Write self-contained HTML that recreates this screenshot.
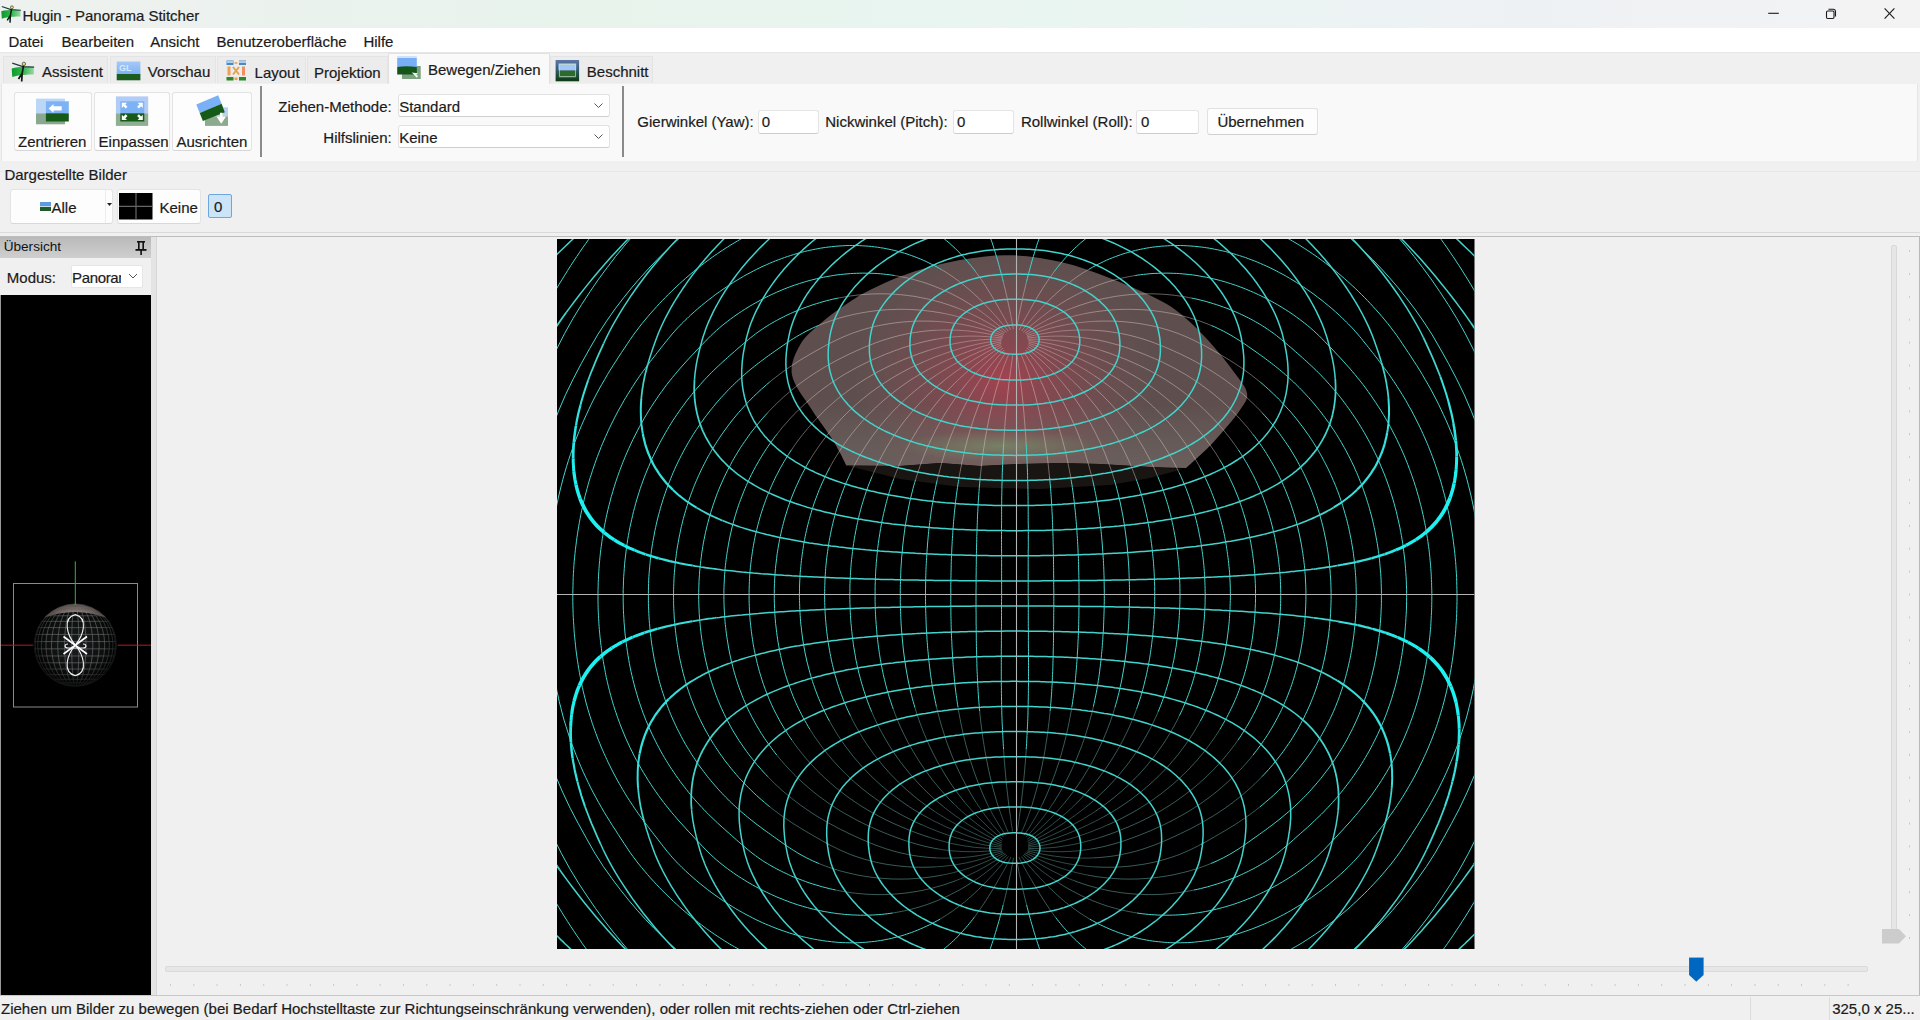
<!DOCTYPE html>
<html><head><meta charset="utf-8">
<style>
html,body{margin:0;padding:0;width:1920px;height:1020px;overflow:hidden;background:#f0f0f0;font-family:"Liberation Sans",sans-serif;color:#1a1a1a}
.a{position:absolute}
.t{position:absolute;white-space:nowrap;line-height:1;font-size:15px;color:#1b1b1b;-webkit-text-stroke:0.2px #1b1b1b}
.box{position:absolute;box-sizing:border-box}
</style></head><body>
<div class="box" style="left:0px;top:0px;width:1920px;height:28px;background:linear-gradient(90deg,#eef1ef 0%,#e8f3ec 30%,#e9f5f1 55%,#eef1f4 80%,#f3f3f3 100%)"></div>
<div class="t" style="left:22.50px;top:8.10px;">Hugin - Panorama Stitcher</div>
<svg class="a" style="left:1760px;top:0px" width="160" height="28"><g stroke="#1a1a1a" stroke-width="1.1" fill="none"><line x1="8.2" y1="13.3" x2="18.8" y2="13.3"/><rect x="66.5" y="11" width="7.5" height="7.5" rx="1.2"/><path d="M68.5 9.2 h4.8 a2.2 2.2 0 0 1 2.2 2.2 v5"/><line x1="124.6" y1="8.4" x2="134.4" y2="18.6"/><line x1="134.4" y1="8.4" x2="124.6" y2="18.6"/></g></svg>
<div class="box" style="left:0px;top:28px;width:1920px;height:24px;background:#ffffff"></div>
<div class="t" style="left:8.40px;top:33.50px;">Datei</div>
<div class="t" style="left:61.50px;top:33.50px;">Bearbeiten</div>
<div class="t" style="left:150.25px;top:33.50px;">Ansicht</div>
<div class="t" style="left:216.50px;top:33.50px;">Benutzeroberfläche</div>
<div class="t" style="left:363.40px;top:33.50px;">Hilfe</div>
<div class="box" style="left:0px;top:52px;width:1920px;height:32px;background:#f0f0f0;border-top:1px solid #e6e6e6"></div>
<div class="box" style="left:3px;top:56px;width:105px;height:27px;background:#ececec;border:1px solid #e4e4e4;border-bottom:none"></div>
<div class="box" style="left:110px;top:56px;width:106px;height:27px;background:#ececec;border:1px solid #e4e4e4;border-bottom:none"></div>
<div class="box" style="left:217px;top:56px;width:89px;height:27px;background:#ececec;border:1px solid #e4e4e4;border-bottom:none"></div>
<div class="box" style="left:307px;top:56px;width:81px;height:27px;background:#ececec;border:1px solid #e4e4e4;border-bottom:none"></div>
<div class="box" style="left:550px;top:56px;width:103px;height:27px;background:#ececec;border:1px solid #e4e4e4;border-bottom:none"></div>
<div class="box" style="left:388px;top:53px;width:162px;height:32px;background:#f9f9f9;border:1px solid #e2e2e2;border-bottom:none"></div>
<div class="t" style="left:42.10px;top:63.90px;">Assistent</div>
<div class="t" style="left:147.75px;top:63.90px;">Vorschau</div>
<div class="t" style="left:254.60px;top:64.50px;">Layout</div>
<div class="t" style="left:314.00px;top:64.50px;">Projektion</div>
<div class="t" style="left:428.00px;top:61.60px;">Bewegen/Ziehen</div>
<div class="t" style="left:586.80px;top:64.30px;">Beschnitt</div>
<div class="box" style="left:1px;top:84px;width:1917px;height:77px;background:#f9f9f9;border-left:1px solid #e6e6e6;border-right:1px solid #e6e6e6"></div>
<div class="box" style="left:14px;top:92px;width:78px;height:59px;background:#fdfdfd;border:1px solid #e3e3e3;border-bottom-color:#d6d6d6;border-radius:3px"></div>
<div class="box" style="left:94px;top:92px;width:76px;height:59px;background:#fdfdfd;border:1px solid #e3e3e3;border-bottom-color:#d6d6d6;border-radius:3px"></div>
<div class="box" style="left:172px;top:92px;width:80px;height:59px;background:#fdfdfd;border:1px solid #e3e3e3;border-bottom-color:#d6d6d6;border-radius:3px"></div>
<div class="t" style="left:18.00px;top:134.40px;">Zentrieren</div>
<div class="t" style="left:98.60px;top:134.40px;">Einpassen</div>
<div class="t" style="left:176.50px;top:134.40px;">Ausrichten</div>
<div class="box" style="left:260px;top:86px;width:2px;height:71px;background:#8a8a8a"></div>
<div class="box" style="left:622px;top:86px;width:2px;height:71px;background:#8a8a8a"></div>
<div class="t" style="right:1528.30px;top:98.90px;">Ziehen-Methode:</div>
<div class="t" style="right:1528.30px;top:130.00px;">Hilfslinien:</div>
<div class="box" style="left:398px;top:94px;width:212px;height:23px;background:#ffffff;border:1px solid #e2e2e2;border-bottom-color:#cfcfcf;border-radius:3px"></div>
<div class="box" style="left:398px;top:125px;width:212px;height:23px;background:#ffffff;border:1px solid #e2e2e2;border-bottom-color:#cfcfcf;border-radius:3px"></div>
<div class="t" style="left:399.20px;top:98.90px;">Standard</div>
<div class="t" style="left:399.20px;top:130.00px;">Keine</div>
<svg class="a" style="left:590px;top:98px" width="16" height="48"><g stroke="#555" stroke-width="1" fill="none"><polyline points="4.5,5.5 8.5,9.5 12.5,5.5"/><polyline points="4.5,36.5 8.5,40.5 12.5,36.5"/></g></svg>
<div class="t" style="left:637.30px;top:114.30px;">Gierwinkel (Yaw):</div>
<div class="t" style="left:825.25px;top:114.30px;">Nickwinkel (Pitch):</div>
<div class="t" style="left:1020.90px;top:114.30px;">Rollwinkel (Roll):</div>
<div class="box" style="left:758px;top:110px;width:61px;height:24px;background:#ffffff;border:1px solid #e4e4e4;border-bottom-color:#cdcdcd;border-radius:3px"></div>
<div class="box" style="left:953px;top:110px;width:61px;height:24px;background:#ffffff;border:1px solid #e4e4e4;border-bottom-color:#cdcdcd;border-radius:3px"></div>
<div class="box" style="left:1136px;top:110px;width:63px;height:24px;background:#ffffff;border:1px solid #e4e4e4;border-bottom-color:#cdcdcd;border-radius:3px"></div>
<div class="t" style="left:761.70px;top:114.30px;">0</div>
<div class="t" style="left:957.00px;top:114.30px;">0</div>
<div class="t" style="left:1141.00px;top:114.30px;">0</div>
<div class="box" style="left:1207px;top:108px;width:111px;height:27px;background:#fdfdfd;border:1px solid #e1e1e1;border-bottom-color:#d0d0d0;border-radius:3px"></div>
<div class="t" style="left:1217.40px;top:114.30px;">Übernehmen</div>
<div class="box" style="left:0px;top:171px;width:1920px;height:1px;background:#e8e8e8"></div>
<div class="t" style="left:4.40px;top:167.40px;">Dargestellte Bilder</div>
<div class="box" style="left:10px;top:189px;width:103px;height:35px;background:#fdfdfd;border:1px solid #e4e4e4;border-bottom-color:#d8d8d8;border-radius:3px"></div>
<div class="box" style="left:105px;top:190px;width:1px;height:33px;background:#ececec"></div>
<svg class="a" style="left:106px;top:202px" width="8" height="6"><polygon points="1,1 6,1 3.5,4" fill="#222"/></svg>
<div class="box" style="left:40px;top:202px;width:11px;height:9px;background:linear-gradient(#5b9be0 0,#5b9be0 45%,#c8d8e8 45%,#c8d8e8 55%,#1e5a2a 55%)"></div>
<div class="t" style="left:51.50px;top:199.50px;">Alle</div>
<div class="box" style="left:117px;top:189px;width:84px;height:35px;background:#fdfdfd;border:1px solid #e4e4e4;border-bottom-color:#d8d8d8;border-radius:3px"></div>
<svg class="a" style="left:119px;top:193px" width="34" height="27"><rect x="0" y="0" width="33.5" height="26.5" fill="#000"/><line x1="17" y1="0" x2="17" y2="26.5" stroke="#666" stroke-width="1.2"/><line x1="0" y1="13.3" x2="33.5" y2="13.3" stroke="#666" stroke-width="1.2"/></svg>
<div class="t" style="left:159.50px;top:199.50px;">Keine</div>
<div class="box" style="left:208px;top:194px;width:24px;height:24px;background:#cce4f7;border:1px solid #6fa6dc;border-radius:2px"></div>
<div class="t" style="left:214.00px;top:199.10px;">0</div>
<div class="box" style="left:0px;top:232px;width:1920px;height:1px;background:#dadada"></div>
<div class="box" style="left:0px;top:236px;width:1920px;height:1px;background:#bdbdbd"></div>
<div class="box" style="left:0px;top:237px;width:151px;height:21px;background:linear-gradient(#b9b9b9,#cfcfcf)"></div>
<div class="t" style="left:3.70px;top:240.19px;font-size:13.6px;color:#111;-webkit-text-stroke:0">Übersicht</div>
<svg class="a" style="left:134px;top:240px" width="14" height="16"><g fill="#111"><rect x="3" y="1" width="8" height="1.6"/><rect x="4" y="1" width="1.6" height="9"/><rect x="8.4" y="1" width="1.6" height="9"/><rect x="1.5" y="9" width="11" height="1.8"/><rect x="6.3" y="10" width="1.6" height="5"/></g></svg>
<div class="box" style="left:0px;top:258px;width:151px;height:37px;background:#f0f0f0"></div>
<div class="t" style="left:6.80px;top:269.60px;">Modus:</div>
<div class="box" style="left:71px;top:265px;width:72px;height:23px;background:#ffffff;border:1px solid #e6e6e6;border-radius:2px"></div>
<div class="a" style="left:72px;top:265px;width:49px;height:23px;overflow:hidden"><div class="t" style="left:0px;top:4.9px;letter-spacing:-0.35px">Panorama</div></div>
<svg class="a" style="left:127px;top:271px" width="12" height="10"><polyline points="2,3 6,7 10,3" stroke="#555" stroke-width="1" fill="none"/></svg>
<div class="box" style="left:0px;top:295px;width:151px;height:700px;background:#000;border-left:1px solid #9a9a9a"></div>
<div class="box" style="left:151px;top:237px;width:6px;height:758px;background:#e4e4e4;border-right:1px solid #d6d6d6"></div>
<svg class="a" style="left:1px;top:295px" width="150" height="700" viewBox="1 295 150 700"><defs><clipPath id="sph"><circle cx="75.3" cy="645.2" r="41.6"/></clipPath><radialGradient id="sg" cx="0.5" cy="0.5" r="0.5"><stop offset="0" stop-color="#1a1f1e"/><stop offset="0.8" stop-color="#0c0d0d"/><stop offset="1" stop-color="#000"/></radialGradient><radialGradient id="fade" cx="0.5" cy="0.45" r="0.55"><stop offset="0.6" stop-color="#000" stop-opacity="0"/><stop offset="1" stop-color="#000" stop-opacity="0.85"/></radialGradient></defs><rect x="13.5" y="583.5" width="124" height="123.5" fill="none" stroke="#8a8a8a" stroke-width="1"/><line x1="1" y1="645.2" x2="34" y2="645.2" stroke="#c01818" stroke-width="1"/><line x1="117" y1="645.2" x2="151" y2="645.2" stroke="#c01818" stroke-width="1"/><circle cx="75.3" cy="645.2" r="41.6" fill="url(#sg)"/><g clip-path="url(#sph)" stroke="#b0bcb8" stroke-width="0.7" fill="none" opacity="0.5"><line x1="30" y1="685.38" x2="120" y2="685.38"/><line x1="30" y1="682.90" x2="120" y2="682.90"/><line x1="30" y1="679.28" x2="120" y2="679.28"/><line x1="30" y1="674.62" x2="120" y2="674.62"/><line x1="30" y1="669.06" x2="120" y2="669.06"/><line x1="30" y1="662.78" x2="120" y2="662.78"/><line x1="30" y1="655.97" x2="120" y2="655.97"/><line x1="30" y1="648.83" x2="120" y2="648.83"/><line x1="30" y1="641.57" x2="120" y2="641.57"/><line x1="30" y1="634.43" x2="120" y2="634.43"/><line x1="30" y1="627.62" x2="120" y2="627.62"/><line x1="30" y1="621.34" x2="120" y2="621.34"/><line x1="30" y1="615.78" x2="120" y2="615.78"/><line x1="30" y1="611.12" x2="120" y2="611.12"/><line x1="30" y1="607.50" x2="120" y2="607.50"/><line x1="30" y1="605.02" x2="120" y2="605.02"/><line x1="30" y1="603.76" x2="120" y2="603.76"/><ellipse cx="75.3" cy="645.2" rx="3.63" ry="41.6"/><ellipse cx="75.3" cy="645.2" rx="10.77" ry="41.6"/><ellipse cx="75.3" cy="645.2" rx="17.58" ry="41.6"/><ellipse cx="75.3" cy="645.2" rx="23.86" ry="41.6"/><ellipse cx="75.3" cy="645.2" rx="29.42" ry="41.6"/><ellipse cx="75.3" cy="645.2" rx="34.08" ry="41.6"/><ellipse cx="75.3" cy="645.2" rx="37.70" ry="41.6"/><ellipse cx="75.3" cy="645.2" rx="40.18" ry="41.6"/><ellipse cx="75.3" cy="645.2" rx="41.44" ry="41.6"/></g><path d="M43,618 Q75,590 107,618 Q75,606 43,618 Z" fill="#9d8f8a" opacity="0.85" clip-path="url(#sph)"/><circle cx="75.3" cy="645.2" r="42.5" fill="url(#fade)"/><line x1="75.3" y1="561.3" x2="75.3" y2="605" stroke="#2eb82e" stroke-width="1"/><g stroke="#f2f2f2" stroke-width="1.1" fill="none"><path d="M75.3,645.2 C67,635 62,618 75.3,614.6 C88.6,618 83.6,635 75.3,645.2 C67,655 62,672 75.3,675.8 C88.6,672 83.6,655 75.3,645.2"/><path d="M68,644 C64,644 64,648 68,648 L83,648 C87,648 87,644 83,644"/></g><g stroke="#ffffff" stroke-width="1.6"><line x1="63.5" y1="636.5" x2="87" y2="654"/><line x1="63.5" y1="654" x2="87" y2="636.5"/></g></svg>
<div class="box" style="left:157px;top:237px;width:1763px;height:758px;background:#f0f0f0;border-right:1px solid #b8b8b8"></div>
<svg class="a" style="left:0;top:0" width="1920" height="1020" viewBox="0 0 1920 1020">
<defs>
<clipPath id="fr"><rect x="557" y="239" width="917.5" height="710"/></clipPath>
<radialGradient id="red" gradientUnits="userSpaceOnUse" cx="1003" cy="380" r="150" gradientTransform="translate(1003 372) scale(1 0.85) translate(-1003 -372)"><stop offset="0" stop-color="#b33f50" stop-opacity="0.8"/><stop offset="0.45" stop-color="#9a4552" stop-opacity="0.45"/><stop offset="1" stop-color="#8a5058" stop-opacity="0"/></radialGradient>
<linearGradient id="band" gradientUnits="userSpaceOnUse" x1="0" y1="405" x2="0" y2="466"><stop offset="0" stop-color="#7c7872" stop-opacity="0"/><stop offset="0.6" stop-color="#76746c" stop-opacity="0.3"/><stop offset="1" stop-color="#7a7670" stop-opacity="0.4"/></linearGradient>
<radialGradient id="grn" gradientUnits="userSpaceOnUse" cx="1000" cy="446" r="100" gradientTransform="translate(1000 446) scale(1 0.16) translate(-1000 -446)"><stop offset="0" stop-color="#78a872" stop-opacity="0.5"/><stop offset="1" stop-color="#78a872" stop-opacity="0"/></radialGradient>
</defs>
<rect x="557" y="239" width="917.5" height="710" fill="#000"/>
<g clip-path="url(#fr)">
<path d="M846.5,465.6 C844.4,461.6 839.5,450.7 833.7,441.4 C828.0,432.1 819.0,421.1 812,410 C805.0,398.9 794.0,385.8 792,375 C790.0,364.2 795.2,353.7 800,345 C804.8,336.3 813.2,329.8 821,323 C828.8,316.2 838.0,309.7 846.5,304 C855.0,298.3 861.0,294.3 872,289 C883.0,283.7 898.0,276.8 912.7,272 C927.4,267.2 943.8,262.8 960,260 C976.2,257.2 993.2,255.0 1010,255.3 C1026.8,255.6 1044.0,258.1 1061,262 C1078.0,265.9 1095.0,272.3 1112,279 C1129.0,285.7 1150.0,294.8 1163,302 C1176.0,309.2 1181.5,314.5 1190,322 C1198.5,329.5 1206.6,338.6 1214,347 C1221.4,355.4 1228.8,364.8 1234.3,372.5 C1239.8,380.2 1246.0,386.8 1247,393 C1248.0,399.2 1245.5,401.9 1240,410 C1234.5,418.1 1223.0,431.7 1214,441.4 C1205.0,451.1 1190.7,463.6 1186,468 L1150,467 L1100,464 L1060,463 L1020,464 L980,466 L940,463 L900,466 Z" fill="#5e4f4e"/>
<path d="M846.5,465.6 C844.4,461.6 839.5,450.7 833.7,441.4 C828.0,432.1 819.0,421.1 812,410 C805.0,398.9 794.0,385.8 792,375 C790.0,364.2 795.2,353.7 800,345 C804.8,336.3 813.2,329.8 821,323 C828.8,316.2 838.0,309.7 846.5,304 C855.0,298.3 861.0,294.3 872,289 C883.0,283.7 898.0,276.8 912.7,272 C927.4,267.2 943.8,262.8 960,260 C976.2,257.2 993.2,255.0 1010,255.3 C1026.8,255.6 1044.0,258.1 1061,262 C1078.0,265.9 1095.0,272.3 1112,279 C1129.0,285.7 1150.0,294.8 1163,302 C1176.0,309.2 1181.5,314.5 1190,322 C1198.5,329.5 1206.6,338.6 1214,347 C1221.4,355.4 1228.8,364.8 1234.3,372.5 C1239.8,380.2 1246.0,386.8 1247,393 C1248.0,399.2 1245.5,401.9 1240,410 C1234.5,418.1 1223.0,431.7 1214,441.4 C1205.0,451.1 1190.7,463.6 1186,468 L1150,467 L1100,464 L1060,463 L1020,464 L980,466 L940,463 L900,466 Z" fill="url(#red)"/>
<path d="M846.5,465.6 C844.4,461.6 839.5,450.7 833.7,441.4 C828.0,432.1 819.0,421.1 812,410 C805.0,398.9 794.0,385.8 792,375 C790.0,364.2 795.2,353.7 800,345 C804.8,336.3 813.2,329.8 821,323 C828.8,316.2 838.0,309.7 846.5,304 C855.0,298.3 861.0,294.3 872,289 C883.0,283.7 898.0,276.8 912.7,272 C927.4,267.2 943.8,262.8 960,260 C976.2,257.2 993.2,255.0 1010,255.3 C1026.8,255.6 1044.0,258.1 1061,262 C1078.0,265.9 1095.0,272.3 1112,279 C1129.0,285.7 1150.0,294.8 1163,302 C1176.0,309.2 1181.5,314.5 1190,322 C1198.5,329.5 1206.6,338.6 1214,347 C1221.4,355.4 1228.8,364.8 1234.3,372.5 C1239.8,380.2 1246.0,386.8 1247,393 C1248.0,399.2 1245.5,401.9 1240,410 C1234.5,418.1 1223.0,431.7 1214,441.4 C1205.0,451.1 1190.7,463.6 1186,468 L1150,467 L1100,464 L1060,463 L1020,464 L980,466 L940,463 L900,466 Z" fill="url(#band)"/>
<ellipse cx="1000" cy="446" rx="100" ry="16" fill="url(#grn)"/>
<path d="M846.5,465.6 L900,466 L940,463 L980,466 L1020,464 L1060,463 L1100,464 L1150,467 L1183,469 L1150,478 L1110,485 L1040,489 L960,487 L900,479 Z" fill="#191513"/>
<path d="M1017.3,831.3 1017.7,828.3 1018.2,825.3 1018.6,822.5 1019.0,819.6 1019.4,816.8 1019.5,815.7M1012.5,831.3 1012.1,828.3 1011.6,825.3 1011.2,822.5 1010.8,819.6 1010.4,816.8 1010.3,815.7M1021.4,832.8 1022.4,830.4 1023.4,828.1 1024.6,825.2 1025.7,822.4 1026.8,819.6 1027.9,816.8 1028.9,814.0 1029.9,811.2 1030.7,809.0M1008.4,832.8 1007.4,830.4 1006.4,828.1 1005.2,825.2 1004.1,822.4 1003.0,819.6 1001.9,816.8 1000.9,814.0 999.9,811.2 999.1,809.0M1024.1,835.2 1025.7,832.8 1027.3,830.5 1028.8,828.3 1030.2,826.0 1031.6,823.8 1032.9,821.6 1034.2,819.5 1035.5,817.3 1037.0,814.6 1038.4,811.9 1039.9,809.2 1041.2,806.5 1042.6,803.8M1005.7,835.2 1004.1,832.8 1002.5,830.5 1001.0,828.3 999.6,826.0 998.2,823.8 996.9,821.6 995.6,819.5 994.3,817.3 992.8,814.6 991.4,811.9 989.9,809.2 988.6,806.5 987.2,803.8M1026.1,837.2 1028.3,834.9 1030.4,832.7 1032.3,830.5 1034.2,828.4 1036.1,826.2 1037.8,824.1 1039.5,822.0 1041.2,820.0 1042.8,817.9 1044.4,815.8 1045.9,813.7 1047.4,811.6 1048.9,809.5 1050.3,807.4 1051.8,805.3 1053.1,803.2 1053.8,802.2M1003.7,837.2 1001.5,834.9 999.4,832.7 997.5,830.5 995.6,828.4 993.7,826.2 992.0,824.1 990.3,822.0 988.6,820.0 987.0,817.9 985.4,815.8 983.9,813.7 982.4,811.6 980.9,809.5 979.5,807.4 978.0,805.3 976.7,803.2 976.0,802.2M1027.3,839.3 1029.3,837.7 1031.2,836.1 1033.7,834.0 1036.1,832.0 1038.4,830.0 1040.6,828.0 1042.7,826.0 1044.8,824.0 1046.8,822.1 1048.8,820.1 1050.8,818.1 1052.7,816.1 1054.6,814.2 1056.4,812.2 1058.2,810.2 1060.0,808.2 1061.8,806.1 1063.5,804.1 1064.8,802.6M1002.5,839.3 1000.5,837.7 998.6,836.1 996.1,834.0 993.7,832.0 991.4,830.0 989.2,828.0 987.1,826.0 985.0,824.0 983.0,822.1 981.0,820.1 979.0,818.1 977.1,816.1 975.2,814.2 973.4,812.2 971.6,810.2 969.8,808.2 968.0,806.1 966.3,804.1 965.0,802.6M1027.6,841.4 1030.0,839.9 1032.3,838.5 1034.5,837.1 1036.6,835.7 1039.3,833.8 1042.0,832.0 1044.5,830.1 1047.0,828.3 1049.5,826.5 1051.9,824.7 1054.2,822.8 1056.5,821.0 1058.8,819.2 1061.0,817.3 1063.2,815.4 1065.4,813.6 1067.6,811.7 1069.7,809.8 1071.7,807.8 1073.8,805.9 1075.8,803.9M1002.2,841.4 999.8,839.9 997.5,838.5 995.3,837.1 993.2,835.7 990.5,833.8 987.8,832.0 985.3,830.1 982.8,828.3 980.3,826.5 977.9,824.7 975.6,822.8 973.3,821.0 971.0,819.2 968.8,817.3 966.6,815.4 964.4,813.6 962.2,811.7 960.1,809.8 958.1,807.8 956.0,805.9 954.0,803.9M1028.2,843.0 1030.8,841.8 1033.4,840.5 1035.9,839.3 1038.2,838.1 1040.5,836.8 1042.8,835.6 1045.0,834.4 1047.9,832.7 1050.7,831.1 1053.5,829.4 1056.2,827.8 1058.9,826.1 1061.6,824.5 1064.2,822.8 1066.7,821.1 1069.3,819.4 1071.8,817.6 1074.3,815.9 1076.7,814.1 1079.1,812.3 1081.5,810.5 1083.9,808.7 1086.2,806.8M1001.6,843.0 999.0,841.8 996.4,840.5 993.9,839.3 991.6,838.1 989.3,836.8 987.0,835.6 984.8,834.4 981.9,832.7 979.1,831.1 976.3,829.4 973.6,827.8 970.9,826.1 968.2,824.5 965.6,822.8 963.1,821.1 960.5,819.4 958.0,817.6 955.5,815.9 953.1,814.1 950.7,812.3 948.3,810.5 945.9,808.7 943.6,806.8M1028.2,844.5 1031.2,843.6 1033.9,842.6 1036.6,841.6 1039.2,840.6 1041.7,839.6 1044.2,838.6 1046.6,837.5 1049.0,836.5 1051.4,835.4 1053.7,834.3 1056.0,833.3 1058.3,832.2 1060.6,831.1 1063.5,829.6 1066.5,828.1 1069.4,826.6 1072.3,825.1 1075.1,823.5 1077.9,822.0 1080.7,820.4 1083.5,818.8 1086.2,817.1 1088.9,815.4 1091.6,813.8 1094.2,812.0 1095.5,811.2M1001.6,844.5 998.6,843.6 995.9,842.6 993.2,841.6 990.6,840.6 988.1,839.6 985.6,838.6 983.2,837.5 980.8,836.5 978.4,835.4 976.1,834.3 973.8,833.3 971.5,832.2 969.2,831.1 966.3,829.6 963.3,828.1 960.4,826.6 957.5,825.1 954.7,823.5 951.9,822.0 949.1,820.4 946.3,818.8 943.6,817.1 940.9,815.4 938.2,813.8 935.6,812.0 934.3,811.2M1027.9,846.0 1031.0,845.3 1034.0,844.7 1036.8,844.0 1039.6,843.3 1042.3,842.5 1044.9,841.7 1047.5,840.9 1050.1,840.1 1052.6,839.2 1055.1,838.4 1057.6,837.5 1060.1,836.6 1062.5,835.7 1065.0,834.7 1067.4,833.8 1069.8,832.8 1072.2,831.8 1074.5,830.9 1076.9,829.9 1079.2,828.8 1081.6,827.8 1083.9,826.8 1086.2,825.7 1088.5,824.6 1090.7,823.5 1093.0,822.4 1095.2,821.3 1098.2,819.8 1101.1,818.2 1103.3,817.0M1001.9,846.0 998.8,845.3 995.8,844.7 993.0,844.0 990.2,843.3 987.5,842.5 984.9,841.7 982.3,840.9 979.7,840.1 977.2,839.2 974.7,838.4 972.2,837.5 969.7,836.6 967.3,835.7 964.8,834.7 962.4,833.8 960.0,832.8 957.6,831.8 955.3,830.9 952.9,829.9 950.6,828.8 948.2,827.8 945.9,826.8 943.6,825.7 941.3,824.6 939.1,823.5 936.8,822.4 934.6,821.3 931.6,819.8 928.7,818.2 926.5,817.0M1028.2,847.2 1031.4,846.9 1034.5,846.5 1037.4,846.1 1040.3,845.7 1043.1,845.3 1045.8,844.8 1048.5,844.3 1051.2,843.7 1053.9,843.1 1056.5,842.5 1059.1,841.9 1061.8,841.2 1064.3,840.5 1066.9,839.8 1069.5,839.0 1072.0,838.3 1074.6,837.5 1077.1,836.7 1079.6,835.8 1082.1,835.0 1084.6,834.1 1087.1,833.2 1089.6,832.3 1092.1,831.4 1094.5,830.4 1097.0,829.4 1099.4,828.5 1101.8,827.5 1104.2,826.4 1106.6,825.4 1107.4,825.0M1001.6,847.2 998.4,846.9 995.3,846.5 992.4,846.1 989.5,845.7 986.7,845.3 984.0,844.8 981.3,844.3 978.6,843.7 975.9,843.1 973.3,842.5 970.7,841.9 968.0,841.2 965.5,840.5 962.9,839.8 960.3,839.0 957.8,838.3 955.2,837.5 952.7,836.7 950.2,835.8 947.7,835.0 945.2,834.1 942.7,833.2 940.2,832.3 937.7,831.4 935.3,830.4 932.8,829.4 930.4,828.5 928.0,827.5 925.6,826.4 923.2,825.4 922.4,825.0M1028.2,848.4 1031.5,848.5 1034.6,848.5 1037.6,848.4 1040.5,848.3 1043.3,848.2 1046.1,848.0 1048.9,847.8 1051.6,847.6 1054.3,847.4 1057.1,847.1 1059.8,846.7 1062.4,846.3 1065.1,845.9 1067.8,845.5 1070.4,845.0 1073.1,844.5 1075.8,844.0 1078.4,843.4 1081.0,842.8 1083.7,842.1 1086.3,841.4 1088.9,840.7 1091.5,840.0 1094.1,839.3 1096.7,838.5 1099.3,837.7 1100.2,837.4M1001.6,848.4 998.3,848.5 995.2,848.5 992.2,848.4 989.3,848.3 986.5,848.2 983.7,848.0 980.9,847.8 978.2,847.6 975.5,847.4 972.7,847.1 970.0,846.7 967.4,846.3 964.7,845.9 962.0,845.5 959.4,845.0 956.7,844.5 954.0,844.0 951.4,843.4 948.8,842.8 946.1,842.1 943.5,841.4 940.9,840.7 938.3,840.0 935.7,839.3 933.1,838.5 930.5,837.7 929.6,837.4M1028.0,849.7 1031.2,850.0 1034.3,850.4 1037.2,850.7 1040.1,850.9 1042.9,851.1 1045.7,851.3 1048.5,851.5 1051.2,851.6 1054.0,851.7 1056.7,851.7 1059.4,851.7 1062.1,851.7 1064.8,851.6 1067.5,851.5 1070.2,851.4 1072.9,851.2 1075.6,851.0 1078.3,850.8 1081.0,850.5 1083.7,850.1 1086.4,849.8 1089.1,849.4 1091.8,848.9M1001.8,849.7 998.6,850.0 995.5,850.4 992.6,850.7 989.7,850.9 986.9,851.1 984.1,851.3 981.3,851.5 978.6,851.6 975.8,851.7 973.1,851.7 970.4,851.7 967.7,851.7 965.0,851.6 962.3,851.5 959.6,851.4 956.9,851.2 954.2,851.0 951.5,850.8 948.8,850.5 946.1,850.1 943.4,849.8 940.7,849.4 938.0,848.9M1027.4,850.9 1030.5,851.6 1033.5,852.2 1036.4,852.9 1039.2,853.4 1041.9,854.0 1044.6,854.5 1047.3,855.0 1050.0,855.4 1052.7,855.9 1055.3,856.2 1058.0,856.6 1060.7,856.9 1063.3,857.2 1066.0,857.4 1068.7,857.6 1071.3,857.8 1074.0,857.9 1076.7,858.0 1079.4,858.1 1082.1,858.1 1084.8,858.1 1087.5,858.1 1090.2,858.0 1092.9,857.9 1093.8,857.9M1002.4,850.9 999.3,851.6 996.3,852.2 993.4,852.9 990.6,853.4 987.9,854.0 985.2,854.5 982.5,855.0 979.8,855.4 977.1,855.9 974.5,856.2 971.8,856.6 969.1,856.9 966.5,857.2 963.8,857.4 961.1,857.6 958.5,857.8 955.8,857.9 953.1,858.0 950.4,858.1 947.7,858.1 945.0,858.1 942.3,858.1 939.6,858.0 936.9,857.9 936.0,857.9M1026.6,852.0 1029.5,853.0 1032.3,854.0 1035.0,854.9 1037.7,855.8 1040.3,856.7 1042.9,857.5 1045.4,858.3 1048.0,859.0 1050.5,859.7 1053.1,860.4 1055.6,861.0 1058.1,861.7 1060.7,862.2 1063.2,862.8 1065.8,863.3 1068.4,863.8 1071.0,864.2 1073.5,864.7 1076.1,865.1 1078.8,865.4 1081.4,865.7 1084.0,866.0 1086.7,866.3 1089.3,866.5 1092.0,866.7 1094.7,866.9M1003.2,852.0 1000.3,853.0 997.5,854.0 994.8,854.9 992.1,855.8 989.5,856.7 986.9,857.5 984.4,858.3 981.8,859.0 979.3,859.7 976.7,860.4 974.2,861.0 971.7,861.7 969.1,862.2 966.6,862.8 964.0,863.3 961.4,863.8 958.8,864.2 956.3,864.7 953.7,865.1 951.0,865.4 948.4,865.7 945.8,866.0 943.1,866.3 940.5,866.5 937.8,866.7 935.1,866.9M1025.4,853.0 1028.1,854.3 1030.7,855.6 1033.2,856.8 1035.7,857.9 1038.1,859.0 1040.5,860.1 1042.8,861.2 1045.2,862.2 1047.5,863.2 1049.8,864.1 1052.2,865.0 1054.5,865.9 1056.9,866.8 1059.2,867.6 1061.6,868.4 1064.0,869.1 1066.4,869.9 1068.8,870.6 1071.2,871.3 1073.7,871.9 1076.2,872.6 1078.6,873.2 1081.1,873.7 1083.6,874.3 1086.2,874.8 1087.9,875.1M1004.4,853.0 1001.7,854.3 999.1,855.6 996.6,856.8 994.1,857.9 991.7,859.0 989.3,860.1 987.0,861.2 984.6,862.2 982.3,863.2 980.0,864.1 977.6,865.0 975.3,865.9 972.9,866.8 970.6,867.6 968.2,868.4 965.8,869.1 963.4,869.9 961.0,870.6 958.6,871.3 956.1,871.9 953.6,872.6 951.2,873.2 948.7,873.7 946.2,874.3 943.6,874.8 941.9,875.1M1024.0,853.9 1026.4,855.4 1028.7,856.9 1030.9,858.4 1033.1,859.8 1035.2,861.1 1038.1,862.8 1040.9,864.5 1043.6,866.1 1046.4,867.7 1049.2,869.2 1051.9,870.7 1054.7,872.1 1057.6,873.5 1060.4,874.9 1063.3,876.2 1066.2,877.4 1069.1,878.7 1072.1,879.9 1074.3,880.7M1005.8,853.9 1003.4,855.4 1001.1,856.9 998.9,858.4 996.7,859.8 994.6,861.1 991.7,862.8 988.9,864.5 986.2,866.1 983.4,867.7 980.6,869.2 977.9,870.7 975.1,872.1 972.2,873.5 969.4,874.9 966.5,876.2 963.6,877.4 960.7,878.7 957.7,879.9 955.5,880.7M1023.0,855.2 1024.9,856.9 1026.8,858.6 1029.4,860.7 1031.8,862.8 1034.2,864.8 1036.6,866.7 1038.9,868.6 1041.2,870.4 1043.6,872.2 1045.9,874.0 1048.3,875.7 1050.6,877.4 1053.0,879.1 1055.4,880.7 1057.9,882.3 1059.7,883.5M1006.8,855.2 1004.9,856.9 1003.0,858.6 1000.4,860.7 998.0,862.8 995.6,864.8 993.2,866.7 990.9,868.6 988.6,870.4 986.2,872.2 983.9,874.0 981.5,875.7 979.2,877.4 976.8,879.1 974.4,880.7 971.9,882.3 970.1,883.5M1021.4,856.5 1023.4,858.9 1025.3,861.3 1027.2,863.5 1029.1,865.8 1031.0,867.9 1032.9,870.0 1034.7,872.1 1036.5,874.1 1038.4,876.1 1040.2,878.1 1042.0,880.0 1043.9,882.0 1045.7,883.9M1008.4,856.5 1006.4,858.9 1004.5,861.3 1002.6,863.5 1000.7,865.8 998.8,867.9 996.9,870.0 995.1,872.1 993.3,874.1 991.4,876.1 989.6,878.1 987.8,880.0 985.9,882.0 984.1,883.9M1018.9,856.9 1020.1,859.5 1021.4,862.0 1022.7,864.4 1023.9,866.7 1025.2,869.0 1026.4,871.3 1027.7,873.5 1029.0,875.7 1030.2,877.8 1031.8,880.5M1010.9,856.9 1009.7,859.5 1008.4,862.0 1007.1,864.4 1005.9,866.7 1004.6,869.0 1003.4,871.3 1002.1,873.5 1000.8,875.7 999.6,877.8 998.0,880.5M1016.4,857.8 1016.8,860.5 1017.2,863.0 1017.8,866.0 1018.4,869.0 1018.9,871.9 1019.5,874.8 1019.7,875.3M1013.4,857.8 1013.0,860.5 1012.6,863.0 1012.0,866.0 1011.4,869.0 1010.9,871.9 1010.3,874.8 1010.1,875.3" stroke="#7cc8c0" stroke-width="0.85" stroke-opacity="0.45" fill="none"/><path d="M1019.5,815.7 1019.9,812.9 1020.3,810.1 1020.7,807.3 1021.0,804.5 1021.4,801.7 1021.7,798.9 1022.0,796.1 1022.3,793.3 1022.7,790.5 1022.8,789.4M1022.8,789.4 1023.1,786.6 1023.4,783.8 1023.6,781.1 1023.9,778.3 1024.2,775.5 1024.4,772.7 1024.7,769.9 1024.9,767.1 1025.1,764.3 1025.4,761.5 1025.6,758.7 1025.8,756.0 1026.0,753.2 1026.2,750.4 1026.2,749.3M1010.3,815.7 1009.9,812.9 1009.5,810.1 1009.1,807.3 1008.8,804.5 1008.4,801.7 1008.1,798.9 1007.8,796.1 1007.5,793.3 1007.1,790.5 1007.0,789.4M1007.0,789.4 1006.7,786.6 1006.4,783.8 1006.2,781.1 1005.9,778.3 1005.6,775.5 1005.4,772.7 1005.1,769.9 1004.9,767.1 1004.7,764.3 1004.4,761.5 1004.2,758.7 1004.0,756.0 1003.8,753.2 1003.6,750.4 1003.6,749.3M1030.7,809.0 1031.6,806.3 1032.5,803.5 1033.3,800.7 1034.1,798.0 1034.9,795.2 1035.7,792.4 1036.5,789.7 1037.2,786.9 1037.9,784.1 1038.6,781.3 1039.2,778.6 1039.9,775.8 1040.5,773.0 1041.1,770.2 1041.2,769.7M1041.2,769.7 1041.8,766.9 1042.4,764.1 1042.9,761.3 1043.5,758.5 1044.0,755.7 1044.5,753.0 1045.0,750.2 1045.4,747.4 1045.9,744.6 1046.3,741.8 1046.8,739.0 1047.2,736.2 1047.5,733.4 1047.9,730.6 1048.3,727.8 1048.6,725.0 1049.0,722.2 1049.3,719.4 1049.6,716.6 1049.9,713.8 1050.1,711.0M999.1,809.0 998.2,806.3 997.3,803.5 996.5,800.7 995.7,798.0 994.9,795.2 994.1,792.4 993.3,789.7 992.6,786.9 991.9,784.1 991.2,781.3 990.6,778.6 989.9,775.8 989.3,773.0 988.7,770.2 988.6,769.7M988.6,769.7 988.0,766.9 987.4,764.1 986.9,761.3 986.3,758.5 985.8,755.7 985.3,753.0 984.8,750.2 984.4,747.4 983.9,744.6 983.5,741.8 983.0,739.0 982.6,736.2 982.3,733.4 981.9,730.6 981.5,727.8 981.2,725.0 980.8,722.2 980.5,719.4 980.2,716.6 979.9,713.8 979.7,711.0M1042.6,803.8 1043.8,801.1 1045.1,798.3 1046.3,795.6 1047.5,792.9 1048.6,790.2 1049.8,787.4 1050.9,784.7 1051.9,781.9 1053.0,779.2 1054.0,776.4 1055.0,773.7 1056.0,770.9 1056.9,768.1 1057.8,765.4 1058.2,764.3M1058.2,764.3 1059.1,761.5 1059.9,758.7 1060.8,755.9 1061.6,753.1 1062.4,750.3 1063.1,747.5 1063.9,744.7 1064.6,741.9 1065.3,739.1 1066.0,736.3 1066.7,733.5 1067.3,730.7 1067.9,727.9 1068.5,725.1 1069.1,722.3 1069.6,719.4 1070.2,716.6 1070.7,713.8 1071.2,711.0 1071.6,708.1 1071.8,707.0M987.2,803.8 986.0,801.1 984.7,798.3 983.5,795.6 982.3,792.9 981.2,790.2 980.0,787.4 978.9,784.7 977.9,781.9 976.8,779.2 975.8,776.4 974.8,773.7 973.8,770.9 972.9,768.1 972.0,765.4 971.6,764.3M971.6,764.3 970.7,761.5 969.9,758.7 969.0,755.9 968.2,753.1 967.4,750.3 966.7,747.5 965.9,744.7 965.2,741.9 964.5,739.1 963.8,736.3 963.1,733.5 962.5,730.7 961.9,727.9 961.3,725.1 960.7,722.3 960.2,719.4 959.6,716.6 959.1,713.8 958.6,711.0 958.2,708.1 958.0,707.0M1053.8,802.2 1055.2,800.1 1056.5,797.9 1058.1,795.3 1059.7,792.6 1061.3,789.9 1062.8,787.2 1064.2,784.5 1065.7,781.8 1067.1,779.1 1068.5,776.4 1069.8,773.6 1071.2,770.9 1072.4,768.1 1073.7,765.4 1074.7,763.1M1074.7,763.1 1075.9,760.4 1077.1,757.6 1078.2,754.8 1079.3,752.0 1080.4,749.2 1081.5,746.4 1082.5,743.6 1083.5,740.8 1084.5,737.9 1085.4,735.1 1086.3,732.3 1087.2,729.4 1088.1,726.6 1088.9,723.8 1089.7,720.9 1090.5,718.0 1091.3,715.2 1092.0,712.3 1092.7,709.5 1093.4,706.6M976.0,802.2 974.6,800.1 973.3,797.9 971.7,795.3 970.1,792.6 968.5,789.9 967.0,787.2 965.6,784.5 964.1,781.8 962.7,779.1 961.3,776.4 960.0,773.6 958.6,770.9 957.4,768.1 956.1,765.4 955.1,763.1M955.1,763.1 953.9,760.4 952.7,757.6 951.6,754.8 950.5,752.0 949.4,749.2 948.3,746.4 947.3,743.6 946.3,740.8 945.3,737.9 944.4,735.1 943.5,732.3 942.6,729.4 941.7,726.6 940.9,723.8 940.1,720.9 939.3,718.0 938.5,715.2 937.8,712.3 937.1,709.5 936.4,706.6M1064.8,802.6 1066.4,800.5 1068.1,798.5 1069.7,796.4 1071.3,794.3 1072.9,792.2 1074.4,790.1 1075.9,788.0 1077.4,785.9 1078.9,783.7 1080.3,781.6 1081.7,779.4 1083.1,777.3 1084.5,775.1 1085.8,772.9 1087.1,770.7 1088.4,768.6 1089.7,766.4 1091.0,764.1 1091.3,763.6M1091.3,763.6 1092.5,761.4 1093.7,759.2 1094.9,756.9 1096.0,754.7 1097.2,752.4 1098.3,750.2 1099.4,747.9 1100.4,745.7 1101.7,742.8 1103.0,740.0 1104.2,737.1 1105.4,734.3 1106.6,731.4 1107.7,728.5 1108.8,725.6 1109.9,722.7 1110.9,719.8 1111.9,716.9 1112.9,714.0 1113.8,711.1 1114.7,708.2 1114.9,707.6M965.0,802.6 963.4,800.5 961.7,798.5 960.1,796.4 958.5,794.3 956.9,792.2 955.4,790.1 953.9,788.0 952.4,785.9 950.9,783.7 949.5,781.6 948.1,779.4 946.7,777.3 945.3,775.1 944.0,772.9 942.7,770.7 941.4,768.6 940.1,766.4 938.8,764.1 938.5,763.6M938.5,763.6 937.3,761.4 936.1,759.2 934.9,756.9 933.8,754.7 932.6,752.4 931.5,750.2 930.4,747.9 929.4,745.7 928.1,742.8 926.8,740.0 925.6,737.1 924.4,734.3 923.2,731.4 922.1,728.5 921.0,725.6 919.9,722.7 918.9,719.8 917.9,716.9 916.9,714.0 916.0,711.1 915.1,708.2 914.9,707.6M1075.8,803.9 1077.8,802.0 1079.7,800.0 1081.7,798.0 1083.6,795.9 1085.4,793.9 1087.3,791.9 1089.1,789.8 1090.9,787.7 1092.6,785.6 1094.4,783.5 1096.1,781.4 1097.8,779.3 1099.4,777.1 1101.0,775.0 1102.6,772.8 1104.2,770.6 1105.8,768.4 1107.3,766.2 1108.0,765.1M1108.0,765.1 1109.5,762.9 1111.0,760.7 1112.4,758.4 1113.8,756.2 1115.2,753.9 1116.5,751.7 1117.8,749.4 1119.1,747.1 1120.4,744.8 1121.7,742.5 1122.9,740.2 1124.1,737.9 1125.2,735.5 1126.4,733.2 1127.5,730.9 1128.6,728.5 1129.7,726.2 1130.7,723.8 1131.7,721.4 1132.7,719.0 1133.7,716.7 1134.6,714.3 1135.5,711.9 1136.4,709.5 1136.6,708.9M954.0,803.9 952.0,802.0 950.1,800.0 948.1,798.0 946.2,795.9 944.4,793.9 942.5,791.9 940.7,789.8 938.9,787.7 937.2,785.6 935.4,783.5 933.7,781.4 932.0,779.3 930.4,777.1 928.8,775.0 927.2,772.8 925.6,770.6 924.0,768.4 922.5,766.2 921.8,765.1M921.8,765.1 920.3,762.9 918.8,760.7 917.4,758.4 916.0,756.2 914.6,753.9 913.3,751.7 912.0,749.4 910.7,747.1 909.4,744.8 908.1,742.5 906.9,740.2 905.7,737.9 904.6,735.5 903.4,733.2 902.3,730.9 901.2,728.5 900.1,726.2 899.1,723.8 898.1,721.4 897.1,719.0 896.1,716.7 895.2,714.3 894.3,711.9 893.4,709.5 893.2,708.9M1086.2,806.8 1088.5,804.9 1090.8,803.0 1093.0,801.1 1095.2,799.2 1097.4,797.2 1099.5,795.2 1101.6,793.2 1103.7,791.2 1105.8,789.2 1107.8,787.1 1109.8,785.0 1111.8,782.9 1113.7,780.8 1115.6,778.7 1117.5,776.6 1119.4,774.4 1121.2,772.2 1123.0,770.0 1124.3,768.4M1124.3,768.4 1126.1,766.2 1127.8,763.9 1129.5,761.7 1131.1,759.4 1132.8,757.2 1134.4,754.9 1135.9,752.6 1137.5,750.3 1139.0,747.9 1140.5,745.6 1141.9,743.2 1143.3,740.9 1144.7,738.5 1146.1,736.1 1147.4,733.7 1148.7,731.3 1150.0,728.9 1151.3,726.5 1152.5,724.0 1153.7,721.6 1154.8,719.1 1156.0,716.7 1157.1,714.2 1158.1,711.7M943.6,806.8 941.3,804.9 939.0,803.0 936.8,801.1 934.6,799.2 932.4,797.2 930.3,795.2 928.2,793.2 926.1,791.2 924.0,789.2 922.0,787.1 920.0,785.0 918.0,782.9 916.1,780.8 914.2,778.7 912.3,776.6 910.4,774.4 908.6,772.2 906.8,770.0 905.5,768.4M905.5,768.4 903.7,766.2 902.0,763.9 900.3,761.7 898.7,759.4 897.0,757.2 895.4,754.9 893.9,752.6 892.3,750.3 890.8,747.9 889.3,745.6 887.9,743.2 886.5,740.9 885.1,738.5 883.7,736.1 882.4,733.7 881.1,731.3 879.8,728.9 878.5,726.5 877.3,724.0 876.1,721.6 875.0,719.1 873.8,716.7 872.7,714.2 871.7,711.7M1095.5,811.2 1098.1,809.4 1100.7,807.6 1103.2,805.8 1105.7,804.0 1108.2,802.1 1110.7,800.2 1113.1,798.3 1115.5,796.4 1117.8,794.4 1120.2,792.4 1122.5,790.4 1124.7,788.4 1127.0,786.3 1129.2,784.2 1131.4,782.1 1133.5,780.0 1135.6,777.8 1137.7,775.7 1139.8,773.5M1139.8,773.5 1141.8,771.3 1143.8,769.0 1145.8,766.8 1147.7,764.5 1149.6,762.2 1151.4,759.9 1153.3,757.6 1155.1,755.3 1156.9,752.9 1158.6,750.5 1160.3,748.1 1162.0,745.7 1163.6,743.3 1165.2,740.9 1166.8,738.4 1168.3,735.9 1169.8,733.4 1171.3,730.9 1172.7,728.4 1174.2,725.9 1175.5,723.3 1176.9,720.8 1178.2,718.2 1179.4,715.6M934.3,811.2 931.7,809.4 929.1,807.6 926.6,805.8 924.1,804.0 921.6,802.1 919.1,800.2 916.7,798.3 914.3,796.4 912.0,794.4 909.6,792.4 907.3,790.4 905.1,788.4 902.8,786.3 900.6,784.2 898.4,782.1 896.3,780.0 894.2,777.8 892.1,775.7 890.0,773.5M890.0,773.5 888.0,771.3 886.0,769.0 884.0,766.8 882.1,764.5 880.2,762.2 878.4,759.9 876.5,757.6 874.7,755.3 872.9,752.9 871.2,750.5 869.5,748.1 867.8,745.7 866.2,743.3 864.6,740.9 863.0,738.4 861.5,735.9 860.0,733.4 858.5,730.9 857.1,728.4 855.6,725.9 854.3,723.3 852.9,720.8 851.6,718.2 850.4,715.6M1103.3,817.0 1106.2,815.4 1109.0,813.8 1111.9,812.1 1114.7,810.4 1117.5,808.7 1120.2,806.9 1122.9,805.1 1125.6,803.3 1128.3,801.4 1130.9,799.5 1133.5,797.6 1136.1,795.6 1138.7,793.6 1141.2,791.6 1143.7,789.6 1146.1,787.5 1148.6,785.4 1150.9,783.3 1153.3,781.1 1154.5,780.0M1154.5,780.0 1156.8,777.8 1159.1,775.6 1161.3,773.4 1163.5,771.1 1165.7,768.8 1167.9,766.5 1170.0,764.1 1172.0,761.7 1174.1,759.3 1176.1,756.9 1178.1,754.5 1180.0,752.0 1181.9,749.5 1183.8,747.0 1185.6,744.5 1187.4,741.9 1189.2,739.4 1190.9,736.8 1192.6,734.2 1194.2,731.6 1195.8,728.9 1197.4,726.2 1198.9,723.6 1200.4,720.9M926.5,817.0 923.6,815.4 920.8,813.8 917.9,812.1 915.1,810.4 912.3,808.7 909.6,806.9 906.9,805.1 904.2,803.3 901.5,801.4 898.9,799.5 896.3,797.6 893.7,795.6 891.1,793.6 888.6,791.6 886.1,789.6 883.7,787.5 881.2,785.4 878.9,783.3 876.5,781.1 875.3,780.0M875.3,780.0 873.0,777.8 870.7,775.6 868.5,773.4 866.3,771.1 864.1,768.8 861.9,766.5 859.8,764.1 857.8,761.7 855.7,759.3 853.7,756.9 851.7,754.5 849.8,752.0 847.9,749.5 846.0,747.0 844.2,744.5 842.4,741.9 840.6,739.4 838.9,736.8 837.2,734.2 835.6,731.6 834.0,728.9 832.4,726.2 830.9,723.6 829.4,720.9M1107.4,825.0 1109.8,824.0 1112.2,822.9 1114.5,821.8 1116.9,820.7 1119.2,819.5 1121.5,818.4 1123.8,817.2 1126.1,816.0 1128.4,814.8 1130.7,813.6 1132.9,812.3 1135.1,811.0 1137.4,809.7 1139.6,808.4 1141.8,807.0 1143.9,805.7 1146.1,804.3 1148.2,802.9 1150.4,801.4 1152.5,800.0 1154.6,798.5 1156.6,797.0 1158.7,795.5 1160.8,794.0 1162.8,792.4 1164.8,790.8 1166.8,789.3M1166.8,789.3 1168.8,787.6 1170.7,786.0 1172.7,784.4 1174.6,782.7 1176.5,781.0 1178.4,779.3 1180.2,777.6 1182.1,775.8 1183.9,774.1 1185.7,772.3 1187.5,770.5 1189.2,768.7 1191.0,766.9 1192.7,765.0 1194.4,763.1 1196.1,761.3 1197.8,759.4 1199.4,757.4 1201.0,755.5 1202.6,753.6 1204.2,751.6 1205.8,749.6 1207.3,747.6 1208.8,745.6 1210.3,743.6 1211.7,741.6 1213.2,739.5 1214.6,737.5 1216.0,735.4 1217.4,733.3 1219.2,730.5 1220.0,729.1M922.4,825.0 920.0,824.0 917.6,822.9 915.3,821.8 912.9,820.7 910.6,819.5 908.3,818.4 906.0,817.2 903.7,816.0 901.4,814.8 899.1,813.6 896.9,812.3 894.7,811.0 892.4,809.7 890.2,808.4 888.0,807.0 885.9,805.7 883.7,804.3 881.6,802.9 879.4,801.4 877.3,800.0 875.2,798.5 873.2,797.0 871.1,795.5 869.0,794.0 867.0,792.4 865.0,790.8 863.0,789.3M863.0,789.3 861.0,787.6 859.1,786.0 857.1,784.4 855.2,782.7 853.3,781.0 851.4,779.3 849.6,777.6 847.7,775.8 845.9,774.1 844.1,772.3 842.3,770.5 840.6,768.7 838.8,766.9 837.1,765.0 835.4,763.1 833.7,761.3 832.0,759.4 830.4,757.4 828.8,755.5 827.2,753.6 825.6,751.6 824.0,749.6 822.5,747.6 821.0,745.6 819.5,743.6 818.1,741.6 816.6,739.5 815.2,737.5 813.8,735.4 812.4,733.3 810.6,730.5 809.8,729.1M1100.2,837.4 1102.8,836.5 1105.4,835.7 1107.9,834.8 1110.5,833.9 1113.1,833.0 1115.6,832.0 1118.1,831.0 1120.7,830.1 1123.2,829.0 1125.7,828.0 1128.2,827.0 1130.7,825.9 1133.2,824.8 1135.7,823.7 1138.1,822.6 1140.6,821.4 1143.0,820.3 1145.4,819.1 1147.9,817.8 1150.3,816.6 1152.6,815.3 1155.0,814.0 1157.4,812.7 1159.7,811.4 1162.1,810.0 1164.4,808.6 1166.7,807.2 1169.0,805.8 1171.3,804.3 1173.5,802.8 1175.8,801.3M1175.8,801.3 1178.0,799.7 1180.2,798.2 1182.4,796.6 1184.6,795.0 1186.8,793.3 1188.9,791.7 1191.0,790.0 1193.2,788.3 1195.2,786.6 1197.3,784.8 1199.4,783.0 1201.4,781.2 1203.4,779.4 1205.4,777.6 1207.4,775.7 1209.3,773.8 1211.3,771.9 1213.2,770.0 1215.1,768.0 1216.9,766.0 1218.8,764.0 1220.6,762.0 1222.4,760.0 1224.2,757.9 1225.9,755.8 1227.6,753.7 1229.4,751.6 1231.0,749.5 1232.7,747.3 1234.3,745.2 1235.9,743.0 1237.5,740.7 1238.0,740.0M929.6,837.4 927.0,836.5 924.4,835.7 921.9,834.8 919.3,833.9 916.7,833.0 914.2,832.0 911.7,831.0 909.1,830.1 906.6,829.0 904.1,828.0 901.6,827.0 899.1,825.9 896.6,824.8 894.1,823.7 891.7,822.6 889.2,821.4 886.8,820.3 884.4,819.1 881.9,817.8 879.5,816.6 877.2,815.3 874.8,814.0 872.4,812.7 870.1,811.4 867.7,810.0 865.4,808.6 863.1,807.2 860.8,805.8 858.5,804.3 856.3,802.8 854.0,801.3M854.0,801.3 851.8,799.7 849.6,798.2 847.4,796.6 845.2,795.0 843.0,793.3 840.9,791.7 838.8,790.0 836.6,788.3 834.6,786.6 832.5,784.8 830.4,783.0 828.4,781.2 826.4,779.4 824.4,777.6 822.4,775.7 820.5,773.8 818.5,771.9 816.6,770.0 814.7,768.0 812.9,766.0 811.0,764.0 809.2,762.0 807.4,760.0 805.6,757.9 803.9,755.8 802.2,753.7 800.4,751.6 798.8,749.5 797.1,747.3 795.5,745.2 793.9,743.0 792.3,740.7 791.8,740.0M1091.8,848.9 1094.5,848.5 1097.2,847.9 1099.9,847.4 1102.6,846.8 1105.3,846.2 1107.9,845.5 1110.6,844.8 1113.3,844.1 1116.0,843.3 1118.7,842.5 1121.4,841.6 1124.0,840.8 1126.7,839.9 1129.4,838.9 1132.0,838.0 1134.7,837.0 1137.3,836.0 1140.0,835.0 1142.6,833.9 1145.3,832.9 1147.9,831.8 1150.5,830.7 1153.1,829.6 1155.7,828.4 1158.3,827.2 1160.9,826.1 1163.5,824.8 1166.1,823.6 1168.6,822.3 1171.2,821.1 1173.7,819.7 1176.2,818.4 1178.7,817.0M1178.7,817.0 1181.2,815.6 1183.7,814.2 1186.2,812.8 1188.7,811.3 1191.1,809.8 1193.6,808.3 1196.0,806.7 1198.4,805.1 1200.8,803.5 1203.2,801.8 1205.5,800.1 1207.9,798.4 1210.2,796.7 1212.5,794.9 1214.8,793.1 1217.0,791.3 1219.3,789.4 1221.5,787.5 1223.7,785.6 1225.9,783.7 1228.1,781.7 1230.2,779.7 1232.4,777.7 1234.5,775.6 1236.6,773.5 1238.6,771.4 1240.7,769.3 1242.7,767.1 1244.7,764.9 1246.6,762.7 1248.6,760.4 1250.5,758.2 1252.3,755.9 1253.0,755.1M938.0,848.9 935.3,848.5 932.6,847.9 929.9,847.4 927.2,846.8 924.5,846.2 921.9,845.5 919.2,844.8 916.5,844.1 913.8,843.3 911.1,842.5 908.4,841.6 905.8,840.8 903.1,839.9 900.4,838.9 897.8,838.0 895.1,837.0 892.5,836.0 889.8,835.0 887.2,833.9 884.5,832.9 881.9,831.8 879.3,830.7 876.7,829.6 874.1,828.4 871.5,827.2 868.9,826.1 866.3,824.8 863.7,823.6 861.2,822.3 858.6,821.1 856.1,819.7 853.6,818.4 851.1,817.0M851.1,817.0 848.6,815.6 846.1,814.2 843.6,812.8 841.1,811.3 838.7,809.8 836.2,808.3 833.8,806.7 831.4,805.1 829.0,803.5 826.6,801.8 824.3,800.1 821.9,798.4 819.6,796.7 817.3,794.9 815.0,793.1 812.8,791.3 810.5,789.4 808.3,787.5 806.1,785.6 803.9,783.7 801.7,781.7 799.6,779.7 797.4,777.7 795.3,775.6 793.2,773.5 791.2,771.4 789.1,769.3 787.1,767.1 785.1,764.9 783.2,762.7 781.2,760.4 779.3,758.2 777.5,755.9 776.8,755.1M1093.8,857.9 1096.6,857.7 1099.3,857.5 1102.0,857.3 1104.8,857.0 1107.5,856.7 1110.3,856.4 1113.0,856.0 1115.8,855.6 1118.5,855.1 1121.3,854.6 1124.1,854.0 1126.8,853.4 1129.6,852.8 1132.4,852.1 1135.2,851.4 1137.9,850.6 1140.7,849.7 1141.6,849.5M1141.6,849.5 1144.4,848.6 1147.2,847.6 1150.0,846.6 1152.8,845.6 1155.5,844.6 1158.3,843.5 1161.1,842.3 1163.8,841.2 1166.6,840.0 1169.4,838.8 1172.1,837.5 1174.9,836.3 1177.6,835.0 1180.4,833.7 1183.1,832.4 1185.8,831.0 1188.6,829.7 1191.3,828.3 1194.0,826.9 1196.7,825.4 1199.4,824.0 1202.1,822.5 1204.7,821.0 1207.4,819.4 1210.0,817.9 1212.7,816.3 1215.3,814.6 1217.9,813.0 1220.5,811.2 1223.1,809.5 1225.6,807.7 1228.2,805.9 1230.7,804.1 1233.2,802.2 1235.7,800.2 1238.2,798.3 1240.7,796.3 1243.1,794.3 1245.6,792.2 1248.0,790.1 1250.4,787.9 1252.7,785.8 1255.1,783.6 1257.4,781.3 1259.7,779.0 1261.9,776.7M936.0,857.9 933.2,857.7 930.5,857.5 927.8,857.3 925.0,857.0 922.3,856.7 919.5,856.4 916.8,856.0 914.0,855.6 911.3,855.1 908.5,854.6 905.7,854.0 903.0,853.4 900.2,852.8 897.4,852.1 894.6,851.4 891.9,850.6 889.1,849.7 888.2,849.5M888.2,849.5 885.4,848.6 882.6,847.6 879.8,846.6 877.0,845.6 874.3,844.6 871.5,843.5 868.7,842.3 866.0,841.2 863.2,840.0 860.4,838.8 857.7,837.5 854.9,836.3 852.2,835.0 849.4,833.7 846.7,832.4 844.0,831.0 841.2,829.7 838.5,828.3 835.8,826.9 833.1,825.4 830.4,824.0 827.7,822.5 825.1,821.0 822.4,819.4 819.8,817.9 817.1,816.3 814.5,814.6 811.9,813.0 809.3,811.2 806.7,809.5 804.2,807.7 801.6,805.9 799.1,804.1 796.6,802.2 794.1,800.2 791.6,798.3 789.1,796.3 786.7,794.3 784.2,792.2 781.8,790.1 779.4,787.9 777.1,785.8 774.7,783.6 772.4,781.3 770.1,779.0 767.9,776.7M1094.7,866.9 1097.4,867.0 1100.1,867.1 1102.8,867.2 1105.5,867.2 1108.3,867.3 1111.0,867.2 1113.8,867.2 1116.6,867.1 1119.3,866.9 1122.1,866.8 1124.9,866.5 1127.8,866.3 1130.6,866.0 1133.4,865.7 1136.2,865.3 1139.1,864.9 1141.9,864.5 1144.8,864.0 1147.7,863.5 1150.5,862.9M1150.5,862.9 1153.4,862.3 1156.3,861.6 1159.2,860.9 1162.1,860.1 1165.0,859.3 1167.9,858.4 1170.8,857.5 1173.8,856.5 1176.7,855.5 1179.6,854.4 1182.5,853.2 1185.4,851.9 1188.4,850.6 1191.3,849.3 1194.2,847.8 1197.2,846.4 1200.1,844.8 1201.1,844.3M1204.0,842.8 1206.9,841.2 1209.8,839.5 1212.7,837.9 1215.6,836.2 1218.5,834.5 1221.4,832.8 1224.3,831.1 1227.2,829.4 1230.1,827.6 1232.9,825.9 1235.8,824.1 1238.6,822.2 1241.5,820.3 1244.3,818.4 1247.1,816.5 1249.9,814.5 1252.7,812.4 1255.4,810.4 1258.2,808.2 1260.0,806.8M935.1,866.9 932.4,867.0 929.7,867.1 927.0,867.2 924.3,867.2 921.5,867.3 918.8,867.2 916.0,867.2 913.2,867.1 910.5,866.9 907.7,866.8 904.9,866.5 902.0,866.3 899.2,866.0 896.4,865.7 893.6,865.3 890.7,864.9 887.9,864.5 885.0,864.0 882.1,863.5 879.3,862.9M879.3,862.9 876.4,862.3 873.5,861.6 870.6,860.9 867.7,860.1 864.8,859.3 861.9,858.4 859.0,857.5 856.0,856.5 853.1,855.5 850.2,854.4 847.3,853.2 844.4,851.9 841.4,850.6 838.5,849.3 835.6,847.8 832.6,846.4 829.7,844.8 828.7,844.3M825.8,842.8 822.9,841.2 820.0,839.5 817.1,837.9 814.2,836.2 811.3,834.5 808.4,832.8 805.5,831.1 802.6,829.4 799.7,827.6 796.9,825.9 794.0,824.1 791.2,822.2 788.3,820.3 785.5,818.4 782.7,816.5 779.9,814.5 777.1,812.4 774.4,810.4 771.6,808.2 769.8,806.8M1087.9,875.1 1090.4,875.6 1093.0,876.0 1095.6,876.5 1098.2,876.9 1100.8,877.2 1103.4,877.5 1106.1,877.8 1108.8,878.1 1111.5,878.3 1114.2,878.5 1116.9,878.7 1119.7,878.9 1122.4,879.0 1125.2,879.0 1128.0,879.1 1130.8,879.1 1133.6,879.0 1136.5,879.0 1139.3,878.9 1142.2,878.7 1145.1,878.5 1147.0,878.4M1147.0,878.4 1149.9,878.1 1152.9,877.9 1155.8,877.5 1158.8,877.2 1161.7,876.7 1164.7,876.3 1167.7,875.8 1170.7,875.3 1173.8,874.7 1176.8,874.0 1179.8,873.3 1182.9,872.6 1186.0,871.8 1189.1,871.0 1192.1,870.1 1195.3,869.2 1198.4,868.2 1201.5,867.1 1204.6,866.0 1207.7,864.8 1210.9,863.5M941.9,875.1 939.4,875.6 936.8,876.0 934.2,876.5 931.6,876.9 929.0,877.2 926.4,877.5 923.7,877.8 921.0,878.1 918.3,878.3 915.6,878.5 912.9,878.7 910.1,878.9 907.4,879.0 904.6,879.0 901.8,879.1 899.0,879.1 896.2,879.0 893.3,879.0 890.5,878.9 887.6,878.7 884.7,878.5 882.8,878.4M882.8,878.4 879.9,878.1 876.9,877.9 874.0,877.5 871.0,877.2 868.1,876.7 865.1,876.3 862.1,875.8 859.1,875.3 856.0,874.7 853.0,874.0 850.0,873.3 846.9,872.6 843.8,871.8 840.7,871.0 837.7,870.1 834.5,869.2 831.4,868.2 828.3,867.1 825.2,866.0 822.1,864.8 818.9,863.5M1074.3,880.7 1077.3,881.9 1080.4,882.9 1083.5,884.0 1086.6,885.0 1089.8,886.0 1092.2,886.6 1094.7,887.3 1097.1,888.0 1099.6,888.6 1102.1,889.2 1104.6,889.7 1107.1,890.3 1109.7,890.8 1112.3,891.3 1114.9,891.7 1117.5,892.1 1120.2,892.5 1121.9,892.8M1121.9,892.8 1124.6,893.1 1127.3,893.4 1130.1,893.7 1132.8,893.9 1135.6,894.1 1138.4,894.3 1141.3,894.4 1144.1,894.5 1147.0,894.6 1149.9,894.6 1152.8,894.6 1155.8,894.5 1158.8,894.4 1161.8,894.3 1164.8,894.1 1167.8,893.8 1170.9,893.6 1174.0,893.2 1177.1,892.9 1180.3,892.4 1183.4,892.0 1186.6,891.4 1189.8,890.9 1193.0,890.2 1194.1,890.0M955.5,880.7 952.5,881.9 949.4,882.9 946.3,884.0 943.2,885.0 940.0,886.0 937.6,886.6 935.1,887.3 932.7,888.0 930.2,888.6 927.7,889.2 925.2,889.7 922.7,890.3 920.1,890.8 917.5,891.3 914.9,891.7 912.3,892.1 909.6,892.5 907.9,892.8M907.9,892.8 905.2,893.1 902.5,893.4 899.7,893.7 897.0,893.9 894.2,894.1 891.4,894.3 888.5,894.4 885.7,894.5 882.8,894.6 879.9,894.6 877.0,894.6 874.0,894.5 871.0,894.4 868.0,894.3 865.0,894.1 862.0,893.8 858.9,893.6 855.8,893.2 852.7,892.9 849.5,892.4 846.4,892.0 843.2,891.4 840.0,890.9 836.8,890.2 835.7,890.0M1059.7,883.5 1062.2,885.1 1064.7,886.7 1067.3,888.2 1069.9,889.7 1072.5,891.1 1075.2,892.5 1077.9,893.9 1080.6,895.3 1083.4,896.6 1086.3,897.9 1089.1,899.2 1092.1,900.4 1092.8,900.8M1092.8,900.8 1095.8,901.9 1098.8,903.1 1101.9,904.2 1105.0,905.3 1108.1,906.3 1110.6,907.0 1113.0,907.7 1115.5,908.4 1117.9,909.1 1120.5,909.7 1123.0,910.3 1125.6,910.9 1128.2,911.4 1130.9,911.9 1133.5,912.4 1136.2,912.9 1137.1,913.0M970.1,883.5 967.6,885.1 965.1,886.7 962.5,888.2 959.9,889.7 957.3,891.1 954.6,892.5 951.9,893.9 949.2,895.3 946.4,896.6 943.5,897.9 940.7,899.2 937.7,900.4 937.0,900.8M937.0,900.8 934.0,901.9 931.0,903.1 927.9,904.2 924.8,905.3 921.7,906.3 919.2,907.0 916.8,907.7 914.3,908.4 911.9,909.1 909.3,909.7 906.8,910.3 904.2,910.9 901.6,911.4 898.9,911.9 896.3,912.4 893.6,912.9 892.7,913.0M1045.7,883.9 1047.6,885.8 1049.5,887.7 1051.4,889.6 1053.4,891.4 1055.3,893.3 1057.3,895.1 1059.4,896.9 1061.4,898.7 1063.5,900.5 1065.6,902.3 1066.2,902.7M1066.2,902.7 1068.4,904.4 1070.6,906.1 1072.8,907.8 1075.1,909.5 1077.4,911.2 1079.8,912.8 1082.2,914.4 1084.7,916.0 1087.2,917.5 1089.7,919.1M984.1,883.9 982.2,885.8 980.3,887.7 978.4,889.6 976.4,891.4 974.5,893.3 972.5,895.1 970.4,896.9 968.4,898.7 966.3,900.5 964.2,902.3 963.6,902.7M963.6,902.7 961.4,904.4 959.2,906.1 957.0,907.8 954.7,909.5 952.4,911.2 950.0,912.8 947.6,914.4 945.1,916.0 942.6,917.5 940.1,919.1M1031.8,880.5 1033.3,883.2 1034.9,885.8 1036.5,888.5 1038.0,891.1 1039.6,893.7 1041.3,896.4 1042.9,899.0 1043.9,900.5M1043.9,900.5 1045.6,903.1 1047.3,905.7 1049.0,908.2 1050.8,910.8 1052.6,913.3 1054.1,915.4 1055.6,917.4M998.0,880.5 996.5,883.2 994.9,885.8 993.3,888.5 991.8,891.1 990.2,893.7 988.5,896.4 986.9,899.0 985.9,900.5M985.9,900.5 984.2,903.1 982.5,905.7 980.8,908.2 979.0,910.8 977.2,913.3 975.7,915.4 974.2,917.4M1019.7,875.3 1020.3,878.2 1020.9,881.0 1021.5,883.8 1022.1,886.5 1022.8,889.3 1022.9,889.9M1022.9,889.9 1023.6,892.7 1024.2,895.4 1024.9,898.2 1025.6,901.0 1026.3,903.7 1026.6,904.8M1010.1,875.3 1009.5,878.2 1008.9,881.0 1008.3,883.8 1007.7,886.5 1007.0,889.3 1006.9,889.9M1006.9,889.9 1006.2,892.7 1005.6,895.4 1004.9,898.2 1004.2,901.0 1003.5,903.7 1003.2,904.8" stroke="#7cc8c0" stroke-width="0.85" stroke-opacity="0.55" fill="none"/><path d="M1019.5,372.4 1019.1,369.6 1018.7,366.8 1018.3,363.9 1017.9,361.1 1017.5,358.1 1017.1,355.2M1010.3,372.4 1010.7,369.6 1011.1,366.8 1011.5,363.9 1011.9,361.1 1012.3,358.1 1012.7,355.2M1030.2,378.5 1029.3,375.7 1028.3,372.9 1027.3,370.2 1026.3,367.4 1025.3,364.6 1024.1,361.8 1023.0,358.9 1022.0,356.6 1021.1,354.3M999.6,378.5 1000.5,375.7 1001.5,372.9 1002.5,370.2 1003.5,367.4 1004.5,364.6 1005.7,361.8 1006.8,358.9 1007.8,356.6 1008.7,354.3M1041.7,383.1 1040.4,380.4 1039.1,377.7 1037.7,375.0 1036.2,372.3 1034.7,369.6 1033.2,366.9 1031.9,364.8 1030.6,362.6 1029.2,360.4 1027.8,358.2 1026.4,356.0 1024.8,353.7 1024.1,352.5M988.1,383.1 989.4,380.4 990.7,377.7 992.1,375.0 993.6,372.3 995.1,369.6 996.6,366.9 997.9,364.8 999.2,362.6 1000.6,360.4 1002.0,358.2 1003.4,356.0 1005.0,353.7 1005.7,352.5M1052.6,384.2 1051.2,382.1 1049.8,380.0 1048.4,377.9 1046.9,375.8 1045.4,373.7 1043.9,371.7 1042.4,369.6 1040.8,367.5 1039.1,365.4 1037.5,363.4 1035.7,361.3 1034.0,359.2 1032.1,357.1 1030.2,354.9 1028.2,352.8 1026.1,350.6 1025.6,350.0M977.2,384.2 978.6,382.1 980.0,380.0 981.4,377.9 982.9,375.8 984.4,373.7 985.9,371.7 987.4,369.6 989.0,367.5 990.7,365.4 992.3,363.4 994.1,361.3 995.8,359.2 997.7,357.1 999.6,354.9 1001.6,352.8 1003.7,350.6 1004.2,350.0M1063.4,383.8 1061.7,381.8 1060.0,379.8 1058.2,377.8 1056.4,375.8 1054.6,373.8 1052.7,371.8 1050.9,369.8 1048.9,367.8 1047.0,365.9 1045.0,363.9 1042.9,362.0 1040.8,360.0 1038.7,358.1 1036.5,356.1 1034.2,354.1 1031.8,352.1 1029.3,350.1 1026.7,348.0M966.4,383.8 968.1,381.8 969.8,379.8 971.6,377.8 973.4,375.8 975.2,373.8 977.1,371.8 978.9,369.8 980.9,367.8 982.8,365.9 984.8,363.9 986.9,362.0 989.0,360.0 991.1,358.1 993.3,356.1 995.6,354.1 998.0,352.1 1000.5,350.1 1003.1,348.0M1074.3,382.5 1072.3,380.6 1070.3,378.6 1068.2,376.7 1066.1,374.8 1063.9,372.9 1061.8,371.0 1059.6,369.2 1057.3,367.3 1055.0,365.5 1052.7,363.7 1050.4,361.9 1048.0,360.1 1045.5,358.2 1043.0,356.4 1040.5,354.6 1037.9,352.8 1035.2,351.0 1033.1,349.7 1030.9,348.3 1028.6,346.9 1027.9,346.4M955.5,382.5 957.5,380.6 959.5,378.6 961.6,376.7 963.7,374.8 965.9,372.9 968.0,371.0 970.2,369.2 972.5,367.3 974.8,365.5 977.1,363.7 979.4,361.9 981.8,360.1 984.3,358.2 986.8,356.4 989.3,354.6 991.9,352.8 994.6,351.0 996.7,349.7 998.9,348.3 1001.2,346.9 1001.9,346.4M1084.7,379.7 1082.3,377.8 1080.0,376.0 1077.6,374.2 1075.2,372.4 1072.7,370.6 1070.2,368.9 1067.7,367.2 1065.2,365.5 1062.6,363.8 1060.0,362.1 1057.3,360.4 1054.6,358.8 1051.9,357.2 1049.1,355.6 1046.3,354.0 1043.4,352.3 1041.2,351.2 1039.0,350.0 1036.7,348.8 1034.3,347.6 1031.9,346.4 1029.4,345.2 1028.5,344.8M945.1,379.7 947.5,377.8 949.8,376.0 952.2,374.2 954.6,372.4 957.1,370.6 959.6,368.9 962.1,367.2 964.6,365.5 967.2,363.8 969.8,362.1 972.5,360.4 975.2,358.8 977.9,357.2 980.7,355.6 983.5,354.0 986.4,352.3 988.6,351.2 990.8,350.0 993.1,348.8 995.5,347.6 997.9,346.4 1000.4,345.2 1001.3,344.8M1093.9,375.3 1091.3,373.6 1088.6,371.9 1085.9,370.2 1083.2,368.6 1080.4,367.0 1077.7,365.4 1074.9,363.8 1072.0,362.3 1069.2,360.8 1066.3,359.3 1063.3,357.8 1060.4,356.3 1057.4,354.9 1055.1,353.8 1052.8,352.8 1050.5,351.7 1048.1,350.7 1045.8,349.7 1043.4,348.7 1040.9,347.7 1038.4,346.7 1035.9,345.7 1033.2,344.8 1030.5,343.9 1028.6,343.3M935.9,375.3 938.5,373.6 941.2,371.9 943.9,370.2 946.6,368.6 949.4,367.0 952.1,365.4 954.9,363.8 957.8,362.3 960.6,360.8 963.5,359.3 966.5,357.8 969.4,356.3 972.4,354.9 974.7,353.8 977.0,352.8 979.3,351.7 981.7,350.7 984.0,349.7 986.4,348.7 988.9,347.7 991.4,346.7 993.9,345.7 996.6,344.8 999.3,343.9 1001.2,343.3M1101.6,369.5 1098.7,367.9 1095.7,366.4 1092.7,364.9 1090.5,363.8 1088.2,362.7 1086.0,361.6 1083.7,360.6 1081.4,359.5 1079.0,358.5 1076.7,357.5 1074.4,356.5 1072.0,355.5 1069.6,354.6 1067.2,353.6 1064.8,352.7 1062.4,351.8 1060.0,350.9 1057.5,350.0 1055.0,349.2 1052.6,348.3 1050.0,347.5 1047.5,346.7 1044.9,345.9 1042.3,345.2 1039.7,344.4 1037.0,343.7 1034.2,343.0 1031.3,342.4 1028.3,341.8M928.2,369.5 931.1,367.9 934.1,366.4 937.1,364.9 939.3,363.8 941.6,362.7 943.8,361.6 946.1,360.6 948.4,359.5 950.8,358.5 953.1,357.5 955.4,356.5 957.8,355.5 960.2,354.6 962.6,353.6 965.0,352.7 967.4,351.8 969.8,350.9 972.3,350.0 974.8,349.2 977.2,348.3 979.8,347.5 982.3,346.7 984.9,345.9 987.5,345.2 990.1,344.4 992.8,343.7 995.6,343.0 998.5,342.4 1001.5,341.8M1106.4,361.9 1104.0,360.9 1101.6,359.9 1099.2,358.9 1096.8,357.9 1094.4,356.9 1091.9,356.0 1089.4,355.1 1087.0,354.2 1084.5,353.3 1082.0,352.5 1079.5,351.6 1077.0,350.8 1074.5,350.0 1071.9,349.2 1069.4,348.5 1066.8,347.7 1064.3,347.0 1061.7,346.4 1059.1,345.7 1056.5,345.1 1053.9,344.5 1051.2,343.9 1048.6,343.4 1045.9,342.9 1043.2,342.4 1040.4,342.0 1037.6,341.6 1034.7,341.2 1031.8,340.8 1028.7,340.5M923.4,361.9 925.8,360.9 928.2,359.9 930.6,358.9 933.0,357.9 935.4,356.9 937.9,356.0 940.4,355.1 942.8,354.2 945.3,353.3 947.8,352.5 950.3,351.6 952.8,350.8 955.3,350.0 957.9,349.2 960.4,348.5 963.0,347.7 965.5,347.0 968.1,346.4 970.7,345.7 973.3,345.1 975.9,344.5 978.6,343.9 981.2,343.4 983.9,342.9 986.6,342.4 989.4,342.0 992.2,341.6 995.1,341.2 998.0,340.8 1001.1,340.5M1101.8,350.6 1099.2,349.8 1096.6,349.0 1094.0,348.3 1091.4,347.5 1088.8,346.8 1086.2,346.1 1083.6,345.5 1080.9,344.9 1078.3,344.3 1075.7,343.7 1073.0,343.2 1070.4,342.7 1067.7,342.2 1065.1,341.8 1062.4,341.4 1059.7,341.0 1057.0,340.7 1054.3,340.4 1051.6,340.1 1048.9,339.9 1046.2,339.7 1043.4,339.5 1040.6,339.4 1037.7,339.3 1034.8,339.2 1031.8,339.2 1028.7,339.2 1027.7,339.2M928.0,350.6 930.6,349.8 933.2,349.0 935.8,348.3 938.4,347.5 941.0,346.8 943.6,346.1 946.2,345.5 948.9,344.9 951.5,344.3 954.1,343.7 956.8,343.2 959.4,342.7 962.1,342.2 964.7,341.8 967.4,341.4 970.1,341.0 972.8,340.7 975.5,340.4 978.2,340.1 980.9,339.9 983.6,339.7 986.4,339.5 989.2,339.4 992.1,339.3 995.0,339.2 998.0,339.2 1001.1,339.2 1002.1,339.2M1093.5,339.2 1090.8,338.8 1088.1,338.3 1085.4,338.0 1082.7,337.6 1080.0,337.3 1077.3,337.0 1074.6,336.8 1071.9,336.6 1069.2,336.4 1066.5,336.3 1063.8,336.2 1061.1,336.1 1058.4,336.1 1055.7,336.1 1053.0,336.2 1050.3,336.2 1047.6,336.4 1044.8,336.5 1042.1,336.7 1039.3,336.9 1036.4,337.1 1033.5,337.4 1030.5,337.7 1027.4,338.1M936.3,339.2 939.0,338.8 941.7,338.3 944.4,338.0 947.1,337.6 949.8,337.3 952.5,337.0 955.2,336.8 957.9,336.6 960.6,336.4 963.3,336.3 966.0,336.2 968.7,336.1 971.4,336.1 974.1,336.1 976.8,336.2 979.5,336.2 982.2,336.4 985.0,336.5 987.7,336.7 990.5,336.9 993.4,337.1 996.3,337.4 999.3,337.7 1002.4,338.1M1094.7,330.3 1091.9,330.2 1089.2,330.1 1086.5,330.0 1083.8,330.0 1081.1,330.0 1078.4,330.0 1075.7,330.1 1073.0,330.2 1070.4,330.3 1067.7,330.5 1065.0,330.7 1062.4,330.9 1059.7,331.2 1057.1,331.5 1054.4,331.8 1051.8,332.2 1049.1,332.6 1046.5,333.0 1043.8,333.5 1041.1,334.0 1038.4,334.5 1035.6,335.0 1032.8,335.6 1029.9,336.3 1026.9,336.9M935.1,330.3 937.9,330.2 940.6,330.1 943.3,330.0 946.0,330.0 948.7,330.0 951.4,330.0 954.1,330.1 956.8,330.2 959.4,330.3 962.1,330.5 964.8,330.7 967.4,330.9 970.1,331.2 972.7,331.5 975.4,331.8 978.0,332.2 980.7,332.6 983.3,333.0 986.0,333.5 988.7,334.0 991.4,334.5 994.2,335.0 997.0,335.6 999.9,336.3 1002.9,336.9M1094.6,321.4 1091.9,321.5 1089.2,321.7 1086.6,321.9 1083.9,322.2 1081.3,322.5 1078.7,322.8 1076.0,323.1 1073.4,323.5 1070.9,323.9 1068.3,324.3 1065.7,324.8 1063.1,325.3 1060.6,325.8 1058.1,326.4 1055.5,326.9 1053.0,327.6 1050.5,328.2 1047.9,328.9 1045.4,329.6 1042.9,330.4 1040.4,331.1 1037.8,331.9 1035.2,332.8 1032.5,333.7 1029.8,334.6 1027.0,335.5M935.2,321.4 937.9,321.5 940.6,321.7 943.2,321.9 945.9,322.2 948.5,322.5 951.1,322.8 953.8,323.1 956.4,323.5 958.9,323.9 961.5,324.3 964.1,324.8 966.7,325.3 969.2,325.8 971.7,326.4 974.3,326.9 976.8,327.6 979.3,328.2 981.9,328.9 984.4,329.6 986.9,330.4 989.4,331.1 992.0,331.9 994.6,332.8 997.3,333.7 1000.0,334.6 1002.8,335.5M1086.0,313.4 1083.5,313.9 1081.0,314.5 1078.5,315.0 1076.0,315.6 1073.5,316.2 1071.1,316.9 1068.7,317.5 1066.3,318.2 1063.9,319.0 1061.5,319.7 1058.3,320.7 1055.2,321.8 1052.0,323.0 1048.9,324.2 1045.8,325.4 1043.5,326.4 1041.2,327.4 1038.9,328.4 1036.5,329.5 1034.1,330.6 1031.7,331.7 1029.2,332.9 1026.7,334.1 1025.8,334.5M943.8,313.4 946.3,313.9 948.8,314.5 951.3,315.0 953.8,315.6 956.3,316.2 958.7,316.9 961.1,317.5 963.5,318.2 965.9,319.0 968.3,319.7 971.5,320.7 974.6,321.8 977.8,323.0 980.9,324.2 984.0,325.4 986.3,326.4 988.6,327.4 990.9,328.4 993.3,329.5 995.7,330.6 998.1,331.7 1000.6,332.9 1003.1,334.1 1004.0,334.5M1072.6,308.0 1069.6,309.1 1066.7,310.3 1063.8,311.6 1060.9,312.9 1058.0,314.2 1055.2,315.6 1052.4,317.0 1049.6,318.4 1046.9,319.9 1044.1,321.4 1041.4,323.0 1038.7,324.6 1035.9,326.2 1033.1,328.0 1031.0,329.3 1028.8,330.7 1026.6,332.1 1025.1,333.0M957.2,308.0 960.2,309.1 963.1,310.3 966.0,311.6 968.9,312.9 971.8,314.2 974.6,315.6 977.4,317.0 980.2,318.4 982.9,319.9 985.7,321.4 988.4,323.0 991.1,324.6 993.9,326.2 996.7,328.0 998.8,329.3 1001.0,330.7 1003.2,332.1 1004.7,333.0M1058.2,305.3 1055.7,306.9 1053.3,308.5 1050.9,310.1 1048.5,311.8 1046.2,313.5 1043.9,315.3 1041.6,317.0 1039.3,318.8 1037.0,320.7 1034.6,322.5 1032.3,324.5 1029.9,326.4 1027.5,328.5 1025.1,330.6 1023.2,332.2M971.6,305.3 974.1,306.9 976.5,308.5 978.9,310.1 981.3,311.8 983.6,313.5 985.9,315.3 988.2,317.0 990.5,318.8 992.8,320.7 995.2,322.5 997.5,324.5 999.9,326.4 1002.3,328.5 1004.7,330.6 1006.6,332.2M1044.4,305.0 1042.6,306.9 1040.7,308.9 1038.9,310.8 1037.1,312.8 1035.3,314.8 1033.5,316.8 1031.7,318.9 1029.9,321.0 1028.1,323.1 1026.2,325.3 1024.4,327.5 1022.5,329.8 1021.6,331.0M985.4,305.0 987.2,306.9 989.1,308.9 990.9,310.8 992.7,312.8 994.5,314.8 996.3,316.8 998.1,318.9 999.9,321.0 1001.7,323.1 1003.6,325.3 1005.4,327.5 1007.3,329.8 1008.2,331.0M1031.1,307.9 1029.6,310.6 1028.1,313.3 1026.5,316.0 1025.3,318.2 1024.1,320.4 1022.9,322.7 1021.7,325.0 1020.5,327.4 1019.3,329.9M998.7,307.9 1000.2,310.6 1001.7,313.3 1003.3,316.0 1004.5,318.2 1005.7,320.4 1006.9,322.7 1008.1,325.0 1009.3,327.4 1010.5,329.9M1019.4,313.1 1018.9,315.9 1018.3,318.8 1017.8,321.7 1017.2,324.7 1016.7,327.7 1016.5,329.0M1010.4,313.1 1010.9,315.9 1011.5,318.8 1012.0,321.7 1012.6,324.7 1013.1,327.7 1013.3,329.0" stroke="#dcd0cc" stroke-width="0.85" stroke-opacity="0.45" fill="none"/><path d="M1026.1,443.2 1025.9,440.5 1025.8,437.7 1025.6,434.9 1025.4,432.1 1025.2,429.3 1025.0,426.5 1024.8,423.7 1024.6,420.9 1024.3,418.1 1024.1,415.3 1023.9,412.6 1023.6,409.8 1023.4,407.0 1023.1,404.2 1022.8,401.4 1022.7,400.3M1022.7,400.3 1022.4,397.5 1022.1,394.7 1021.8,391.9 1021.5,389.1 1021.2,386.4 1020.9,383.6 1020.5,380.8 1020.2,378.0 1019.8,375.2 1019.5,372.4M1003.7,443.2 1003.9,440.5 1004.0,437.7 1004.2,434.9 1004.4,432.1 1004.6,429.3 1004.8,426.5 1005.0,423.7 1005.2,420.9 1005.5,418.1 1005.7,415.3 1005.9,412.6 1006.2,409.8 1006.4,407.0 1006.7,404.2 1007.0,401.4 1007.1,400.3M1007.1,400.3 1007.4,397.5 1007.7,394.7 1008.0,391.9 1008.3,389.1 1008.6,386.4 1008.9,383.6 1009.3,380.8 1009.6,378.0 1010.0,375.2 1010.3,372.4M1049.5,476.5 1049.2,473.7 1048.9,470.9 1048.6,468.1 1048.3,465.3 1048.0,462.5 1047.6,459.7 1047.3,456.9 1046.9,454.1 1046.5,451.3 1046.1,448.5 1045.6,445.7 1045.2,442.9 1044.8,440.1 1044.3,437.3 1043.8,434.5 1043.3,431.7 1042.8,428.9 1042.3,426.2 1041.7,423.4 1041.2,420.6 1040.6,417.8M1040.6,417.8 1040.0,415.0 1039.4,412.2 1038.7,409.5 1038.1,406.7 1037.4,403.9 1036.7,401.1 1036.0,398.4 1035.3,395.6 1034.5,392.8 1033.8,390.1 1033.0,387.3 1032.1,384.5 1031.3,381.8 1030.4,379.0 1030.2,378.5M980.3,476.5 980.6,473.7 980.9,470.9 981.2,468.1 981.5,465.3 981.8,462.5 982.2,459.7 982.5,456.9 982.9,454.1 983.3,451.3 983.7,448.5 984.2,445.7 984.6,442.9 985.0,440.1 985.5,437.3 986.0,434.5 986.5,431.7 987.0,428.9 987.5,426.2 988.1,423.4 988.6,420.6 989.2,417.8M989.2,417.8 989.8,415.0 990.4,412.2 991.1,409.5 991.7,406.7 992.4,403.9 993.1,401.1 993.8,398.4 994.5,395.6 995.3,392.8 996.0,390.1 996.8,387.3 997.7,384.5 998.5,381.8 999.4,379.0 999.6,378.5M1071.1,479.9 1070.7,477.1 1070.2,474.3 1069.6,471.4 1069.1,468.6 1068.5,465.8 1068.0,463.0 1067.4,460.2 1066.7,457.3 1066.1,454.5 1065.4,451.7 1064.8,448.9 1064.1,446.1 1063.3,443.3 1062.6,440.5 1061.8,437.7 1061.0,434.9 1060.2,432.1 1059.4,429.3 1058.5,426.6 1057.7,423.8 1057.3,422.7M1057.3,422.7 1056.4,419.9 1055.5,417.1 1054.5,414.4 1053.5,411.6 1052.5,408.8 1051.5,406.1 1050.4,403.3 1049.3,400.6 1048.2,397.8 1047.1,395.1 1045.9,392.4 1044.7,389.7 1043.5,386.9 1042.2,384.2 1041.7,383.1M958.7,479.9 959.1,477.1 959.6,474.3 960.2,471.4 960.7,468.6 961.3,465.8 961.8,463.0 962.4,460.2 963.1,457.3 963.7,454.5 964.4,451.7 965.0,448.9 965.7,446.1 966.5,443.3 967.2,440.5 968.0,437.7 968.8,434.9 969.6,432.1 970.4,429.3 971.3,426.6 972.1,423.8 972.5,422.7M972.5,422.7 973.4,419.9 974.3,417.1 975.3,414.4 976.3,411.6 977.3,408.8 978.3,406.1 979.4,403.3 980.5,400.6 981.6,397.8 982.7,395.1 983.9,392.4 985.1,389.7 986.3,386.9 987.6,384.2 988.1,383.1M1092.7,480.3 1092.0,477.5 1091.2,474.6 1090.5,471.7 1089.7,468.9 1089.0,466.0 1088.1,463.2 1087.3,460.3 1086.4,457.5 1085.5,454.6 1084.6,451.8 1083.6,449.0 1082.7,446.2 1081.6,443.3 1080.6,440.5 1079.5,437.7 1078.5,434.9 1077.3,432.1 1076.2,429.3 1075.0,426.6 1073.8,423.8 1073.5,423.2M1073.5,423.2 1072.3,420.5 1071.0,417.7 1069.7,415.0 1068.4,412.2 1067.0,409.5 1065.6,406.7 1064.2,404.0 1062.7,401.3 1061.3,398.6 1059.7,395.9 1058.2,393.3 1056.6,390.6 1054.9,387.9 1053.6,385.8 1052.6,384.2M937.1,480.3 937.8,477.5 938.6,474.6 939.3,471.7 940.1,468.9 940.8,466.0 941.7,463.2 942.5,460.3 943.4,457.5 944.3,454.6 945.2,451.8 946.2,449.0 947.1,446.2 948.2,443.3 949.2,440.5 950.3,437.7 951.3,434.9 952.5,432.1 953.6,429.3 954.8,426.6 956.0,423.8 956.3,423.2M956.3,423.2 957.5,420.5 958.8,417.7 960.1,415.0 961.4,412.2 962.8,409.5 964.2,406.7 965.6,404.0 967.1,401.3 968.5,398.6 970.1,395.9 971.6,393.3 973.2,390.6 974.9,387.9 976.2,385.8 977.2,384.2M1114.3,479.9 1113.4,477.0 1112.5,474.1 1111.5,471.2 1110.5,468.2 1109.5,465.3 1108.4,462.4 1107.3,459.6 1106.2,456.7 1105.1,453.8 1103.9,450.9 1102.6,448.1 1101.4,445.2 1100.1,442.4 1099.0,440.1 1097.9,437.9 1096.8,435.6 1095.7,433.4 1094.6,431.1 1093.4,428.9 1092.2,426.7 1091.0,424.4 1090.1,422.8M1090.1,422.8 1088.8,420.6 1087.5,418.4 1086.2,416.2 1084.9,414.0 1083.5,411.8 1082.2,409.6 1080.8,407.5 1079.4,405.3 1077.9,403.2 1076.5,401.1 1075.0,398.9 1073.5,396.8 1071.9,394.7 1070.3,392.6 1068.8,390.5 1067.1,388.5 1065.5,386.4 1063.8,384.4 1063.4,383.8M915.5,479.9 916.4,477.0 917.3,474.1 918.3,471.2 919.3,468.2 920.3,465.3 921.4,462.4 922.5,459.6 923.6,456.7 924.7,453.8 925.9,450.9 927.2,448.1 928.4,445.2 929.7,442.4 930.8,440.1 931.9,437.9 933.0,435.6 934.1,433.4 935.2,431.1 936.4,428.9 937.6,426.7 938.8,424.4 939.7,422.8M939.7,422.8 941.0,420.6 942.3,418.4 943.6,416.2 944.9,414.0 946.3,411.8 947.6,409.6 949.0,407.5 950.4,405.3 951.9,403.2 953.3,401.1 954.8,398.9 956.3,396.8 957.9,394.7 959.5,392.6 961.0,390.5 962.7,388.5 964.3,386.4 966.0,384.4 966.4,383.8M1136.0,478.7 1135.2,476.3 1134.2,473.9 1133.3,471.5 1132.3,469.1 1131.4,466.7 1130.4,464.3 1129.3,461.9 1128.3,459.6 1127.2,457.2 1126.1,454.9 1124.9,452.5 1123.8,450.2 1122.6,447.9 1121.4,445.6 1120.1,443.3 1118.9,441.0 1117.6,438.7 1116.3,436.4 1114.9,434.1 1113.5,431.9 1112.2,429.6 1110.7,427.4 1109.3,425.1 1107.8,422.9 1106.7,421.2M1106.7,421.2 1105.2,419.0 1103.7,416.8 1102.1,414.7 1100.5,412.5 1098.9,410.3 1097.2,408.2 1095.6,406.1 1093.9,403.9 1092.1,401.8 1090.4,399.7 1088.6,397.6 1086.8,395.6 1084.9,393.5 1083.1,391.5 1081.2,389.5 1079.3,387.5 1077.3,385.5 1075.3,383.5 1074.3,382.5M893.8,478.7 894.6,476.3 895.6,473.9 896.5,471.5 897.5,469.1 898.4,466.7 899.4,464.3 900.5,461.9 901.5,459.6 902.6,457.2 903.7,454.9 904.9,452.5 906.0,450.2 907.2,447.9 908.4,445.6 909.7,443.3 910.9,441.0 912.2,438.7 913.5,436.4 914.9,434.1 916.3,431.9 917.6,429.6 919.1,427.4 920.5,425.1 922.0,422.9 923.1,421.2M923.1,421.2 924.6,419.0 926.1,416.8 927.7,414.7 929.3,412.5 930.9,410.3 932.6,408.2 934.2,406.1 935.9,403.9 937.7,401.8 939.4,399.7 941.2,397.6 943.0,395.6 944.9,393.5 946.7,391.5 948.6,389.5 950.5,387.5 952.5,385.5 954.5,383.5 955.5,382.5M1157.8,476.5 1156.7,474.0 1155.6,471.5 1154.5,469.0 1153.3,466.6 1152.2,464.1 1150.9,461.7 1149.7,459.2 1148.4,456.8 1147.1,454.4 1145.8,452.0 1144.5,449.6 1143.1,447.2 1141.7,444.9 1140.2,442.5 1138.8,440.2 1137.3,437.8 1135.7,435.5 1134.2,433.2 1132.6,430.9 1131.0,428.6 1129.3,426.4 1127.7,424.1 1126.0,421.9 1124.2,419.6 1122.9,418.0M1122.9,418.0 1121.1,415.8 1119.3,413.6 1117.5,411.4 1115.6,409.3 1113.7,407.1 1111.8,405.0 1109.8,402.9 1107.8,400.8 1105.8,398.8 1103.8,396.7 1101.7,394.7 1099.6,392.7 1097.5,390.7 1095.3,388.7 1093.1,386.8 1090.9,384.9 1088.7,383.0 1086.4,381.1 1084.7,379.7M872.0,476.5 873.1,474.0 874.2,471.5 875.3,469.0 876.5,466.6 877.6,464.1 878.9,461.7 880.1,459.2 881.4,456.8 882.7,454.4 884.0,452.0 885.3,449.6 886.7,447.2 888.1,444.9 889.6,442.5 891.0,440.2 892.5,437.8 894.1,435.5 895.6,433.2 897.2,430.9 898.8,428.6 900.5,426.4 902.1,424.1 903.8,421.9 905.6,419.6 906.9,418.0M906.9,418.0 908.7,415.8 910.5,413.6 912.3,411.4 914.2,409.3 916.1,407.1 918.0,405.0 920.0,402.9 922.0,400.8 924.0,398.8 926.0,396.7 928.1,394.7 930.2,392.7 932.3,390.7 934.5,388.7 936.7,386.8 938.9,384.9 941.1,383.0 943.4,381.1 945.1,379.7M1179.1,472.6 1177.8,470.0 1176.5,467.4 1175.2,464.9 1173.8,462.3 1172.4,459.8 1171.0,457.2 1169.5,454.7 1168.0,452.2 1166.5,449.8 1164.9,447.3 1163.3,444.8 1161.7,442.4 1160.1,440.0 1158.4,437.6 1156.7,435.2 1154.9,432.8 1153.1,430.5 1151.3,428.1 1149.5,425.8 1147.6,423.5 1145.7,421.3 1143.7,419.0 1141.8,416.8 1139.7,414.5 1138.7,413.4M1138.7,413.4 1136.7,411.2 1134.6,409.1 1132.5,406.9 1130.3,404.8 1128.2,402.7 1126.0,400.6 1123.7,398.5 1121.5,396.5 1119.2,394.5 1116.8,392.5 1114.5,390.5 1112.1,388.6 1109.7,386.7 1107.2,384.8 1104.7,382.9 1102.2,381.1 1099.7,379.3 1097.1,377.5 1094.5,375.8 1093.9,375.3M850.7,472.6 852.0,470.0 853.3,467.4 854.6,464.9 856.0,462.3 857.4,459.8 858.8,457.2 860.3,454.7 861.8,452.2 863.3,449.8 864.9,447.3 866.5,444.8 868.1,442.4 869.7,440.0 871.4,437.6 873.1,435.2 874.9,432.8 876.7,430.5 878.5,428.1 880.3,425.8 882.2,423.5 884.1,421.3 886.1,419.0 888.0,416.8 890.1,414.5 891.1,413.4M891.1,413.4 893.1,411.2 895.2,409.1 897.3,406.9 899.5,404.8 901.6,402.7 903.8,400.6 906.1,398.5 908.3,396.5 910.6,394.5 913.0,392.5 915.3,390.5 917.7,388.6 920.1,386.7 922.6,384.8 925.1,382.9 927.6,381.1 930.1,379.3 932.7,377.5 935.3,375.8 935.9,375.3M1200.0,467.4 1198.5,464.7 1197.0,462.0 1195.4,459.3 1193.8,456.7 1192.2,454.1 1190.5,451.4 1188.8,448.8 1187.1,446.3 1185.3,443.7 1183.5,441.2 1181.7,438.6 1179.8,436.1 1177.9,433.7 1175.9,431.2 1173.9,428.8 1171.9,426.4 1169.8,424.0 1167.8,421.6 1165.6,419.3 1163.5,417.0 1161.3,414.7 1159.1,412.4 1156.8,410.2 1154.5,408.0 1153.4,406.9M1153.4,406.9 1151.0,404.7 1148.7,402.6 1146.3,400.5 1143.8,398.4 1141.4,396.3 1138.9,394.3 1136.3,392.3 1133.8,390.3 1131.2,388.4 1128.6,386.5 1125.9,384.6 1123.3,382.7 1120.6,380.9 1117.8,379.1 1115.1,377.4 1112.3,375.7 1109.5,374.0 1106.6,372.3 1103.7,370.7 1101.6,369.5M829.8,467.4 831.3,464.7 832.8,462.0 834.4,459.3 836.0,456.7 837.6,454.1 839.3,451.4 841.0,448.8 842.7,446.3 844.5,443.7 846.3,441.2 848.1,438.6 850.0,436.1 851.9,433.7 853.9,431.2 855.9,428.8 857.9,426.4 860.0,424.0 862.0,421.6 864.2,419.3 866.3,417.0 868.5,414.7 870.7,412.4 873.0,410.2 875.3,408.0 876.4,406.9M876.4,406.9 878.8,404.7 881.1,402.6 883.5,400.5 886.0,398.4 888.4,396.3 890.9,394.3 893.5,392.3 896.0,390.3 898.6,388.4 901.2,386.5 903.9,384.6 906.5,382.7 909.2,380.9 912.0,379.1 914.7,377.4 917.5,375.7 920.3,374.0 923.2,372.3 926.1,370.7 928.2,369.5M1219.9,460.0 1218.2,457.2 1216.4,454.3 1215.0,452.2 1213.6,450.2 1212.2,448.1 1210.8,446.0 1209.3,444.0 1207.9,442.0 1206.4,440.0 1204.9,438.0 1203.3,436.0 1201.8,434.0 1200.2,432.1 1198.6,430.1 1196.9,428.2 1195.3,426.3 1193.6,424.4 1191.9,422.5 1190.2,420.7 1188.5,418.8 1186.8,417.0 1185.0,415.2 1183.2,413.4 1181.4,411.7 1179.6,409.9 1177.7,408.2 1175.9,406.5 1174.0,404.8 1172.1,403.1 1170.1,401.5 1168.2,399.8 1166.2,398.2 1165.6,397.7M1165.6,397.7 1163.6,396.1 1161.6,394.5 1159.6,392.9 1157.6,391.4 1155.5,389.9 1153.4,388.4 1151.3,386.9 1149.2,385.5 1147.1,384.1 1145.0,382.6 1142.8,381.3 1140.7,379.9 1138.5,378.5 1136.3,377.2 1134.1,375.9 1131.8,374.6 1129.6,373.4 1127.3,372.1 1125.1,370.9 1122.8,369.7 1120.5,368.5 1118.2,367.4 1115.9,366.3 1113.5,365.1 1111.2,364.1 1108.8,363.0 1106.4,361.9M809.9,460.0 811.6,457.2 813.4,454.3 814.8,452.2 816.2,450.2 817.6,448.1 819.0,446.0 820.5,444.0 821.9,442.0 823.4,440.0 824.9,438.0 826.5,436.0 828.0,434.0 829.6,432.1 831.2,430.1 832.9,428.2 834.5,426.3 836.2,424.4 837.9,422.5 839.6,420.7 841.3,418.8 843.0,417.0 844.8,415.2 846.6,413.4 848.4,411.7 850.2,409.9 852.1,408.2 853.9,406.5 855.8,404.8 857.7,403.1 859.7,401.5 861.6,399.8 863.6,398.2 864.2,397.7M864.2,397.7 866.2,396.1 868.2,394.5 870.2,392.9 872.2,391.4 874.3,389.9 876.4,388.4 878.5,386.9 880.6,385.5 882.7,384.1 884.8,382.6 887.0,381.3 889.1,379.9 891.3,378.5 893.5,377.2 895.7,375.9 898.0,374.6 900.2,373.4 902.5,372.1 904.7,370.9 907.0,369.7 909.3,368.5 911.6,367.4 913.9,366.3 916.3,365.1 918.6,364.1 921.0,363.0 923.4,361.9M1238.4,449.9 1236.8,447.7 1235.3,445.4 1233.7,443.2 1232.1,441.0 1230.5,438.9 1228.8,436.7 1227.1,434.6 1225.4,432.5 1223.7,430.4 1222.0,428.3 1220.2,426.3 1218.4,424.2 1216.6,422.2 1214.7,420.2 1212.9,418.3 1211.0,416.3 1209.1,414.4 1207.2,412.5 1205.2,410.6 1203.3,408.7 1201.3,406.9 1199.3,405.1 1197.3,403.3 1195.2,401.5 1193.2,399.8 1191.1,398.0 1189.0,396.3 1186.9,394.7 1184.7,393.0 1182.6,391.4 1180.4,389.8 1178.2,388.2 1176.0,386.7 1174.5,385.6M1174.5,385.6 1172.3,384.1 1170.0,382.6 1167.8,381.2 1165.5,379.7 1163.2,378.3 1160.9,376.9 1158.6,375.6 1156.2,374.2 1153.9,372.9 1151.5,371.6 1149.1,370.3 1146.7,369.1 1144.3,367.9 1141.9,366.7 1139.5,365.5 1137.0,364.4 1134.6,363.3 1132.1,362.2 1129.6,361.1 1127.2,360.0 1124.7,359.0 1122.2,358.0 1119.6,357.0 1117.1,356.0 1114.6,355.1 1112.0,354.1 1109.5,353.2 1106.9,352.3 1104.4,351.5 1101.8,350.6M791.4,449.9 793.0,447.7 794.5,445.4 796.1,443.2 797.7,441.0 799.3,438.9 801.0,436.7 802.7,434.6 804.4,432.5 806.1,430.4 807.8,428.3 809.6,426.3 811.4,424.2 813.2,422.2 815.1,420.2 816.9,418.3 818.8,416.3 820.7,414.4 822.6,412.5 824.6,410.6 826.5,408.7 828.5,406.9 830.5,405.1 832.5,403.3 834.6,401.5 836.6,399.8 838.7,398.0 840.8,396.3 842.9,394.7 845.1,393.0 847.2,391.4 849.4,389.8 851.6,388.2 853.8,386.7 855.3,385.6M855.3,385.6 857.5,384.1 859.8,382.6 862.0,381.2 864.3,379.7 866.6,378.3 868.9,376.9 871.2,375.6 873.6,374.2 875.9,372.9 878.3,371.6 880.7,370.3 883.1,369.1 885.5,367.9 887.9,366.7 890.3,365.5 892.8,364.4 895.2,363.3 897.7,362.2 900.2,361.1 902.6,360.0 905.1,359.0 907.6,358.0 910.2,357.0 912.7,356.0 915.2,355.1 917.8,354.1 920.3,353.2 922.9,352.3 925.4,351.5 928.0,350.6M1252.8,434.2 1251.0,431.8 1249.1,429.5 1247.3,427.2 1245.3,425.0 1243.4,422.8 1241.4,420.6 1239.5,418.4 1237.5,416.2 1235.4,414.1 1233.4,412.0 1231.3,409.9 1229.2,407.9 1227.1,405.9 1224.9,403.9 1222.8,402.0 1220.6,400.0 1218.4,398.1 1216.2,396.3 1213.9,394.4 1211.7,392.6 1209.4,390.8 1207.1,389.1 1204.8,387.4 1202.4,385.7 1200.1,384.0 1197.7,382.4 1195.3,380.8 1192.9,379.2 1190.5,377.6 1188.1,376.1 1185.7,374.6 1183.2,373.2 1180.8,371.8 1178.3,370.4 1177.4,369.9M1177.4,369.9 1174.9,368.5 1172.4,367.2 1169.9,365.9 1167.4,364.6 1164.8,363.4 1162.3,362.1 1159.7,360.9 1157.2,359.7 1154.6,358.6 1152.0,357.5 1149.4,356.4 1146.8,355.3 1144.2,354.2 1141.5,353.2 1138.9,352.2 1136.3,351.2 1133.6,350.2 1131.0,349.3 1128.3,348.3 1125.7,347.4 1123.0,346.6 1120.3,345.7 1117.7,344.9 1115.0,344.2 1112.3,343.4 1109.6,342.7 1106.9,342.0 1104.3,341.4 1101.6,340.8 1098.9,340.2 1096.2,339.7 1093.5,339.2M777.0,434.2 778.8,431.8 780.7,429.5 782.5,427.2 784.5,425.0 786.4,422.8 788.4,420.6 790.3,418.4 792.3,416.2 794.4,414.1 796.4,412.0 798.5,409.9 800.6,407.9 802.7,405.9 804.9,403.9 807.0,402.0 809.2,400.0 811.4,398.1 813.6,396.3 815.9,394.4 818.1,392.6 820.4,390.8 822.7,389.1 825.0,387.4 827.4,385.7 829.7,384.0 832.1,382.4 834.5,380.8 836.9,379.2 839.3,377.6 841.7,376.1 844.1,374.6 846.6,373.2 849.0,371.8 851.5,370.4 852.4,369.9M852.4,369.9 854.9,368.5 857.4,367.2 859.9,365.9 862.4,364.6 865.0,363.4 867.5,362.1 870.1,360.9 872.6,359.7 875.2,358.6 877.8,357.5 880.4,356.4 883.0,355.3 885.6,354.2 888.3,353.2 890.9,352.2 893.5,351.2 896.2,350.2 898.8,349.3 901.5,348.3 904.1,347.4 906.8,346.6 909.5,345.7 912.1,344.9 914.8,344.2 917.5,343.4 920.2,342.7 922.9,342.0 925.5,341.4 928.2,340.8 930.9,340.2 933.6,339.7 936.3,339.2M1262.0,412.6 1259.8,410.2 1257.5,407.9 1255.3,405.6 1253.0,403.4 1250.6,401.2 1248.3,399.0 1246.0,396.8 1243.6,394.7 1241.2,392.7 1238.8,390.6 1236.3,388.6 1233.9,386.7 1231.4,384.7 1228.9,382.9 1226.4,381.0 1223.9,379.2 1221.3,377.4 1218.8,375.7 1216.2,374.0 1213.6,372.3 1211.0,370.7 1208.4,369.1 1205.8,367.5 1203.2,366.0 1200.5,364.5 1197.9,363.0 1195.2,361.5 1192.6,360.1 1189.9,358.7 1187.2,357.4 1184.5,356.0 1181.8,354.7 1179.1,353.4 1176.3,352.2 1173.6,350.9 1170.9,349.7 1168.1,348.5 1165.4,347.3 1162.6,346.2 1159.9,345.1 1157.1,344.0 1154.4,342.9 1151.6,341.9 1148.8,340.9 1146.1,340.0M1146.1,340.0 1143.3,339.1 1140.5,338.3 1137.8,337.5 1135.0,336.7 1132.2,336.0 1129.5,335.3 1126.7,334.7 1123.9,334.1 1121.2,333.5 1118.4,333.0 1115.7,332.6 1112.9,332.2 1110.2,331.8 1107.4,331.4 1104.7,331.1 1101.9,330.8 1099.2,330.6 1096.5,330.4 1094.7,330.3M767.8,412.6 770.0,410.2 772.3,407.9 774.5,405.6 776.8,403.4 779.2,401.2 781.5,399.0 783.8,396.8 786.2,394.7 788.6,392.7 791.0,390.6 793.5,388.6 795.9,386.7 798.4,384.7 800.9,382.9 803.4,381.0 805.9,379.2 808.5,377.4 811.0,375.7 813.6,374.0 816.2,372.3 818.8,370.7 821.4,369.1 824.0,367.5 826.6,366.0 829.3,364.5 831.9,363.0 834.6,361.5 837.2,360.1 839.9,358.7 842.6,357.4 845.3,356.0 848.0,354.7 850.7,353.4 853.5,352.2 856.2,350.9 858.9,349.7 861.7,348.5 864.4,347.3 867.2,346.2 869.9,345.1 872.7,344.0 875.4,342.9 878.2,341.9 881.0,340.9 883.7,340.0M883.7,340.0 886.5,339.1 889.3,338.3 892.0,337.5 894.8,336.7 897.6,336.0 900.3,335.3 903.1,334.7 905.9,334.1 908.6,333.5 911.4,333.0 914.1,332.6 916.9,332.2 919.6,331.8 922.4,331.4 925.1,331.1 927.9,330.8 930.6,330.6 933.3,330.4 935.1,330.3M1259.6,381.6 1256.9,379.4 1254.2,377.3 1251.5,375.2 1248.7,373.1 1246.0,371.1 1243.2,369.2 1240.4,367.2 1237.6,365.4 1234.8,363.5 1232.0,361.7 1229.2,359.9 1226.4,358.2 1223.5,356.5 1220.7,354.8 1217.8,353.1 1214.9,351.5 1212.1,349.9 1209.2,348.3 1206.3,346.7 1203.4,345.1 1200.5,343.6 1197.6,342.2 1194.7,340.7 1191.8,339.3 1188.9,338.0 1186.0,336.7 1183.1,335.5 1180.2,334.3 1177.3,333.2 1174.4,332.2 1171.5,331.2 1168.6,330.2 1165.7,329.4 1162.8,328.5 1160.0,327.8 1157.1,327.0 1154.2,326.3 1151.3,325.7M1151.3,325.7 1148.5,325.1 1145.6,324.6 1142.7,324.1 1139.9,323.6 1137.0,323.2 1134.2,322.8 1131.4,322.5 1128.6,322.2 1125.8,321.9 1123.0,321.7 1120.2,321.5 1117.4,321.3 1114.6,321.2 1111.8,321.1 1109.1,321.1 1106.4,321.1 1103.6,321.1 1100.9,321.1 1098.2,321.2 1095.5,321.3 1094.6,321.4M770.2,381.6 772.9,379.4 775.6,377.3 778.3,375.2 781.1,373.1 783.8,371.1 786.6,369.2 789.4,367.2 792.2,365.4 795.0,363.5 797.8,361.7 800.6,359.9 803.4,358.2 806.3,356.5 809.1,354.8 812.0,353.1 814.9,351.5 817.7,349.9 820.6,348.3 823.5,346.7 826.4,345.1 829.3,343.6 832.2,342.2 835.1,340.7 838.0,339.3 840.9,338.0 843.8,336.7 846.7,335.5 849.6,334.3 852.5,333.2 855.4,332.2 858.3,331.2 861.2,330.2 864.1,329.4 867.0,328.5 869.8,327.8 872.7,327.0 875.6,326.3 878.5,325.7M878.5,325.7 881.3,325.1 884.2,324.6 887.1,324.1 889.9,323.6 892.8,323.2 895.6,322.8 898.4,322.5 901.2,322.2 904.0,321.9 906.8,321.7 909.6,321.5 912.4,321.3 915.2,321.2 918.0,321.1 920.7,321.1 923.4,321.1 926.2,321.1 928.9,321.1 931.6,321.2 934.3,321.3 935.2,321.4M1211.3,325.5 1208.2,324.2 1205.1,323.0 1202.0,321.9 1198.9,320.8 1195.8,319.8 1192.8,318.8 1189.7,317.9 1186.6,317.0 1183.6,316.2 1180.5,315.5 1177.5,314.7 1174.5,314.1 1171.5,313.5 1168.5,312.9 1165.5,312.4 1162.5,311.9 1159.5,311.5 1156.6,311.1 1153.7,310.7 1150.7,310.4 1147.8,310.1 1144.9,309.9M1144.9,309.9 1142.0,309.7 1139.2,309.6 1136.3,309.5 1133.5,309.4 1130.7,309.3 1127.9,309.3 1125.1,309.3 1122.3,309.4 1119.5,309.5 1116.8,309.6 1114.1,309.8 1111.3,310.0 1108.7,310.2 1106.0,310.5 1103.3,310.8 1100.7,311.1 1098.1,311.4 1095.4,311.8 1092.9,312.2 1090.3,312.6 1087.7,313.1 1086.0,313.4M818.5,325.5 821.6,324.2 824.7,323.0 827.8,321.9 830.9,320.8 834.0,319.8 837.0,318.8 840.1,317.9 843.2,317.0 846.2,316.2 849.3,315.5 852.3,314.7 855.3,314.1 858.3,313.5 861.3,312.9 864.3,312.4 867.3,311.9 870.3,311.5 873.2,311.1 876.1,310.7 879.1,310.4 882.0,310.1 884.9,309.9M884.9,309.9 887.8,309.7 890.6,309.6 893.5,309.5 896.3,309.4 899.1,309.3 901.9,309.3 904.7,309.3 907.5,309.4 910.3,309.5 913.0,309.6 915.7,309.8 918.5,310.0 921.1,310.2 923.8,310.5 926.5,310.8 929.1,311.1 931.7,311.4 934.4,311.8 936.9,312.2 939.5,312.6 942.1,313.1 943.8,313.4M1191.6,298.1 1188.4,297.5 1185.2,296.9 1182.1,296.4 1178.9,295.9 1175.8,295.5 1172.7,295.1 1169.7,294.8 1166.6,294.5 1163.6,294.3 1160.6,294.1 1157.6,294.0 1154.6,293.9 1151.7,293.8 1148.8,293.8 1145.9,293.8 1143.0,293.9 1140.2,294.0 1137.3,294.1 1134.5,294.3 1131.8,294.5 1129.0,294.7 1126.3,295.0 1123.6,295.3 1120.9,295.6 1120.0,295.8M1120.0,295.8 1117.3,296.1 1114.7,296.5 1112.1,297.0 1109.5,297.5 1107.0,298.0 1104.4,298.5 1101.9,299.0 1099.4,299.6 1096.9,300.2 1094.5,300.9 1092.0,301.5 1089.6,302.2 1086.4,303.2 1083.3,304.2 1080.2,305.2 1077.1,306.3 1074.1,307.4 1072.6,308.0M838.2,298.1 841.4,297.5 844.6,296.9 847.7,296.4 850.9,295.9 854.0,295.5 857.1,295.1 860.1,294.8 863.2,294.5 866.2,294.3 869.2,294.1 872.2,294.0 875.2,293.9 878.1,293.8 881.0,293.8 883.9,293.8 886.8,293.9 889.6,294.0 892.5,294.1 895.3,294.3 898.0,294.5 900.8,294.7 903.5,295.0 906.2,295.3 908.9,295.6 909.8,295.8M909.8,295.8 912.5,296.1 915.1,296.5 917.7,297.0 920.3,297.5 922.8,298.0 925.4,298.5 927.9,299.0 930.4,299.6 932.9,300.2 935.3,300.9 937.8,301.5 940.2,302.2 943.4,303.2 946.5,304.2 949.6,305.2 952.7,306.3 955.7,307.4 957.2,308.0M1135.2,275.5 1132.5,276.0 1129.8,276.5 1127.2,277.0 1124.5,277.5 1122.0,278.1 1119.4,278.7 1116.9,279.3 1114.4,280.0 1112.0,280.7 1109.5,281.4 1107.1,282.1 1104.0,283.1 1100.9,284.2 1097.8,285.3 1094.8,286.5 1091.8,287.7 1091.1,288.0M1091.1,288.0 1088.2,289.2 1085.3,290.5 1082.5,291.8 1079.7,293.1 1076.9,294.5 1074.2,295.9 1071.6,297.3 1068.9,298.8 1066.3,300.2 1063.8,301.8 1061.3,303.3 1058.8,304.9 1058.2,305.3M894.6,275.5 897.3,276.0 900.0,276.5 902.6,277.0 905.3,277.5 907.8,278.1 910.4,278.7 912.9,279.3 915.4,280.0 917.8,280.7 920.3,281.4 922.7,282.1 925.8,283.1 928.9,284.2 932.0,285.3 935.0,286.5 938.0,287.7 938.7,288.0M938.7,288.0 941.6,289.2 944.5,290.5 947.3,291.8 950.1,293.1 952.9,294.5 955.6,295.9 958.2,297.3 960.9,298.8 963.5,300.2 966.0,301.8 968.5,303.3 971.0,304.9 971.6,305.3M1088.8,269.4 1086.2,270.9 1083.7,272.4 1081.2,274.0 1078.8,275.6 1076.5,277.2 1074.1,278.9 1071.8,280.6 1069.6,282.3 1067.4,284.0 1065.2,285.7 1064.7,286.2M1064.7,286.2 1062.6,287.9 1060.5,289.7 1058.4,291.5 1056.4,293.3 1054.4,295.1 1052.5,297.0 1050.5,298.8 1048.6,300.7 1046.7,302.6 1044.9,304.5 1044.4,305.0M941.0,269.4 943.6,270.9 946.1,272.4 948.6,274.0 951.0,275.6 953.3,277.2 955.7,278.9 958.0,280.6 960.2,282.3 962.4,284.0 964.6,285.7 965.1,286.2M965.1,286.2 967.2,287.9 969.3,289.7 971.4,291.5 973.4,293.3 975.4,295.1 977.3,297.0 979.3,298.8 981.2,300.7 983.1,302.6 984.9,304.5 985.4,305.0M1054.3,271.5 1052.8,273.6 1051.0,276.1 1049.2,278.6 1047.4,281.2 1045.7,283.8 1044.0,286.3 1042.7,288.4M1042.7,288.4 1041.1,291.0 1039.5,293.6 1037.9,296.2 1036.3,298.9 1034.8,301.5 1033.2,304.2 1031.7,306.8 1031.1,307.9M975.5,271.5 977.0,273.6 978.8,276.1 980.6,278.6 982.4,281.2 984.1,283.8 985.8,286.3 987.1,288.4M987.1,288.4 988.7,291.0 990.3,293.6 991.9,296.2 993.5,298.9 995.0,301.5 996.6,304.2 998.1,306.8 998.7,307.9M1026.3,282.5 1025.7,285.2 1025.0,288.0 1024.3,290.8 1023.7,293.5 1023.0,296.3 1022.8,297.4M1022.8,297.4 1022.2,300.2 1021.6,303.0 1021.0,305.8 1020.4,308.6 1019.8,311.4 1019.4,313.1M1003.5,282.5 1004.1,285.2 1004.8,288.0 1005.5,290.8 1006.1,293.5 1006.8,296.3 1007.0,297.4M1007.0,297.4 1007.6,300.2 1008.2,303.0 1008.8,305.8 1009.4,308.6 1010.0,311.4 1010.4,313.1" stroke="#dcd0cc" stroke-width="0.85" stroke-opacity="0.55" fill="none"/><path d="M1026.2,749.3 1026.4,746.5 1026.6,743.7 1026.7,740.9 1026.9,738.1 1027.0,735.3 1027.2,732.5 1027.3,729.7 1027.4,726.9 1027.6,724.1 1027.7,721.3 1027.8,718.6 1027.9,715.8 1028.0,713.0 1028.0,710.2 1028.1,707.4 1028.2,704.6 1028.2,701.8 1028.3,699.0 1028.3,696.2 1028.4,693.4 1028.4,690.6 1028.4,687.8 1028.5,685.1 1028.5,682.3 1028.5,679.5 1028.5,676.7 1028.5,673.9 1028.5,671.1 1028.5,668.3 1028.5,665.5 1028.5,662.7 1028.5,659.9 1028.5,657.1 1028.5,654.3 1028.5,651.5 1028.5,648.8 1028.4,646.0 1028.4,643.2 1028.4,640.4 1028.4,637.6 1028.4,634.8 1028.4,632.0 1028.4,629.2 1028.3,626.4 1028.3,623.6 1028.3,620.8 1028.3,618.0 1028.3,615.2 1028.3,612.5 1028.3,609.7 1028.3,606.9 1028.3,604.1 1028.3,601.3 1028.2,598.5 1028.2,595.7 1028.2,592.9 1028.2,590.1 1028.2,587.3 1028.2,584.5 1028.2,581.7 1028.2,578.9 1028.2,576.1 1028.2,573.4 1028.2,570.6 1028.2,567.8 1028.2,565.0 1028.2,562.2 1028.2,559.4 1028.2,556.6 1028.2,553.8 1028.2,551.0 1028.3,548.2 1028.3,545.4 1028.3,542.6 1028.3,539.8 1028.3,537.0 1028.3,534.3 1028.3,531.5 1028.3,528.7 1028.3,525.9 1028.2,523.1 1028.2,520.3 1028.2,517.5 1028.2,514.7 1028.2,511.9 1028.2,509.1 1028.2,506.3 1028.1,503.5 1028.1,500.7 1028.1,498.0 1028.0,495.2 1028.0,492.4 1027.9,489.6 1027.9,486.8 1027.8,484.0 1027.7,481.2 1027.6,478.4 1027.6,475.6 1027.5,472.8 1027.4,470.0 1027.3,467.2 1027.2,464.5 1027.1,461.7 1026.9,458.9 1026.8,456.1 1026.7,453.3 1026.5,450.5 1026.4,447.7 1026.2,444.9 1026.1,443.2M1003.6,749.3 1003.4,746.5 1003.2,743.7 1003.1,740.9 1002.9,738.1 1002.8,735.3 1002.6,732.5 1002.5,729.7 1002.4,726.9 1002.2,724.1 1002.1,721.3 1002.0,718.6 1001.9,715.8 1001.8,713.0 1001.8,710.2 1001.7,707.4 1001.6,704.6 1001.6,701.8 1001.5,699.0 1001.5,696.2 1001.4,693.4 1001.4,690.6 1001.4,687.8 1001.3,685.1 1001.3,682.3 1001.3,679.5 1001.3,676.7 1001.3,673.9 1001.3,671.1 1001.3,668.3 1001.3,665.5 1001.3,662.7 1001.3,659.9 1001.3,657.1 1001.3,654.3 1001.3,651.5 1001.3,648.8 1001.4,646.0 1001.4,643.2 1001.4,640.4 1001.4,637.6 1001.4,634.8 1001.4,632.0 1001.4,629.2 1001.5,626.4 1001.5,623.6 1001.5,620.8 1001.5,618.0 1001.5,615.2 1001.5,612.5 1001.5,609.7 1001.5,606.9 1001.5,604.1 1001.5,601.3 1001.6,598.5 1001.6,595.7 1001.6,592.9 1001.6,590.1 1001.6,587.3 1001.6,584.5 1001.6,581.7 1001.6,578.9 1001.6,576.1 1001.6,573.4 1001.6,570.6 1001.6,567.8 1001.6,565.0 1001.6,562.2 1001.6,559.4 1001.6,556.6 1001.6,553.8 1001.6,551.0 1001.5,548.2 1001.5,545.4 1001.5,542.6 1001.5,539.8 1001.5,537.0 1001.5,534.3 1001.5,531.5 1001.5,528.7 1001.5,525.9 1001.6,523.1 1001.6,520.3 1001.6,517.5 1001.6,514.7 1001.6,511.9 1001.6,509.1 1001.6,506.3 1001.7,503.5 1001.7,500.7 1001.7,498.0 1001.8,495.2 1001.8,492.4 1001.9,489.6 1001.9,486.8 1002.0,484.0 1002.1,481.2 1002.2,478.4 1002.2,475.6 1002.3,472.8 1002.4,470.0 1002.5,467.2 1002.6,464.5 1002.7,461.7 1002.9,458.9 1003.0,456.1 1003.1,453.3 1003.3,450.5 1003.4,447.7 1003.6,444.9 1003.7,443.2M1050.1,711.0 1050.4,708.2 1050.6,705.4 1050.9,702.6 1051.1,699.8 1051.3,697.0 1051.5,694.2 1051.7,691.4 1051.8,688.6 1052.0,685.7 1052.2,682.9 1052.3,680.1 1052.4,677.3 1052.5,674.5 1052.7,671.7 1052.8,668.9 1052.9,666.1 1052.9,663.3 1053.0,660.5 1053.1,657.6 1053.2,654.8 1053.2,652.0 1053.3,649.2 1053.4,646.4 1053.4,643.6 1053.5,640.8 1053.5,637.9 1053.5,635.1 1053.6,632.3 1053.6,629.5 1053.6,626.7 1053.7,623.9 1053.7,621.1 1053.7,618.2 1053.7,615.4 1053.7,612.6 1053.8,609.8 1053.8,607.0 1053.8,604.2 1053.8,601.3 1053.8,598.5 1053.8,595.7 1053.8,592.9 1053.8,590.1 1053.7,587.3 1053.7,584.4 1053.7,581.6 1053.7,578.8 1053.7,576.0 1053.6,573.2 1053.6,570.4 1053.6,567.6 1053.5,564.7 1053.5,561.9 1053.5,559.1 1053.4,556.3 1053.4,553.5 1053.3,550.7 1053.3,547.9 1053.2,545.0 1053.1,542.2 1053.1,539.4 1053.0,536.6 1052.9,533.8 1052.8,531.0 1052.7,528.2 1052.6,525.3 1052.5,522.5 1052.4,519.7 1052.3,516.9 1052.2,514.1 1052.0,511.3 1051.9,508.5 1051.7,505.7 1051.6,502.9 1051.4,500.1 1051.2,497.2 1051.0,494.4 1050.8,491.6 1050.6,488.8 1050.4,486.0 1050.1,483.2 1049.9,480.4 1049.6,477.6 1049.5,476.5M979.7,711.0 979.4,708.2 979.2,705.4 978.9,702.6 978.7,699.8 978.5,697.0 978.3,694.2 978.1,691.4 978.0,688.6 977.8,685.7 977.6,682.9 977.5,680.1 977.4,677.3 977.3,674.5 977.1,671.7 977.0,668.9 976.9,666.1 976.9,663.3 976.8,660.5 976.7,657.6 976.6,654.8 976.6,652.0 976.5,649.2 976.4,646.4 976.4,643.6 976.3,640.8 976.3,637.9 976.3,635.1 976.2,632.3 976.2,629.5 976.2,626.7 976.1,623.9 976.1,621.1 976.1,618.2 976.1,615.4 976.1,612.6 976.0,609.8 976.0,607.0 976.0,604.2 976.0,601.3 976.0,598.5 976.0,595.7 976.0,592.9 976.0,590.1 976.1,587.3 976.1,584.4 976.1,581.6 976.1,578.8 976.1,576.0 976.2,573.2 976.2,570.4 976.2,567.6 976.3,564.7 976.3,561.9 976.3,559.1 976.4,556.3 976.4,553.5 976.5,550.7 976.5,547.9 976.6,545.0 976.7,542.2 976.7,539.4 976.8,536.6 976.9,533.8 977.0,531.0 977.1,528.2 977.2,525.3 977.3,522.5 977.4,519.7 977.5,516.9 977.6,514.1 977.8,511.3 977.9,508.5 978.1,505.7 978.2,502.9 978.4,500.1 978.6,497.2 978.8,494.4 979.0,491.6 979.2,488.8 979.4,486.0 979.7,483.2 979.9,480.4 980.2,477.6 980.3,476.5M1071.8,707.0 1072.3,704.2 1072.7,701.3 1073.1,698.5 1073.5,695.7 1073.9,692.8 1074.2,690.0 1074.6,687.1 1074.9,684.3 1075.2,681.5 1075.5,678.6 1075.7,675.8 1076.0,672.9 1076.2,670.1 1076.5,667.2 1076.7,664.4 1076.9,661.5 1077.1,658.7 1077.3,655.8 1077.4,653.0 1077.6,650.1 1077.8,647.2 1077.9,644.4 1078.0,641.5 1078.2,638.7 1078.3,635.8 1078.4,633.0 1078.5,630.1 1078.6,627.2 1078.7,624.4 1078.7,621.5 1078.8,618.7 1078.9,615.8 1078.9,612.9 1078.9,610.1 1079.0,607.2 1079.0,604.3 1079.0,601.5 1079.0,598.6 1079.0,595.8 1079.0,592.9 1079.0,590.0 1079.0,587.2 1079.0,584.3 1078.9,581.4 1078.9,578.6 1078.8,575.7 1078.8,572.8 1078.7,570.0 1078.6,567.1 1078.6,564.3 1078.5,561.4 1078.4,558.5 1078.3,555.7 1078.1,552.8 1078.0,550.0 1077.9,547.1 1077.7,544.2 1077.6,541.4 1077.4,538.5 1077.2,535.7 1077.0,532.8 1076.9,530.0 1076.6,527.1 1076.4,524.3 1076.2,521.4 1075.9,518.6 1075.7,515.7 1075.4,512.9 1075.1,510.0 1074.8,507.2 1074.5,504.3 1074.2,501.5 1073.8,498.6 1073.5,495.8 1073.1,493.0 1072.7,490.1 1072.3,487.3 1071.9,484.5 1071.4,481.6 1071.1,479.9M958.0,707.0 957.5,704.2 957.1,701.3 956.7,698.5 956.3,695.7 955.9,692.8 955.6,690.0 955.2,687.1 954.9,684.3 954.6,681.5 954.3,678.6 954.1,675.8 953.8,672.9 953.6,670.1 953.3,667.2 953.1,664.4 952.9,661.5 952.7,658.7 952.5,655.8 952.4,653.0 952.2,650.1 952.0,647.2 951.9,644.4 951.8,641.5 951.6,638.7 951.5,635.8 951.4,633.0 951.3,630.1 951.2,627.2 951.1,624.4 951.1,621.5 951.0,618.7 950.9,615.8 950.9,612.9 950.9,610.1 950.8,607.2 950.8,604.3 950.8,601.5 950.8,598.6 950.8,595.8 950.8,592.9 950.8,590.0 950.8,587.2 950.8,584.3 950.9,581.4 950.9,578.6 951.0,575.7 951.0,572.8 951.1,570.0 951.2,567.1 951.2,564.3 951.3,561.4 951.4,558.5 951.5,555.7 951.7,552.8 951.8,550.0 951.9,547.1 952.1,544.2 952.2,541.4 952.4,538.5 952.6,535.7 952.8,532.8 952.9,530.0 953.2,527.1 953.4,524.3 953.6,521.4 953.9,518.6 954.1,515.7 954.4,512.9 954.7,510.0 955.0,507.2 955.3,504.3 955.6,501.5 956.0,498.6 956.3,495.8 956.7,493.0 957.1,490.1 957.5,487.3 957.9,484.5 958.4,481.6 958.7,479.9M1093.4,706.6 1094.0,703.7 1094.6,700.8 1095.2,698.0 1095.8,695.1 1096.4,692.2 1096.9,689.3 1097.4,686.4 1097.9,683.5 1098.3,680.6 1098.8,677.7 1099.2,674.8 1099.6,671.9 1099.9,669.0 1100.3,666.1 1100.6,663.2 1101.0,660.2 1101.3,657.3 1101.5,654.4 1101.8,651.5 1102.1,648.6 1102.3,645.6 1102.5,642.7 1102.8,639.8 1102.9,636.9 1103.1,633.9 1103.3,631.0 1103.5,628.1 1103.6,625.1 1103.7,622.2 1103.8,619.3 1103.9,616.4 1104.0,613.4 1104.1,610.5 1104.2,607.5 1104.2,604.6 1104.3,601.7 1104.3,598.7 1104.3,595.8 1104.3,592.9 1104.3,589.9 1104.2,587.0 1104.2,584.1 1104.1,581.1 1104.1,578.2 1104.0,575.3 1103.9,572.3 1103.8,569.4 1103.7,566.5 1103.5,563.5 1103.4,560.6 1103.2,557.7 1103.0,554.7 1102.8,551.8 1102.6,548.9 1102.4,546.0 1102.2,543.0 1101.9,540.1 1101.7,537.2 1101.4,534.3 1101.1,531.3 1100.8,528.4 1100.4,525.5 1100.1,522.6 1099.7,519.7 1099.3,516.8 1098.9,513.9 1098.5,511.0 1098.1,508.1 1097.6,505.2 1097.1,502.3 1096.6,499.4 1096.1,496.5 1095.5,493.6 1094.9,490.7 1094.3,487.8 1093.7,484.9 1093.1,482.1 1092.7,480.3M936.4,706.6 935.8,703.7 935.2,700.8 934.6,698.0 934.0,695.1 933.4,692.2 932.9,689.3 932.4,686.4 931.9,683.5 931.5,680.6 931.0,677.7 930.6,674.8 930.2,671.9 929.9,669.0 929.5,666.1 929.2,663.2 928.8,660.2 928.5,657.3 928.3,654.4 928.0,651.5 927.7,648.6 927.5,645.6 927.3,642.7 927.0,639.8 926.9,636.9 926.7,633.9 926.5,631.0 926.3,628.1 926.2,625.1 926.1,622.2 926.0,619.3 925.9,616.4 925.8,613.4 925.7,610.5 925.6,607.5 925.6,604.6 925.5,601.7 925.5,598.7 925.5,595.8 925.5,592.9 925.5,589.9 925.6,587.0 925.6,584.1 925.7,581.1 925.7,578.2 925.8,575.3 925.9,572.3 926.0,569.4 926.1,566.5 926.3,563.5 926.4,560.6 926.6,557.7 926.8,554.7 927.0,551.8 927.2,548.9 927.4,546.0 927.6,543.0 927.9,540.1 928.1,537.2 928.4,534.3 928.7,531.3 929.0,528.4 929.4,525.5 929.7,522.6 930.1,519.7 930.5,516.8 930.9,513.9 931.3,511.0 931.7,508.1 932.2,505.2 932.7,502.3 933.2,499.4 933.7,496.5 934.3,493.6 934.9,490.7 935.5,487.8 936.1,484.9 936.7,482.1 937.1,480.3M1114.9,707.6 1115.7,704.6 1116.6,701.7 1117.4,698.8 1118.1,695.8 1118.9,692.8 1119.6,689.9 1120.2,686.9 1120.9,683.9 1121.5,681.0 1122.1,678.0 1122.6,675.0 1123.2,672.0 1123.7,669.0 1124.2,666.0 1124.6,663.0 1125.1,660.0 1125.5,657.0 1125.9,654.0 1126.3,651.0 1126.6,648.0 1126.9,645.0 1127.2,642.0 1127.5,638.9 1127.8,635.9 1128.0,632.9 1128.3,629.9 1128.5,626.8 1128.7,623.8 1128.8,620.8 1129.0,617.7 1129.1,614.7 1129.2,611.7 1129.3,608.6 1129.4,605.6 1129.5,602.6 1129.5,599.5 1129.5,596.5 1129.5,593.5 1129.5,590.4 1129.5,587.4 1129.4,584.4 1129.3,581.3 1129.2,578.3 1129.1,575.2 1129.0,572.2 1128.9,569.2 1128.7,566.1 1128.5,563.1 1128.3,560.1 1128.1,557.1 1127.8,554.0 1127.5,551.0 1127.3,548.0 1127.0,545.0 1126.6,541.9 1126.3,538.9 1125.9,535.9 1125.5,532.9 1125.1,529.9 1124.7,526.9 1124.2,523.9 1123.7,520.9 1123.2,517.9 1122.7,514.9 1122.1,511.9 1121.5,508.9 1120.9,506.0 1120.3,503.0 1119.6,500.0 1118.9,497.0 1118.2,494.1 1117.4,491.1 1116.7,488.2 1115.9,485.2 1115.0,482.3 1114.3,479.9M914.9,707.6 914.1,704.6 913.2,701.7 912.4,698.8 911.7,695.8 910.9,692.8 910.2,689.9 909.6,686.9 908.9,683.9 908.3,681.0 907.7,678.0 907.2,675.0 906.6,672.0 906.1,669.0 905.6,666.0 905.2,663.0 904.7,660.0 904.3,657.0 903.9,654.0 903.5,651.0 903.2,648.0 902.9,645.0 902.6,642.0 902.3,638.9 902.0,635.9 901.8,632.9 901.5,629.9 901.3,626.8 901.1,623.8 901.0,620.8 900.8,617.7 900.7,614.7 900.6,611.7 900.5,608.6 900.4,605.6 900.3,602.6 900.3,599.5 900.3,596.5 900.3,593.5 900.3,590.4 900.3,587.4 900.4,584.4 900.5,581.3 900.6,578.3 900.7,575.2 900.8,572.2 900.9,569.2 901.1,566.1 901.3,563.1 901.5,560.1 901.7,557.1 902.0,554.0 902.3,551.0 902.5,548.0 902.8,545.0 903.2,541.9 903.5,538.9 903.9,535.9 904.3,532.9 904.7,529.9 905.1,526.9 905.6,523.9 906.1,520.9 906.6,517.9 907.1,514.9 907.7,511.9 908.3,508.9 908.9,506.0 909.5,503.0 910.2,500.0 910.9,497.0 911.6,494.1 912.4,491.1 913.1,488.2 913.9,485.2 914.8,482.3 915.5,479.9M1136.6,708.9 1137.5,706.4 1138.3,704.0 1139.1,701.6 1139.9,699.2 1140.7,696.7 1141.4,694.3 1142.1,691.9 1142.8,689.4 1143.5,686.9 1144.1,684.5 1144.7,682.0 1145.3,679.6 1145.9,677.1 1146.5,674.6 1147.0,672.1 1147.5,669.7 1148.0,667.2 1148.5,664.7 1148.9,662.2 1149.4,659.7 1149.8,657.2 1150.2,654.7 1150.6,652.2 1150.9,649.7 1151.3,647.2 1151.6,644.7 1151.9,642.1 1152.2,639.6 1152.5,637.1 1152.8,634.6 1153.0,632.1 1153.2,629.5 1153.4,627.0 1153.6,624.5 1153.8,622.0 1154.0,619.4 1154.1,616.9 1154.3,614.4 1154.4,611.8 1154.5,609.3 1154.6,606.8 1154.6,604.2 1154.7,601.7 1154.7,599.2 1154.7,596.6 1154.7,594.1 1154.7,591.6 1154.7,589.0 1154.7,586.5 1154.6,584.0 1154.5,581.4 1154.4,578.9 1154.3,576.3 1154.2,573.8 1154.1,571.3 1153.9,568.8 1153.7,566.2 1153.6,563.7 1153.4,561.2 1153.1,558.6 1152.9,556.1 1152.6,553.6 1152.4,551.1 1152.1,548.6 1151.8,546.0 1151.5,543.5 1151.1,541.0 1150.8,538.5 1150.4,536.0 1150.0,533.5 1149.6,531.0 1149.2,528.5 1148.7,526.0 1148.2,523.5 1147.8,521.0 1147.3,518.5 1146.7,516.0 1146.2,513.5 1145.6,511.1 1145.0,508.6 1144.4,506.1 1143.8,503.7 1143.1,501.2 1142.5,498.7 1141.8,496.3 1141.1,493.8 1140.3,491.4 1139.6,489.0 1138.8,486.5 1138.0,484.1 1137.1,481.7 1136.3,479.3 1136.0,478.7M893.2,708.9 892.3,706.4 891.5,704.0 890.7,701.6 889.9,699.2 889.1,696.7 888.4,694.3 887.7,691.9 887.0,689.4 886.3,686.9 885.7,684.5 885.1,682.0 884.5,679.6 883.9,677.1 883.3,674.6 882.8,672.1 882.3,669.7 881.8,667.2 881.3,664.7 880.9,662.2 880.4,659.7 880.0,657.2 879.6,654.7 879.2,652.2 878.9,649.7 878.5,647.2 878.2,644.7 877.9,642.1 877.6,639.6 877.3,637.1 877.0,634.6 876.8,632.1 876.6,629.5 876.4,627.0 876.2,624.5 876.0,622.0 875.8,619.4 875.7,616.9 875.5,614.4 875.4,611.8 875.3,609.3 875.2,606.8 875.2,604.2 875.1,601.7 875.1,599.2 875.1,596.6 875.1,594.1 875.1,591.6 875.1,589.0 875.1,586.5 875.2,584.0 875.3,581.4 875.4,578.9 875.5,576.3 875.6,573.8 875.7,571.3 875.9,568.8 876.1,566.2 876.2,563.7 876.4,561.2 876.7,558.6 876.9,556.1 877.2,553.6 877.4,551.1 877.7,548.6 878.0,546.0 878.3,543.5 878.7,541.0 879.0,538.5 879.4,536.0 879.8,533.5 880.2,531.0 880.6,528.5 881.1,526.0 881.6,523.5 882.0,521.0 882.5,518.5 883.1,516.0 883.6,513.5 884.2,511.1 884.8,508.6 885.4,506.1 886.0,503.7 886.7,501.2 887.3,498.7 888.0,496.3 888.7,493.8 889.5,491.4 890.2,489.0 891.0,486.5 891.8,484.1 892.7,481.7 893.5,479.3 893.8,478.7M1158.1,711.7 1159.2,709.2 1160.2,706.7 1161.2,704.2 1162.1,701.7 1163.0,699.1 1163.9,696.6 1164.8,694.1 1165.6,691.5 1166.4,689.0 1167.2,686.4 1168.0,683.8 1168.7,681.3 1169.4,678.7 1170.1,676.1 1170.8,673.5 1171.4,670.9 1172.0,668.3 1172.6,665.7 1173.1,663.1 1173.7,660.5 1174.2,657.9 1174.6,655.2 1175.1,652.6 1175.5,650.0 1176.0,647.3 1176.4,644.7 1176.7,642.1 1177.1,639.4 1177.4,636.8 1177.7,634.1 1178.0,631.5 1178.3,628.8 1178.5,626.1 1178.8,623.5 1179.0,620.8 1179.2,618.2 1179.3,615.5 1179.5,612.8 1179.6,610.2 1179.7,607.5 1179.8,604.8 1179.9,602.1 1179.9,599.5 1180.0,596.8 1180.0,594.1 1179.9,591.5 1179.9,588.8 1179.9,586.1 1179.8,583.4 1179.7,580.8 1179.6,578.1 1179.4,575.4 1179.3,572.8 1179.1,570.1 1178.9,567.4 1178.7,564.8 1178.5,562.1 1178.2,559.4 1177.9,556.8 1177.6,554.1 1177.3,551.5 1176.9,548.8 1176.6,546.2 1176.2,543.5 1175.8,540.9 1175.4,538.3 1174.9,535.6 1174.4,533.0 1173.9,530.4 1173.4,527.7 1172.9,525.1 1172.3,522.5 1171.7,519.9 1171.1,517.3 1170.5,514.7 1169.8,512.1 1169.1,509.5 1168.4,506.9 1167.7,504.4 1166.9,501.8 1166.1,499.2 1165.3,496.7 1164.4,494.1 1163.6,491.6 1162.7,489.0 1161.8,486.5 1160.8,484.0 1159.8,481.5 1158.8,479.0 1157.8,476.5M871.7,711.7 870.6,709.2 869.6,706.7 868.6,704.2 867.7,701.7 866.8,699.1 865.9,696.6 865.0,694.1 864.2,691.5 863.4,689.0 862.6,686.4 861.8,683.8 861.1,681.3 860.4,678.7 859.7,676.1 859.0,673.5 858.4,670.9 857.8,668.3 857.2,665.7 856.7,663.1 856.1,660.5 855.6,657.9 855.2,655.2 854.7,652.6 854.3,650.0 853.8,647.3 853.4,644.7 853.1,642.1 852.7,639.4 852.4,636.8 852.1,634.1 851.8,631.5 851.5,628.8 851.3,626.1 851.0,623.5 850.8,620.8 850.6,618.2 850.5,615.5 850.3,612.8 850.2,610.2 850.1,607.5 850.0,604.8 849.9,602.1 849.9,599.5 849.8,596.8 849.8,594.1 849.9,591.5 849.9,588.8 849.9,586.1 850.0,583.4 850.1,580.8 850.2,578.1 850.4,575.4 850.5,572.8 850.7,570.1 850.9,567.4 851.1,564.8 851.3,562.1 851.6,559.4 851.9,556.8 852.2,554.1 852.5,551.5 852.9,548.8 853.2,546.2 853.6,543.5 854.0,540.9 854.4,538.3 854.9,535.6 855.4,533.0 855.9,530.4 856.4,527.7 856.9,525.1 857.5,522.5 858.1,519.9 858.7,517.3 859.3,514.7 860.0,512.1 860.7,509.5 861.4,506.9 862.1,504.4 862.9,501.8 863.7,499.2 864.5,496.7 865.4,494.1 866.2,491.6 867.1,489.0 868.0,486.5 869.0,484.0 870.0,481.5 871.0,479.0 872.0,476.5M1179.4,715.6 1180.7,713.0 1181.9,710.4 1183.1,707.8 1184.2,705.2 1185.3,702.6 1186.4,699.9 1187.4,697.2 1188.4,694.6 1189.4,691.9 1190.3,689.2 1191.2,686.5 1192.1,683.8 1192.9,681.1 1193.7,678.4 1194.5,675.6 1195.3,672.9 1196.0,670.2 1196.7,667.4 1197.3,664.6 1198.0,661.9 1198.6,659.1 1199.1,656.3 1199.7,653.5 1200.2,650.7 1200.7,647.9 1201.2,645.1 1201.6,642.3 1202.0,639.5 1202.4,636.7 1202.8,633.9 1203.1,631.1 1203.4,628.2 1203.7,625.4 1203.9,622.6 1204.2,619.8 1204.4,616.9 1204.6,614.1 1204.7,611.2 1204.9,608.4 1205.0,605.6 1205.1,602.7 1205.1,599.9 1205.2,597.0 1205.2,594.2 1205.1,591.3 1205.1,588.5 1205.0,585.6 1204.9,582.8 1204.8,579.9 1204.7,577.1 1204.5,574.3 1204.3,571.4 1204.1,568.6 1203.9,565.7 1203.6,562.9 1203.3,560.1 1203.0,557.3 1202.6,554.4 1202.2,551.6 1201.8,548.8 1201.4,546.0 1201.0,543.2 1200.5,540.4 1200.0,537.6 1199.4,534.8 1198.9,532.0 1198.3,529.2 1197.7,526.4 1197.0,523.7 1196.4,520.9 1195.6,518.1 1194.9,515.4 1194.2,512.7 1193.4,509.9 1192.6,507.2 1191.7,504.5 1190.8,501.8 1189.9,499.1 1189.0,496.4 1188.0,493.7 1187.0,491.0 1186.0,488.3 1184.9,485.7 1183.8,483.0 1182.6,480.4 1181.5,477.8 1180.3,475.2 1179.1,472.6M850.4,715.6 849.1,713.0 847.9,710.4 846.7,707.8 845.6,705.2 844.5,702.6 843.4,699.9 842.4,697.2 841.4,694.6 840.4,691.9 839.5,689.2 838.6,686.5 837.7,683.8 836.9,681.1 836.1,678.4 835.3,675.6 834.5,672.9 833.8,670.2 833.1,667.4 832.5,664.6 831.8,661.9 831.2,659.1 830.7,656.3 830.1,653.5 829.6,650.7 829.1,647.9 828.6,645.1 828.2,642.3 827.8,639.5 827.4,636.7 827.0,633.9 826.7,631.1 826.4,628.2 826.1,625.4 825.9,622.6 825.6,619.8 825.4,616.9 825.2,614.1 825.1,611.2 824.9,608.4 824.8,605.6 824.7,602.7 824.7,599.9 824.6,597.0 824.6,594.2 824.7,591.3 824.7,588.5 824.8,585.6 824.9,582.8 825.0,579.9 825.1,577.1 825.3,574.3 825.5,571.4 825.7,568.6 825.9,565.7 826.2,562.9 826.5,560.1 826.8,557.3 827.2,554.4 827.6,551.6 828.0,548.8 828.4,546.0 828.8,543.2 829.3,540.4 829.8,537.6 830.4,534.8 830.9,532.0 831.5,529.2 832.1,526.4 832.8,523.7 833.4,520.9 834.2,518.1 834.9,515.4 835.6,512.7 836.4,509.9 837.2,507.2 838.1,504.5 839.0,501.8 839.9,499.1 840.8,496.4 841.8,493.7 842.8,491.0 843.8,488.3 844.9,485.7 846.0,483.0 847.2,480.4 848.3,477.8 849.5,475.2 850.7,472.6M1200.4,720.9 1201.9,718.2 1203.3,715.4 1204.7,712.7 1206.0,709.9 1207.3,707.1 1208.6,704.3 1209.8,701.5 1211.0,698.7 1212.1,695.9 1213.2,693.0 1214.3,690.2 1215.3,687.3 1216.3,684.4 1217.3,681.5 1218.2,678.6 1219.1,675.7 1219.9,672.8 1220.7,669.8 1221.5,666.9 1222.2,663.9 1223.0,661.0 1223.6,658.0 1224.3,655.0 1224.9,652.0 1225.4,649.0 1226.0,646.0 1226.5,643.0 1227.0,640.0 1227.4,637.0 1227.8,633.9 1228.2,630.9 1228.5,627.8 1228.9,624.8 1229.2,621.8 1229.4,618.7 1229.6,615.7 1229.8,612.6 1230.0,609.5 1230.1,606.5 1230.2,603.4 1230.3,600.4 1230.4,597.3 1230.4,594.2 1230.3,591.2 1230.3,588.1 1230.2,585.0 1230.1,582.0 1229.9,578.9 1229.8,575.8 1229.6,572.8 1229.3,569.7 1229.0,566.7 1228.7,563.6 1228.4,560.6 1228.0,557.6 1227.6,554.5 1227.2,551.5 1226.7,548.5 1226.3,545.4 1225.7,542.4 1225.2,539.4 1224.6,536.4 1224.0,533.4 1223.3,530.4 1222.6,527.5 1221.9,524.5 1221.1,521.5 1220.3,518.6 1219.5,515.6 1218.6,512.7 1217.8,509.8 1216.8,506.9 1215.9,503.9 1214.9,501.1 1213.8,498.2 1212.7,495.3 1211.6,492.5 1210.5,489.6 1209.3,486.8 1208.1,484.0 1206.8,481.2 1205.5,478.4 1204.2,475.6 1202.8,472.9 1201.4,470.1 1200.0,467.4M829.4,720.9 827.9,718.2 826.5,715.4 825.1,712.7 823.8,709.9 822.5,707.1 821.2,704.3 820.0,701.5 818.8,698.7 817.7,695.9 816.6,693.0 815.5,690.2 814.5,687.3 813.5,684.4 812.5,681.5 811.6,678.6 810.7,675.7 809.9,672.8 809.1,669.8 808.3,666.9 807.6,663.9 806.8,661.0 806.2,658.0 805.5,655.0 804.9,652.0 804.4,649.0 803.8,646.0 803.3,643.0 802.8,640.0 802.4,637.0 802.0,633.9 801.6,630.9 801.3,627.8 800.9,624.8 800.6,621.8 800.4,618.7 800.2,615.7 800.0,612.6 799.8,609.5 799.7,606.5 799.6,603.4 799.5,600.4 799.4,597.3 799.4,594.2 799.5,591.2 799.5,588.1 799.6,585.0 799.7,582.0 799.9,578.9 800.0,575.8 800.2,572.8 800.5,569.7 800.8,566.7 801.1,563.6 801.4,560.6 801.8,557.6 802.2,554.5 802.6,551.5 803.1,548.5 803.5,545.4 804.1,542.4 804.6,539.4 805.2,536.4 805.8,533.4 806.5,530.4 807.2,527.5 807.9,524.5 808.7,521.5 809.5,518.6 810.3,515.6 811.2,512.7 812.0,509.8 813.0,506.9 813.9,503.9 814.9,501.1 816.0,498.2 817.1,495.3 818.2,492.5 819.3,489.6 820.5,486.8 821.7,484.0 823.0,481.2 824.3,478.4 825.6,475.6 827.0,472.9 828.4,470.1 829.8,467.4M1220.0,729.1 1221.8,726.2 1223.4,723.3 1225.1,720.4 1226.7,717.5 1228.2,714.6 1229.7,711.6 1231.2,708.7 1232.6,705.7 1234.0,702.6 1235.3,699.6 1236.6,696.6 1237.8,693.5 1239.0,690.4 1240.1,687.3 1241.2,684.2 1242.3,681.0 1243.3,677.9 1244.3,674.7 1245.2,671.6 1246.1,668.4 1246.9,665.2 1247.7,662.0 1248.5,658.7 1249.2,655.5 1249.9,652.2 1250.5,649.0 1251.1,645.7 1251.7,642.4 1252.2,639.2 1252.7,635.9 1253.1,632.6 1253.5,629.3 1253.9,625.9 1254.2,623.5 1254.4,621.0 1254.6,618.5 1254.8,616.0 1255.0,613.5 1255.1,611.0 1255.2,608.5 1255.3,606.0 1255.4,603.5 1255.5,601.0 1255.5,598.5 1255.5,596.0 1255.5,593.5 1255.5,591.0 1255.5,588.4 1255.4,585.9 1255.3,583.4 1255.2,580.9 1255.1,578.4 1254.9,575.9 1254.7,573.4 1254.6,570.9 1254.3,568.4 1254.1,565.9 1253.8,563.5 1253.5,561.0 1253.2,558.5 1252.9,556.0 1252.6,553.5 1252.2,551.1 1251.8,548.6 1251.4,546.1 1250.8,542.8 1250.2,539.6 1249.5,536.3 1248.8,533.1 1248.1,529.8 1247.3,526.6 1246.4,523.4 1245.6,520.1 1244.7,517.0 1243.7,513.8 1242.7,510.6 1241.7,507.4 1240.6,504.3 1239.5,501.2 1238.4,498.1 1237.2,495.0 1235.9,491.9 1234.6,488.8 1233.3,485.8 1231.9,482.8 1230.5,479.8 1229.1,476.8 1227.6,473.8 1226.0,470.9 1224.5,467.9 1222.8,465.0 1221.2,462.1 1219.9,460.0M809.8,729.1 808.0,726.2 806.4,723.3 804.7,720.4 803.1,717.5 801.6,714.6 800.1,711.6 798.6,708.7 797.2,705.7 795.8,702.6 794.5,699.6 793.2,696.6 792.0,693.5 790.8,690.4 789.7,687.3 788.6,684.2 787.5,681.0 786.5,677.9 785.5,674.7 784.6,671.6 783.7,668.4 782.9,665.2 782.1,662.0 781.3,658.7 780.6,655.5 779.9,652.2 779.3,649.0 778.7,645.7 778.1,642.4 777.6,639.2 777.1,635.9 776.7,632.6 776.3,629.3 775.9,625.9 775.6,623.5 775.4,621.0 775.2,618.5 775.0,616.0 774.8,613.5 774.7,611.0 774.6,608.5 774.5,606.0 774.4,603.5 774.3,601.0 774.3,598.5 774.3,596.0 774.3,593.5 774.3,591.0 774.3,588.4 774.4,585.9 774.5,583.4 774.6,580.9 774.7,578.4 774.9,575.9 775.1,573.4 775.2,570.9 775.5,568.4 775.7,565.9 776.0,563.5 776.3,561.0 776.6,558.5 776.9,556.0 777.2,553.5 777.6,551.1 778.0,548.6 778.4,546.1 779.0,542.8 779.6,539.6 780.3,536.3 781.0,533.1 781.7,529.8 782.5,526.6 783.4,523.4 784.2,520.1 785.1,517.0 786.1,513.8 787.1,510.6 788.1,507.4 789.2,504.3 790.3,501.2 791.4,498.1 792.6,495.0 793.9,491.9 795.2,488.8 796.5,485.8 797.9,482.8 799.3,479.8 800.7,476.8 802.2,473.8 803.8,470.9 805.3,467.9 807.0,465.0 808.6,462.1 809.9,460.0M1238.0,740.0 1239.5,737.8 1241.1,735.5 1242.5,733.2 1244.0,730.9 1245.4,728.6 1246.8,726.3 1248.2,724.0 1249.6,721.6 1250.9,719.2 1252.2,716.8 1253.4,714.4 1254.7,712.0 1255.9,709.6 1257.1,707.1 1258.2,704.7 1259.3,702.2 1260.4,699.7 1261.4,697.2 1262.5,694.7 1263.5,692.1 1264.4,689.6 1265.4,687.0 1266.3,684.5 1267.2,681.9 1268.0,679.3 1268.8,676.7 1269.6,674.1 1270.4,671.5 1271.1,668.8 1271.8,666.2 1272.5,663.6 1273.1,660.9 1273.8,658.2 1274.3,655.6 1274.9,652.9 1275.5,650.2 1276.0,647.5 1276.5,644.8 1276.9,642.1 1277.3,639.3 1277.8,636.6 1278.1,633.9 1278.5,631.2 1278.8,628.4 1279.1,625.7 1279.4,622.9 1279.7,620.2 1279.9,617.4 1280.1,614.7 1280.2,611.9 1280.4,609.1 1280.5,606.4 1280.6,603.6 1280.7,600.8 1280.7,598.1 1280.7,595.3 1280.7,592.5 1280.7,589.8 1280.6,587.0 1280.5,584.2 1280.4,581.5 1280.3,578.7 1280.1,575.9 1279.9,573.2 1279.7,570.4 1279.4,567.7 1279.1,564.9 1278.8,562.2 1278.5,559.4 1278.1,556.7 1277.7,553.9 1277.3,551.2 1276.9,548.5 1276.4,545.8 1275.9,543.0 1275.4,540.3 1274.9,537.6 1274.3,534.9 1273.7,532.3 1273.0,529.6 1272.4,526.9 1271.7,524.2 1271.0,521.6 1270.3,519.0 1269.5,516.3 1268.7,513.7 1267.9,511.1 1267.0,508.5 1266.2,505.9 1265.2,503.3 1264.3,500.7 1263.4,498.2 1262.4,495.6 1261.3,493.1 1260.3,490.6 1259.2,488.1 1258.1,485.6 1257.0,483.1 1255.8,480.6 1254.7,478.2 1253.5,475.7 1252.2,473.3 1250.9,470.9 1249.7,468.5 1248.3,466.1 1247.0,463.7 1245.6,461.4 1244.2,459.1 1242.8,456.7 1241.3,454.4 1239.9,452.2 1238.4,449.9M791.8,740.0 790.3,737.8 788.7,735.5 787.3,733.2 785.8,730.9 784.4,728.6 783.0,726.3 781.6,724.0 780.2,721.6 778.9,719.2 777.6,716.8 776.4,714.4 775.1,712.0 773.9,709.6 772.7,707.1 771.6,704.7 770.5,702.2 769.4,699.7 768.4,697.2 767.3,694.7 766.3,692.1 765.4,689.6 764.4,687.0 763.5,684.5 762.6,681.9 761.8,679.3 761.0,676.7 760.2,674.1 759.4,671.5 758.7,668.8 758.0,666.2 757.3,663.6 756.7,660.9 756.0,658.2 755.5,655.6 754.9,652.9 754.3,650.2 753.8,647.5 753.3,644.8 752.9,642.1 752.5,639.3 752.0,636.6 751.7,633.9 751.3,631.2 751.0,628.4 750.7,625.7 750.4,622.9 750.1,620.2 749.9,617.4 749.7,614.7 749.6,611.9 749.4,609.1 749.3,606.4 749.2,603.6 749.1,600.8 749.1,598.1 749.1,595.3 749.1,592.5 749.1,589.8 749.2,587.0 749.3,584.2 749.4,581.5 749.5,578.7 749.7,575.9 749.9,573.2 750.1,570.4 750.4,567.7 750.7,564.9 751.0,562.2 751.3,559.4 751.7,556.7 752.1,553.9 752.5,551.2 752.9,548.5 753.4,545.8 753.9,543.0 754.4,540.3 754.9,537.6 755.5,534.9 756.1,532.3 756.8,529.6 757.4,526.9 758.1,524.2 758.8,521.6 759.5,519.0 760.3,516.3 761.1,513.7 761.9,511.1 762.8,508.5 763.6,505.9 764.6,503.3 765.5,500.7 766.4,498.2 767.4,495.6 768.5,493.1 769.5,490.6 770.6,488.1 771.7,485.6 772.8,483.1 774.0,480.6 775.1,478.2 776.3,475.7 777.6,473.3 778.9,470.9 780.1,468.5 781.5,466.1 782.8,463.7 784.2,461.4 785.6,459.1 787.0,456.7 788.5,454.4 789.9,452.2 791.4,449.9M1253.0,755.1 1254.8,752.8 1256.6,750.4 1258.4,748.0 1260.2,745.6 1261.9,743.2 1263.6,740.7 1265.3,738.3 1266.9,735.8 1268.6,733.3 1270.1,730.7 1271.7,728.1 1273.2,725.6 1274.7,722.9 1276.1,720.3 1277.5,717.7 1278.9,715.0 1280.3,712.3 1281.6,709.6 1282.9,706.9 1284.1,704.1 1285.3,701.3 1286.5,698.6 1287.6,695.8 1288.7,692.9 1289.8,690.1 1290.8,687.3 1291.8,684.4 1292.7,681.5 1293.7,678.6 1294.5,675.7 1295.4,672.8 1296.2,669.8 1297.0,666.9 1297.7,663.9 1298.5,660.9 1299.1,657.9 1299.8,654.9 1300.4,651.9 1301.0,648.9 1301.5,645.9 1302.0,642.9 1302.5,639.8 1303.0,636.8 1303.4,633.7 1303.8,630.6 1304.1,627.5 1304.5,624.5 1304.8,621.4 1305.0,618.3 1305.2,615.2 1305.4,612.1 1305.6,609.0 1305.7,605.9 1305.8,602.8 1305.9,599.7 1305.9,596.6 1305.9,593.5 1305.9,590.4 1305.8,587.2 1305.7,584.1 1305.5,581.0 1305.4,577.9 1305.2,574.8 1304.9,571.7 1304.7,568.6 1304.4,565.5 1304.0,562.5 1303.7,559.4 1303.2,556.3 1302.8,553.2 1302.3,550.2 1301.8,547.1 1301.3,544.1 1300.7,541.0 1300.1,538.0 1299.5,535.0 1298.8,532.0 1298.1,529.0 1297.4,526.0 1296.6,523.0 1295.8,520.0 1295.0,517.1 1294.1,514.2 1293.2,511.2 1292.2,508.3 1291.3,505.4 1290.3,502.5 1289.2,499.7 1288.1,496.8 1287.0,494.0 1285.9,491.2 1284.7,488.4 1283.5,485.6 1282.3,482.8 1281.0,480.1 1279.7,477.3 1278.4,474.6 1277.0,471.9 1275.6,469.3 1274.2,466.6 1272.7,464.0 1271.2,461.4 1269.7,458.8 1268.1,456.2 1266.6,453.7 1264.9,451.1 1263.3,448.6 1261.6,446.2 1259.9,443.7 1258.2,441.3 1256.4,438.9 1254.7,436.5 1252.8,434.2M776.8,755.1 775.0,752.8 773.2,750.4 771.4,748.0 769.6,745.6 767.9,743.2 766.2,740.7 764.5,738.3 762.9,735.8 761.2,733.3 759.7,730.7 758.1,728.1 756.6,725.6 755.1,722.9 753.7,720.3 752.3,717.7 750.9,715.0 749.5,712.3 748.2,709.6 746.9,706.9 745.7,704.1 744.5,701.3 743.3,698.6 742.2,695.8 741.1,692.9 740.0,690.1 739.0,687.3 738.0,684.4 737.1,681.5 736.1,678.6 735.3,675.7 734.4,672.8 733.6,669.8 732.8,666.9 732.1,663.9 731.3,660.9 730.7,657.9 730.0,654.9 729.4,651.9 728.8,648.9 728.3,645.9 727.8,642.9 727.3,639.8 726.8,636.8 726.4,633.7 726.0,630.6 725.7,627.5 725.3,624.5 725.0,621.4 724.8,618.3 724.6,615.2 724.4,612.1 724.2,609.0 724.1,605.9 724.0,602.8 723.9,599.7 723.9,596.6 723.9,593.5 723.9,590.4 724.0,587.2 724.1,584.1 724.3,581.0 724.4,577.9 724.6,574.8 724.9,571.7 725.1,568.6 725.4,565.5 725.8,562.5 726.1,559.4 726.6,556.3 727.0,553.2 727.5,550.2 728.0,547.1 728.5,544.1 729.1,541.0 729.7,538.0 730.3,535.0 731.0,532.0 731.7,529.0 732.4,526.0 733.2,523.0 734.0,520.0 734.8,517.1 735.7,514.2 736.6,511.2 737.6,508.3 738.5,505.4 739.5,502.5 740.6,499.7 741.7,496.8 742.8,494.0 743.9,491.2 745.1,488.4 746.3,485.6 747.5,482.8 748.8,480.1 750.1,477.3 751.4,474.6 752.8,471.9 754.2,469.3 755.6,466.6 757.1,464.0 758.6,461.4 760.1,458.8 761.7,456.2 763.2,453.7 764.9,451.1 766.5,448.6 768.2,446.2 769.9,443.7 771.6,441.3 773.4,438.9 775.1,436.5 777.0,434.2M1261.9,776.7 1264.2,774.3 1266.4,772.0 1268.6,769.5 1270.7,767.1 1272.9,764.6 1275.0,762.0 1277.0,759.5 1279.1,756.9 1281.1,754.3 1283.1,751.6 1285.0,748.9 1286.9,746.2 1288.8,743.4 1290.7,740.7 1292.5,737.8 1294.2,735.0 1296.0,732.1 1297.7,729.2 1299.3,726.3 1300.9,723.3 1302.5,720.3 1304.1,717.3 1305.5,714.3 1307.0,711.2 1308.4,708.1 1309.8,705.0 1311.1,701.8 1312.4,698.7 1313.6,695.5 1314.8,692.2 1316.0,689.0 1317.1,685.7 1318.1,682.5 1319.2,679.2 1320.1,675.8 1321.1,672.5 1322.0,669.1 1322.8,665.8 1323.6,662.4 1324.4,659.0 1325.1,655.6 1325.8,652.1 1326.4,648.7 1327.0,645.2 1327.6,641.7 1328.1,638.2 1328.6,634.7 1329.0,631.2 1329.4,627.7 1329.7,624.2 1330.0,620.7 1330.3,617.1 1330.6,613.6 1330.7,610.0 1330.9,606.5 1331.0,602.9 1331.1,599.4 1331.1,595.8 1331.1,592.3 1331.0,588.7 1330.9,585.2 1330.8,581.6 1330.6,578.1 1330.3,574.5 1330.1,571.0 1329.7,567.4 1329.4,563.9 1329.0,560.4 1328.5,556.9 1328.1,553.3 1327.5,549.8 1327.0,546.4 1326.4,542.9 1325.7,539.4 1325.0,536.0 1324.3,532.5 1323.5,529.1 1322.7,525.7 1321.8,522.3 1320.9,518.9 1319.9,515.5 1319.0,512.2 1317.9,508.9 1316.9,505.6 1315.7,502.3 1314.6,499.0 1313.4,495.8 1312.2,492.5 1310.9,489.3 1309.6,486.2 1308.2,483.0 1306.8,479.9 1305.4,476.8 1303.9,473.7 1302.4,470.6 1300.8,467.6 1299.2,464.6 1297.6,461.6 1296.0,458.7 1294.3,455.8 1292.5,452.9 1290.8,450.0 1289.0,447.2 1287.1,444.4 1285.2,441.6 1283.3,438.9 1281.4,436.2 1279.5,433.5 1277.5,430.9 1275.4,428.3 1273.4,425.7 1271.3,423.2 1269.2,420.7 1267.1,418.2 1264.9,415.8 1262.7,413.4 1262.0,412.6M767.9,776.7 765.6,774.3 763.4,772.0 761.2,769.5 759.1,767.1 756.9,764.6 754.8,762.0 752.8,759.5 750.7,756.9 748.7,754.3 746.7,751.6 744.8,748.9 742.9,746.2 741.0,743.4 739.1,740.7 737.3,737.8 735.6,735.0 733.8,732.1 732.1,729.2 730.5,726.3 728.9,723.3 727.3,720.3 725.7,717.3 724.3,714.3 722.8,711.2 721.4,708.1 720.0,705.0 718.7,701.8 717.4,698.7 716.2,695.5 715.0,692.2 713.8,689.0 712.7,685.7 711.7,682.5 710.6,679.2 709.7,675.8 708.7,672.5 707.8,669.1 707.0,665.8 706.2,662.4 705.4,659.0 704.7,655.6 704.0,652.1 703.4,648.7 702.8,645.2 702.2,641.7 701.7,638.2 701.2,634.7 700.8,631.2 700.4,627.7 700.1,624.2 699.8,620.7 699.5,617.1 699.2,613.6 699.1,610.0 698.9,606.5 698.8,602.9 698.7,599.4 698.7,595.8 698.7,592.3 698.8,588.7 698.9,585.2 699.0,581.6 699.2,578.1 699.5,574.5 699.7,571.0 700.1,567.4 700.4,563.9 700.8,560.4 701.3,556.9 701.7,553.3 702.3,549.8 702.8,546.4 703.4,542.9 704.1,539.4 704.8,536.0 705.5,532.5 706.3,529.1 707.1,525.7 708.0,522.3 708.9,518.9 709.9,515.5 710.8,512.2 711.9,508.9 712.9,505.6 714.1,502.3 715.2,499.0 716.4,495.8 717.6,492.5 718.9,489.3 720.2,486.2 721.6,483.0 723.0,479.9 724.4,476.8 725.9,473.7 727.4,470.6 729.0,467.6 730.6,464.6 732.2,461.6 733.8,458.7 735.5,455.8 737.3,452.9 739.0,450.0 740.8,447.2 742.7,444.4 744.6,441.6 746.5,438.9 748.4,436.2 750.3,433.5 752.3,430.9 754.4,428.3 756.4,425.7 758.5,423.2 760.6,420.7 762.7,418.2 764.9,415.8 767.1,413.4 767.8,412.6M1201.1,844.3 1204.0,842.8M1260.0,806.8 1262.7,804.6 1265.4,802.3 1268.1,800.0 1270.8,797.7 1273.4,795.3 1276.0,792.9 1278.6,790.4 1281.2,787.8 1283.7,785.3 1286.2,782.6 1288.7,780.0 1291.2,777.3 1293.6,774.5 1296.0,771.7 1298.4,768.8 1300.7,765.9 1303.0,763.0 1305.3,760.0 1306.7,758.0 1308.2,755.9 1309.7,753.9 1311.1,751.8 1312.5,749.7 1313.9,747.6 1315.3,745.4 1316.7,743.3 1318.0,741.1 1319.3,738.9 1320.6,736.7 1321.9,734.5 1323.2,732.2 1324.4,730.0 1325.6,727.7 1326.8,725.4 1328.0,723.1 1329.1,720.8 1330.3,718.4 1331.4,716.1 1332.5,713.7 1333.5,711.3 1334.6,708.9 1335.6,706.4 1336.6,704.0 1337.5,701.5 1338.5,699.1 1339.4,696.6 1340.3,694.1 1341.1,691.6 1342.0,689.1 1342.8,686.5 1343.6,684.0 1344.4,681.4 1345.1,678.8 1345.8,676.2 1346.5,673.6 1347.2,671.0 1347.8,668.4 1348.4,665.8 1349.0,663.1 1349.6,660.5 1350.2,657.8 1350.7,655.2 1351.2,652.5 1351.7,649.8 1352.1,647.1 1352.5,644.4 1352.9,641.7 1353.3,639.0 1353.7,636.2 1354.0,633.5 1354.3,630.8 1354.6,628.0 1354.9,625.3 1355.1,622.5 1355.4,619.8 1355.6,617.0 1355.7,614.2 1355.9,611.5 1356.0,608.7 1356.1,605.9 1356.2,603.2 1356.2,600.4 1356.3,597.6 1356.3,594.8 1356.2,592.1 1356.2,589.3 1356.1,586.5 1356.0,583.7 1355.9,581.0 1355.8,578.2 1355.6,575.4 1355.4,572.7 1355.2,569.9 1354.9,567.1 1354.7,564.4 1354.4,561.6 1354.1,558.9 1353.7,556.2 1353.4,553.4 1353.0,550.7 1352.6,548.0 1352.1,545.2 1351.6,542.5 1351.2,539.8 1350.6,537.1 1350.1,534.4 1349.5,531.8 1349.0,529.1 1348.4,526.4 1347.7,523.8 1347.1,521.1 1346.4,518.5 1345.7,515.9 1344.9,513.3 1344.2,510.7 1343.4,508.1 1342.6,505.5 1341.8,503.0 1340.9,500.4 1340.1,497.9 1339.2,495.3 1338.3,492.8 1337.3,490.3 1336.4,487.8 1335.4,485.4 1334.4,482.9 1333.3,480.5 1332.3,478.1 1331.2,475.6 1330.1,473.2 1329.0,470.9 1327.9,468.5 1326.7,466.2 1325.5,463.8 1324.3,461.5 1323.1,459.2 1321.9,456.9 1320.6,454.7 1319.3,452.4 1318.1,450.2 1316.7,448.0 1315.4,445.8 1314.1,443.6 1312.7,441.5 1311.3,439.3 1309.9,437.2 1308.5,435.1 1307.0,433.1 1305.6,431.0 1304.1,429.0 1302.6,426.9 1300.4,424.0 1298.1,421.0 1295.8,418.1 1293.4,415.2 1291.1,412.4 1288.6,409.7 1286.2,407.0 1283.7,404.3 1281.3,401.7 1278.7,399.1 1276.2,396.5 1273.6,394.1 1271.0,391.6 1268.4,389.2 1265.8,386.9 1263.2,384.6 1260.5,382.3 1259.6,381.6M828.7,844.3 825.8,842.8M769.8,806.8 767.1,804.6 764.4,802.3 761.7,800.0 759.0,797.7 756.4,795.3 753.8,792.9 751.2,790.4 748.6,787.8 746.1,785.3 743.6,782.6 741.1,780.0 738.6,777.3 736.2,774.5 733.8,771.7 731.4,768.8 729.1,765.9 726.8,763.0 724.5,760.0 723.1,758.0 721.6,755.9 720.1,753.9 718.7,751.8 717.3,749.7 715.9,747.6 714.5,745.4 713.1,743.3 711.8,741.1 710.5,738.9 709.2,736.7 707.9,734.5 706.6,732.2 705.4,730.0 704.2,727.7 703.0,725.4 701.8,723.1 700.7,720.8 699.5,718.4 698.4,716.1 697.3,713.7 696.3,711.3 695.2,708.9 694.2,706.4 693.2,704.0 692.3,701.5 691.3,699.1 690.4,696.6 689.5,694.1 688.7,691.6 687.8,689.1 687.0,686.5 686.2,684.0 685.4,681.4 684.7,678.8 684.0,676.2 683.3,673.6 682.6,671.0 682.0,668.4 681.4,665.8 680.8,663.1 680.2,660.5 679.6,657.8 679.1,655.2 678.6,652.5 678.1,649.8 677.7,647.1 677.3,644.4 676.9,641.7 676.5,639.0 676.1,636.2 675.8,633.5 675.5,630.8 675.2,628.0 674.9,625.3 674.7,622.5 674.4,619.8 674.2,617.0 674.1,614.2 673.9,611.5 673.8,608.7 673.7,605.9 673.6,603.2 673.6,600.4 673.5,597.6 673.5,594.8 673.6,592.1 673.6,589.3 673.7,586.5 673.8,583.7 673.9,581.0 674.0,578.2 674.2,575.4 674.4,572.7 674.6,569.9 674.9,567.1 675.1,564.4 675.4,561.6 675.7,558.9 676.1,556.2 676.4,553.4 676.8,550.7 677.2,548.0 677.7,545.2 678.2,542.5 678.6,539.8 679.2,537.1 679.7,534.4 680.3,531.8 680.8,529.1 681.4,526.4 682.1,523.8 682.7,521.1 683.4,518.5 684.1,515.9 684.9,513.3 685.6,510.7 686.4,508.1 687.2,505.5 688.0,503.0 688.9,500.4 689.7,497.9 690.6,495.3 691.5,492.8 692.5,490.3 693.4,487.8 694.4,485.4 695.4,482.9 696.5,480.5 697.5,478.1 698.6,475.6 699.7,473.2 700.8,470.9 701.9,468.5 703.1,466.2 704.3,463.8 705.5,461.5 706.7,459.2 707.9,456.9 709.2,454.7 710.5,452.4 711.7,450.2 713.1,448.0 714.4,445.8 715.7,443.6 717.1,441.5 718.5,439.3 719.9,437.2 721.3,435.1 722.8,433.1 724.2,431.0 725.7,429.0 727.2,426.9 729.4,424.0 731.7,421.0 734.0,418.1 736.4,415.2 738.7,412.4 741.2,409.7 743.6,407.0 746.1,404.3 748.5,401.7 751.1,399.1 753.6,396.5 756.2,394.1 758.8,391.6 761.4,389.2 764.0,386.9 766.6,384.6 769.3,382.3 770.2,381.6M1210.9,863.5 1214.0,862.2 1217.2,860.8 1220.3,859.3 1223.5,857.7 1226.7,856.0 1229.8,854.3 1233.0,852.4 1236.2,850.4 1238.3,849.1 1240.4,847.7 1242.5,846.3 1244.6,844.8 1246.7,843.4 1248.8,841.9 1250.9,840.4 1253.0,838.9 1255.1,837.4 1257.2,835.9 1259.3,834.4 1261.4,832.9 1263.5,831.4 1265.6,829.9 1267.7,828.4 1269.7,826.8 1271.8,825.3 1273.9,823.7 1275.9,822.1 1278.0,820.5 1280.0,818.9 1282.1,817.2 1284.1,815.5 1286.1,813.8 1288.2,812.1 1290.2,810.3 1292.2,808.6 1294.2,806.8 1296.1,804.9 1298.1,803.1 1300.1,801.2 1302.0,799.2 1303.9,797.3 1305.9,795.3 1307.8,793.3 1309.7,791.3 1311.6,789.2 1313.4,787.1 1315.3,785.0 1317.1,782.8 1319.0,780.6 1320.8,778.4 1322.6,776.2 1324.3,773.9 1326.1,771.6 1327.8,769.3 1329.6,767.0 1331.3,764.6 1332.9,762.2 1334.6,759.7 1336.2,757.3 1337.9,754.8 1339.4,752.3 1341.0,749.7 1342.6,747.2 1344.1,744.6 1345.6,742.0 1347.1,739.3 1348.5,736.6 1349.9,733.9 1351.3,731.2 1352.7,728.5 1354.0,725.7 1355.3,722.9 1356.6,720.1 1357.9,717.2 1359.1,714.4 1360.3,711.5 1361.4,708.6 1362.5,705.6 1363.6,702.7 1364.7,699.7 1365.7,696.7 1366.7,693.7 1367.7,690.7 1368.6,687.6 1369.5,684.6 1370.4,681.5 1371.2,678.4 1372.0,675.2 1372.7,672.1 1373.5,668.9 1374.2,665.8 1374.8,662.6 1375.5,659.4 1376.1,656.2 1376.6,653.0 1377.2,649.7 1377.7,646.5 1378.2,643.2 1378.6,639.9 1379.0,636.7 1379.4,633.4 1379.7,630.1 1380.0,626.8 1380.3,623.5 1380.6,620.1 1380.8,616.8 1381.0,613.5 1381.1,610.2 1381.3,606.8 1381.4,603.5 1381.4,600.1 1381.4,596.8 1381.4,593.5 1381.4,590.1 1381.3,586.8 1381.2,583.4 1381.1,580.1 1380.9,576.8 1380.7,573.4 1380.4,570.1 1380.1,566.8 1379.8,563.5 1379.5,560.1 1379.1,556.8 1378.7,553.5 1378.3,550.3 1377.8,547.0 1377.3,543.7 1376.7,540.5 1376.1,537.2 1375.5,534.0 1374.9,530.7 1374.2,527.5 1373.5,524.3 1372.8,521.1 1372.0,518.0 1371.2,514.8 1370.3,511.7 1369.5,508.6 1368.6,505.5 1367.6,502.4 1366.7,499.3 1365.7,496.2 1364.6,493.2 1363.6,490.2 1362.5,487.2 1361.4,484.2 1360.2,481.3 1359.0,478.3 1357.8,475.4 1356.6,472.5 1355.3,469.7 1354.1,466.8 1352.7,464.0 1351.4,461.2 1350.0,458.4 1348.6,455.7 1347.2,453.0 1345.8,450.3 1344.3,447.6 1342.8,445.0 1341.3,442.3 1339.7,439.7 1338.2,437.2 1336.6,434.6 1335.0,432.1 1333.4,429.6 1331.7,427.2 1330.1,424.7 1328.4,422.3 1326.7,420.0 1325.0,417.6 1323.2,415.3 1321.5,413.0 1319.7,410.7 1317.9,408.5 1316.1,406.3 1314.3,404.1 1312.5,401.9 1310.6,399.8 1308.8,397.7 1306.9,395.7 1305.0,393.6 1303.1,391.6 1301.2,389.6 1299.3,387.7 1297.4,385.8 1295.4,383.9 1293.5,382.0 1291.5,380.2 1289.5,378.4 1287.6,376.6 1285.6,374.8 1283.6,373.1 1281.6,371.4 1279.6,369.7 1277.6,368.1 1275.5,366.4 1273.5,364.8 1271.5,363.3 1269.4,361.7 1267.4,360.2 1265.3,358.6 1263.3,357.1 1261.2,355.6 1259.2,354.2 1257.1,352.7 1255.0,351.2 1253.0,349.8 1250.9,348.3 1248.8,346.9 1246.7,345.4 1244.7,344.0 1242.6,342.6 1239.5,340.5 1236.3,338.5 1233.2,336.6 1230.1,334.8 1226.9,333.0 1223.8,331.3 1220.7,329.8 1217.6,328.3 1214.5,326.8 1211.3,325.5M818.9,863.5 815.8,862.2 812.6,860.8 809.5,859.3 806.3,857.7 803.1,856.0 800.0,854.3 796.8,852.4 793.6,850.4 791.5,849.1 789.4,847.7 787.3,846.3 785.2,844.8 783.1,843.4 781.0,841.9 778.9,840.4 776.8,838.9 774.7,837.4 772.6,835.9 770.5,834.4 768.4,832.9 766.3,831.4 764.2,829.9 762.1,828.4 760.1,826.8 758.0,825.3 755.9,823.7 753.9,822.1 751.8,820.5 749.8,818.9 747.7,817.2 745.7,815.5 743.7,813.8 741.6,812.1 739.6,810.3 737.6,808.6 735.6,806.8 733.7,804.9 731.7,803.1 729.7,801.2 727.8,799.2 725.9,797.3 723.9,795.3 722.0,793.3 720.1,791.3 718.2,789.2 716.4,787.1 714.5,785.0 712.7,782.8 710.8,780.6 709.0,778.4 707.2,776.2 705.5,773.9 703.7,771.6 702.0,769.3 700.2,767.0 698.5,764.6 696.9,762.2 695.2,759.7 693.6,757.3 691.9,754.8 690.4,752.3 688.8,749.7 687.2,747.2 685.7,744.6 684.2,742.0 682.7,739.3 681.3,736.6 679.9,733.9 678.5,731.2 677.1,728.5 675.8,725.7 674.5,722.9 673.2,720.1 671.9,717.2 670.7,714.4 669.5,711.5 668.4,708.6 667.3,705.6 666.2,702.7 665.1,699.7 664.1,696.7 663.1,693.7 662.1,690.7 661.2,687.6 660.3,684.6 659.4,681.5 658.6,678.4 657.8,675.2 657.1,672.1 656.3,668.9 655.6,665.8 655.0,662.6 654.3,659.4 653.7,656.2 653.2,653.0 652.6,649.7 652.1,646.5 651.6,643.2 651.2,639.9 650.8,636.7 650.4,633.4 650.1,630.1 649.8,626.8 649.5,623.5 649.2,620.1 649.0,616.8 648.8,613.5 648.7,610.2 648.5,606.8 648.4,603.5 648.4,600.1 648.4,596.8 648.4,593.5 648.4,590.1 648.5,586.8 648.6,583.4 648.7,580.1 648.9,576.8 649.1,573.4 649.4,570.1 649.7,566.8 650.0,563.5 650.3,560.1 650.7,556.8 651.1,553.5 651.5,550.3 652.0,547.0 652.5,543.7 653.1,540.5 653.7,537.2 654.3,534.0 654.9,530.7 655.6,527.5 656.3,524.3 657.0,521.1 657.8,518.0 658.6,514.8 659.5,511.7 660.3,508.6 661.2,505.5 662.2,502.4 663.1,499.3 664.1,496.2 665.2,493.2 666.2,490.2 667.3,487.2 668.4,484.2 669.6,481.3 670.8,478.3 672.0,475.4 673.2,472.5 674.5,469.7 675.7,466.8 677.1,464.0 678.4,461.2 679.8,458.4 681.2,455.7 682.6,453.0 684.0,450.3 685.5,447.6 687.0,445.0 688.5,442.3 690.1,439.7 691.6,437.2 693.2,434.6 694.8,432.1 696.4,429.6 698.1,427.2 699.7,424.7 701.4,422.3 703.1,420.0 704.8,417.6 706.6,415.3 708.3,413.0 710.1,410.7 711.9,408.5 713.7,406.3 715.5,404.1 717.3,401.9 719.2,399.8 721.0,397.7 722.9,395.7 724.8,393.6 726.7,391.6 728.6,389.6 730.5,387.7 732.4,385.8 734.4,383.9 736.3,382.0 738.3,380.2 740.3,378.4 742.2,376.6 744.2,374.8 746.2,373.1 748.2,371.4 750.2,369.7 752.2,368.1 754.3,366.4 756.3,364.8 758.3,363.3 760.4,361.7 762.4,360.2 764.5,358.6 766.5,357.1 768.6,355.6 770.6,354.2 772.7,352.7 774.8,351.2 776.8,349.8 778.9,348.3 781.0,346.9 783.1,345.4 785.1,344.0 787.2,342.6 790.3,340.5 793.5,338.5 796.6,336.6 799.7,334.8 802.9,333.0 806.0,331.3 809.1,329.8 812.2,328.3 815.3,326.8 818.5,325.5M1194.1,890.0 1197.4,889.3 1200.6,888.6 1203.9,887.7 1207.3,886.9 1210.6,885.9 1213.9,884.9 1217.3,883.9 1220.7,882.8 1224.1,881.6 1227.5,880.3 1231.0,879.0 1234.4,877.6 1236.8,876.7 1239.1,875.7 1241.4,874.6 1243.7,873.5 1246.1,872.4 1248.4,871.3 1250.7,870.1 1253.1,868.9 1255.4,867.6 1257.8,866.3 1260.2,864.9 1262.5,863.5 1264.9,862.1 1267.3,860.6 1269.6,859.0 1272.0,857.3 1274.4,855.6 1276.8,853.8 1279.1,851.9 1281.5,850.0 1283.9,848.0 1286.2,846.0 1288.6,844.0 1291.0,841.9 1293.4,839.8 1295.7,837.7 1298.1,835.6 1300.4,833.6 1302.8,831.5 1305.1,829.4 1307.5,827.3 1309.8,825.2 1312.1,823.1 1314.4,820.9 1316.7,818.7 1319.0,816.5 1321.3,814.3 1323.6,812.0 1325.8,809.6 1328.1,807.3 1330.3,804.9 1332.6,802.4 1334.8,799.9 1337.0,797.4 1339.1,794.8 1341.3,792.2 1343.4,789.5 1345.5,786.8 1347.6,784.1 1349.7,781.3 1351.8,778.4 1353.8,775.6 1355.8,772.6 1357.8,769.7 1359.8,766.7 1361.7,763.6 1363.6,760.5 1365.5,757.4 1367.3,754.3 1369.1,751.1 1370.9,747.8 1372.6,744.5 1374.3,741.2 1376.0,737.8 1377.6,734.4 1379.2,731.0 1380.8,727.5 1382.3,724.0 1383.8,720.5 1385.2,716.9 1386.6,713.3 1387.9,709.6 1389.2,705.9 1390.5,702.2 1391.7,698.5 1392.8,694.7 1393.9,690.9 1395.0,687.1 1396.0,683.2 1397.0,679.3 1397.9,675.4 1398.8,671.5 1399.6,667.5 1400.4,663.5 1401.1,659.5 1401.8,655.5 1402.4,651.4 1403.0,647.4 1403.6,643.3 1404.1,639.2 1404.6,635.1 1405.0,631.0 1405.3,626.8 1405.7,622.7 1405.9,618.5 1406.2,614.4 1406.4,610.2 1406.5,606.0 1406.6,601.8 1406.6,597.6 1406.6,593.5 1406.6,589.3 1406.4,585.1 1406.3,580.9 1406.1,576.7 1405.8,572.6 1405.5,568.4 1405.2,564.2 1404.8,560.1 1404.3,556.0 1403.8,551.8 1403.3,547.7 1402.7,543.6 1402.1,539.6 1401.4,535.5 1400.6,531.4 1399.9,527.4 1399.0,523.4 1398.1,519.4 1397.2,515.5 1396.3,511.5 1395.2,507.6 1394.2,503.7 1393.1,499.9 1391.9,496.0 1390.7,492.2 1389.5,488.4 1388.2,484.7 1386.9,481.0 1385.5,477.3 1384.1,473.7 1382.6,470.0 1381.1,466.5 1379.6,462.9 1378.1,459.4 1376.5,455.9 1374.8,452.5 1373.1,449.1 1371.4,445.7 1369.7,442.4 1367.9,439.1 1366.1,435.9 1364.3,432.7 1362.4,429.5 1360.6,426.4 1358.6,423.3 1356.7,420.2 1354.7,417.2 1352.7,414.3 1350.7,411.4 1348.7,408.5 1346.6,405.7 1344.6,402.9 1342.5,400.1 1340.4,397.4 1338.2,394.7 1336.1,392.1 1333.9,389.5 1331.7,387.0 1329.5,384.5 1327.3,382.1 1325.1,379.6 1322.9,377.3 1320.6,374.9 1318.4,372.7 1316.1,370.4 1313.8,368.2 1311.5,366.0 1309.2,363.9 1306.9,361.7 1304.6,359.7 1302.3,357.6 1300.0,355.5 1297.7,353.5 1295.3,351.5 1293.0,349.4 1290.7,347.4 1288.3,345.4 1286.0,343.4 1283.7,341.4 1281.3,339.5 1279.0,337.6 1276.6,335.7 1274.3,333.9 1271.9,332.2 1269.6,330.6 1267.3,329.0 1264.9,327.4 1262.6,325.9 1260.3,324.5 1257.9,323.1 1255.6,321.8 1253.3,320.5 1250.9,319.2 1248.6,318.0 1246.3,316.9 1244.0,315.7 1241.7,314.6 1239.4,313.6 1237.1,312.5 1233.7,311.1 1230.3,309.7 1226.9,308.3 1223.5,307.1 1220.1,305.9 1216.7,304.7 1213.4,303.7 1210.1,302.7 1206.8,301.7 1203.5,300.8 1200.2,300.0 1197.0,299.2 1193.7,298.5 1191.6,298.1M835.7,890.0 832.4,889.3 829.2,888.6 825.9,887.7 822.5,886.9 819.2,885.9 815.9,884.9 812.5,883.9 809.1,882.8 805.7,881.6 802.3,880.3 798.8,879.0 795.4,877.6 793.0,876.7 790.7,875.7 788.4,874.6 786.1,873.5 783.7,872.4 781.4,871.3 779.1,870.1 776.7,868.9 774.4,867.6 772.0,866.3 769.6,864.9 767.3,863.5 764.9,862.1 762.5,860.6 760.2,859.0 757.8,857.3 755.4,855.6 753.0,853.8 750.7,851.9 748.3,850.0 745.9,848.0 743.6,846.0 741.2,844.0 738.8,841.9 736.4,839.8 734.1,837.7 731.7,835.6 729.4,833.6 727.0,831.5 724.7,829.4 722.3,827.3 720.0,825.2 717.7,823.1 715.4,820.9 713.1,818.7 710.8,816.5 708.5,814.3 706.2,812.0 704.0,809.6 701.7,807.3 699.5,804.9 697.2,802.4 695.0,799.9 692.8,797.4 690.7,794.8 688.5,792.2 686.4,789.5 684.3,786.8 682.2,784.1 680.1,781.3 678.0,778.4 676.0,775.6 674.0,772.6 672.0,769.7 670.0,766.7 668.1,763.6 666.2,760.5 664.3,757.4 662.5,754.3 660.7,751.1 658.9,747.8 657.2,744.5 655.5,741.2 653.8,737.8 652.2,734.4 650.6,731.0 649.0,727.5 647.5,724.0 646.0,720.5 644.6,716.9 643.2,713.3 641.9,709.6 640.6,705.9 639.3,702.2 638.1,698.5 637.0,694.7 635.9,690.9 634.8,687.1 633.8,683.2 632.8,679.3 631.9,675.4 631.0,671.5 630.2,667.5 629.4,663.5 628.7,659.5 628.0,655.5 627.4,651.4 626.8,647.4 626.2,643.3 625.7,639.2 625.2,635.1 624.8,631.0 624.5,626.8 624.1,622.7 623.9,618.5 623.6,614.4 623.4,610.2 623.3,606.0 623.2,601.8 623.2,597.6 623.2,593.5 623.2,589.3 623.4,585.1 623.5,580.9 623.7,576.7 624.0,572.6 624.3,568.4 624.6,564.2 625.0,560.1 625.5,556.0 626.0,551.8 626.5,547.7 627.1,543.6 627.7,539.6 628.4,535.5 629.2,531.4 629.9,527.4 630.8,523.4 631.7,519.4 632.6,515.5 633.5,511.5 634.6,507.6 635.6,503.7 636.7,499.9 637.9,496.0 639.1,492.2 640.3,488.4 641.6,484.7 642.9,481.0 644.3,477.3 645.7,473.7 647.2,470.0 648.7,466.5 650.2,462.9 651.7,459.4 653.3,455.9 655.0,452.5 656.7,449.1 658.4,445.7 660.1,442.4 661.9,439.1 663.7,435.9 665.5,432.7 667.4,429.5 669.2,426.4 671.2,423.3 673.1,420.2 675.1,417.2 677.1,414.3 679.1,411.4 681.1,408.5 683.2,405.7 685.2,402.9 687.3,400.1 689.4,397.4 691.6,394.7 693.7,392.1 695.9,389.5 698.1,387.0 700.3,384.5 702.5,382.1 704.7,379.6 706.9,377.3 709.2,374.9 711.4,372.7 713.7,370.4 716.0,368.2 718.3,366.0 720.6,363.9 722.9,361.7 725.2,359.7 727.5,357.6 729.8,355.5 732.1,353.5 734.5,351.5 736.8,349.4 739.1,347.4 741.5,345.4 743.8,343.4 746.1,341.4 748.5,339.5 750.8,337.6 753.2,335.7 755.5,333.9 757.9,332.2 760.2,330.6 762.5,329.0 764.9,327.4 767.2,325.9 769.5,324.5 771.9,323.1 774.2,321.8 776.5,320.5 778.9,319.2 781.2,318.0 783.5,316.9 785.8,315.7 788.1,314.6 790.4,313.6 792.7,312.5 796.1,311.1 799.5,309.7 802.9,308.3 806.3,307.1 809.7,305.9 813.1,304.7 816.4,303.7 819.7,302.7 823.0,301.7 826.3,300.8 829.6,300.0 832.8,299.2 836.1,298.5 838.2,298.1M1137.1,913.0 1139.9,913.4 1142.7,913.8 1145.5,914.1 1148.3,914.4 1151.2,914.6 1154.1,914.8 1157.1,915.0 1160.1,915.1 1163.1,915.2 1166.1,915.2 1169.2,915.2 1172.4,915.1 1175.5,915.0 1178.7,914.9 1181.9,914.6 1185.2,914.4 1188.5,914.0 1191.9,913.7 1195.2,913.2 1198.6,912.7 1202.1,912.1 1205.6,911.5 1209.1,910.8 1212.7,910.0 1216.3,909.2 1219.9,908.3 1222.3,907.6 1224.8,907.0 1227.3,906.2 1229.8,905.5 1232.3,904.7 1234.8,903.9 1237.3,903.0 1239.9,902.1 1242.5,901.1 1245.0,900.2 1247.6,899.1 1250.2,898.1 1252.9,897.0 1255.5,895.8 1258.2,894.6 1260.8,893.4 1263.5,892.1 1266.2,890.8 1268.9,889.4 1271.6,888.0 1274.3,886.5 1277.1,885.0 1279.8,883.4 1282.6,881.8 1285.3,880.1 1288.1,878.4 1290.9,876.6 1293.7,874.8 1296.5,872.8 1299.3,870.9 1302.1,868.8 1304.9,866.7 1307.7,864.5 1310.6,862.2 1313.4,859.8 1316.2,857.3 1319.0,854.7 1321.9,851.9 1324.7,849.1 1327.5,846.1 1330.3,843.1 1333.2,840.1 1336.0,837.1 1338.8,834.0 1341.6,831.1 1344.3,828.1 1347.1,825.0 1349.9,822.0 1352.6,818.9 1355.3,815.7 1358.1,812.5 1360.7,809.2 1363.4,805.9 1366.1,802.5 1368.7,799.0 1371.3,795.5 1373.9,791.8 1376.4,788.2 1378.9,784.4 1381.4,780.6 1383.8,776.7 1386.3,772.7 1388.6,768.7 1390.9,764.6 1393.2,760.4 1395.5,756.2 1397.6,751.9 1399.8,747.5 1401.8,743.1 1403.9,738.6 1405.8,734.0 1407.7,729.4 1408.6,727.0 1409.6,724.7 1410.4,722.3 1411.3,720.0 1412.2,717.6 1413.0,715.2 1413.8,712.7 1414.7,710.3 1415.4,707.9 1416.2,705.4 1417.0,702.9 1417.7,700.4 1418.4,697.9 1419.1,695.4 1419.8,692.9 1420.4,690.3 1421.1,687.8 1421.7,685.2 1422.3,682.7 1422.9,680.1 1423.5,677.5 1424.0,674.9 1424.5,672.3 1425.0,669.6 1425.5,667.0 1426.0,664.4 1426.4,661.7 1426.9,659.1 1427.3,656.4 1427.7,653.7 1428.1,651.0 1428.4,648.3 1428.8,645.6 1429.1,642.9 1429.4,640.2 1429.7,637.5 1430.0,634.8 1430.2,632.0 1430.5,629.3 1430.7,626.6 1430.9,623.8 1431.0,621.1 1431.2,618.3 1431.3,615.6 1431.5,612.8 1431.6,610.1 1431.7,607.3 1431.7,604.5 1431.8,601.8 1431.8,599.0 1431.8,596.2 1431.8,593.5 1431.8,590.7 1431.7,587.9 1431.6,585.2 1431.6,582.4 1431.4,579.6 1431.3,576.9 1431.2,574.1 1431.0,571.3 1430.8,568.6 1430.6,565.8 1430.4,563.1 1430.1,560.4 1429.9,557.6 1429.6,554.9 1429.3,552.1 1429.0,549.4 1428.6,546.7 1428.2,544.0 1427.9,541.3 1427.5,538.6 1427.0,535.9 1426.6,533.2 1426.1,530.5 1425.7,527.9 1425.2,525.2 1424.6,522.5 1424.1,519.9 1423.6,517.3 1423.0,514.6 1422.4,512.0 1421.8,509.4 1421.2,506.8 1420.5,504.3 1419.8,501.7 1419.2,499.1 1418.5,496.6 1417.7,494.0 1417.0,491.5 1416.3,489.0 1415.5,486.5 1414.7,484.0 1413.9,481.5 1413.1,479.1 1412.2,476.6 1411.4,474.2 1410.5,471.8 1409.6,469.4 1408.7,467.0 1407.8,464.6 1406.9,462.2 1405.9,459.9 1405.0,457.5 1404.0,455.2 1403.0,452.9 1401.0,448.4 1398.9,443.9 1396.8,439.4 1394.6,435.1 1392.4,430.8 1390.2,426.5 1387.8,422.3 1385.5,418.2 1383.1,414.2 1380.7,410.2 1378.2,406.3 1375.7,402.5 1373.2,398.8 1370.7,395.1 1368.1,391.5 1365.5,387.9 1362.9,384.4 1360.2,381.0 1357.5,377.7 1354.8,374.4 1352.1,371.2 1349.4,368.0 1346.7,365.0 1343.9,361.9 1341.2,358.9 1338.4,355.9 1335.6,353.0 1332.9,350.0 1330.1,347.1 1327.3,344.2 1324.5,341.3 1321.7,338.4 1318.9,335.6 1316.1,333.0 1313.3,330.4 1310.5,328.0 1307.7,325.6 1304.9,323.4 1302.1,321.2 1299.3,319.1 1296.5,317.1 1293.8,315.1 1291.0,313.2 1288.3,311.4 1285.5,309.6 1282.8,307.9 1280.0,306.2 1277.3,304.6 1274.6,303.1 1271.9,301.6 1269.2,300.1 1266.5,298.7 1263.9,297.3 1261.2,296.0 1258.6,294.7 1255.9,293.5 1253.3,292.3 1250.7,291.2 1248.1,290.1 1245.6,289.0 1243.0,288.0 1240.4,287.0 1237.9,286.1 1235.4,285.2 1232.9,284.4 1230.4,283.5 1227.9,282.8 1225.5,282.0 1223.0,281.3 1220.6,280.6 1217.0,279.7 1213.4,278.8 1209.9,278.0 1206.3,277.2 1202.9,276.6 1199.4,276.0 1196.0,275.4 1192.7,274.9 1189.3,274.5 1186.0,274.2 1182.8,273.9 1179.5,273.6 1176.3,273.4 1173.2,273.3 1170.0,273.2 1167.0,273.1 1163.9,273.2 1160.9,273.2 1157.9,273.3 1154.9,273.4 1152.0,273.6 1149.1,273.8 1146.3,274.1 1143.4,274.4 1140.6,274.7 1137.9,275.1 1135.2,275.5M892.7,913.0 889.9,913.4 887.1,913.8 884.3,914.1 881.5,914.4 878.6,914.6 875.7,914.8 872.7,915.0 869.7,915.1 866.7,915.2 863.7,915.2 860.6,915.2 857.4,915.1 854.3,915.0 851.1,914.9 847.9,914.6 844.6,914.4 841.3,914.0 837.9,913.7 834.6,913.2 831.2,912.7 827.7,912.1 824.2,911.5 820.7,910.8 817.1,910.0 813.5,909.2 809.9,908.3 807.5,907.6 805.0,907.0 802.5,906.2 800.0,905.5 797.5,904.7 795.0,903.9 792.5,903.0 789.9,902.1 787.3,901.1 784.8,900.2 782.2,899.1 779.6,898.1 776.9,897.0 774.3,895.8 771.6,894.6 769.0,893.4 766.3,892.1 763.6,890.8 760.9,889.4 758.2,888.0 755.5,886.5 752.7,885.0 750.0,883.4 747.2,881.8 744.5,880.1 741.7,878.4 738.9,876.6 736.1,874.8 733.3,872.8 730.5,870.9 727.7,868.8 724.9,866.7 722.1,864.5 719.2,862.2 716.4,859.8 713.6,857.3 710.8,854.7 707.9,851.9 705.1,849.1 702.3,846.1 699.5,843.1 696.6,840.1 693.8,837.1 691.0,834.0 688.2,831.1 685.5,828.1 682.7,825.0 679.9,822.0 677.2,818.9 674.5,815.7 671.7,812.5 669.1,809.2 666.4,805.9 663.7,802.5 661.1,799.0 658.5,795.5 655.9,791.8 653.4,788.2 650.9,784.4 648.4,780.6 646.0,776.7 643.5,772.7 641.2,768.7 638.9,764.6 636.6,760.4 634.3,756.2 632.2,751.9 630.0,747.5 628.0,743.1 625.9,738.6 624.0,734.0 622.1,729.4 621.2,727.0 620.2,724.7 619.4,722.3 618.5,720.0 617.6,717.6 616.8,715.2 616.0,712.7 615.1,710.3 614.4,707.9 613.6,705.4 612.8,702.9 612.1,700.4 611.4,697.9 610.7,695.4 610.0,692.9 609.4,690.3 608.7,687.8 608.1,685.2 607.5,682.7 606.9,680.1 606.3,677.5 605.8,674.9 605.3,672.3 604.8,669.6 604.3,667.0 603.8,664.4 603.4,661.7 602.9,659.1 602.5,656.4 602.1,653.7 601.7,651.0 601.4,648.3 601.0,645.6 600.7,642.9 600.4,640.2 600.1,637.5 599.8,634.8 599.6,632.0 599.3,629.3 599.1,626.6 598.9,623.8 598.8,621.1 598.6,618.3 598.5,615.6 598.3,612.8 598.2,610.1 598.1,607.3 598.1,604.5 598.0,601.8 598.0,599.0 598.0,596.2 598.0,593.5 598.0,590.7 598.1,587.9 598.2,585.2 598.2,582.4 598.4,579.6 598.5,576.9 598.6,574.1 598.8,571.3 599.0,568.6 599.2,565.8 599.4,563.1 599.7,560.4 599.9,557.6 600.2,554.9 600.5,552.1 600.8,549.4 601.2,546.7 601.6,544.0 601.9,541.3 602.3,538.6 602.8,535.9 603.2,533.2 603.7,530.5 604.1,527.9 604.6,525.2 605.2,522.5 605.7,519.9 606.2,517.3 606.8,514.6 607.4,512.0 608.0,509.4 608.6,506.8 609.3,504.3 610.0,501.7 610.6,499.1 611.3,496.6 612.1,494.0 612.8,491.5 613.5,489.0 614.3,486.5 615.1,484.0 615.9,481.5 616.7,479.1 617.6,476.6 618.4,474.2 619.3,471.8 620.2,469.4 621.1,467.0 622.0,464.6 622.9,462.2 623.9,459.9 624.8,457.5 625.8,455.2 626.8,452.9 628.8,448.4 630.9,443.9 633.0,439.4 635.2,435.1 637.4,430.8 639.6,426.5 642.0,422.3 644.3,418.2 646.7,414.2 649.1,410.2 651.6,406.3 654.1,402.5 656.6,398.8 659.1,395.1 661.7,391.5 664.3,387.9 666.9,384.4 669.6,381.0 672.3,377.7 675.0,374.4 677.7,371.2 680.4,368.0 683.1,365.0 685.9,361.9 688.6,358.9 691.4,355.9 694.2,353.0 696.9,350.0 699.7,347.1 702.5,344.2 705.3,341.3 708.1,338.4 710.9,335.6 713.7,333.0 716.5,330.4 719.3,328.0 722.1,325.6 724.9,323.4 727.7,321.2 730.5,319.1 733.3,317.1 736.0,315.1 738.8,313.2 741.5,311.4 744.3,309.6 747.0,307.9 749.8,306.2 752.5,304.6 755.2,303.1 757.9,301.6 760.6,300.1 763.3,298.7 765.9,297.3 768.6,296.0 771.2,294.7 773.9,293.5 776.5,292.3 779.1,291.2 781.7,290.1 784.2,289.0 786.8,288.0 789.4,287.0 791.9,286.1 794.4,285.2 796.9,284.4 799.4,283.5 801.9,282.8 804.3,282.0 806.8,281.3 809.2,280.6 812.8,279.7 816.4,278.8 819.9,278.0 823.5,277.2 826.9,276.6 830.4,276.0 833.8,275.4 837.1,274.9 840.5,274.5 843.8,274.2 847.0,273.9 850.3,273.6 853.5,273.4 856.6,273.3 859.8,273.2 862.8,273.1 865.9,273.2 868.9,273.2 871.9,273.3 874.9,273.4 877.8,273.6 880.7,273.8 883.5,274.1 886.4,274.4 889.2,274.7 891.9,275.1 894.6,275.5M1089.7,919.1 1092.4,920.6 1095.0,922.0 1097.7,923.5 1100.5,924.9 1103.3,926.2 1106.2,927.5 1109.1,928.8 1112.1,930.1 1115.2,931.3 1118.3,932.5 1120.7,933.3 1123.1,934.1 1125.5,934.9 1128.0,935.7 1130.6,936.4 1133.1,937.1 1135.8,937.7 1138.4,938.4 1141.1,939.0 1143.9,939.5 1146.7,940.1 1149.5,940.5 1152.4,941.0 1155.3,941.4 1158.3,941.7 1161.4,942.0 1164.4,942.3 1167.6,942.5 1170.8,942.7 1174.0,942.8 1177.3,942.8 1180.7,942.8 1184.1,942.7 1187.6,942.6 1191.1,942.4 1194.7,942.1 1198.4,941.7 1202.1,941.3 1204.6,941.0 1207.1,940.6 1209.7,940.2 1212.3,939.8 1214.9,939.3 1217.6,938.8 1220.3,938.2 1223.0,937.6 1225.8,937.0 1228.5,936.3 1231.3,935.6 1234.2,934.8 1237.1,934.0 1240.0,933.1 1242.9,932.1 1245.9,931.1 1248.8,930.1 1251.9,929.0 1254.9,927.8 1258.0,926.6 1261.1,925.3 1264.3,924.0 1267.5,922.6 1270.7,921.1 1273.9,919.6 1277.2,917.9 1280.5,916.2 1283.8,914.5 1287.2,912.6 1290.6,910.7 1294.0,908.7 1297.4,906.6 1300.9,904.5 1304.4,902.2 1307.9,899.9 1311.5,897.4 1315.0,894.9 1318.6,892.3 1322.2,889.6 1325.9,886.7 1329.5,883.8 1333.1,880.8 1336.8,877.6 1340.5,874.3 1344.2,870.9 1346.0,869.2 1347.9,867.4 1349.7,865.6 1351.6,863.7 1353.4,861.8 1355.3,859.8 1357.1,857.8 1359.0,855.7 1360.8,853.5 1362.7,851.3 1364.5,849.0 1366.4,846.6 1368.2,844.3 1370.1,841.9 1371.9,839.5 1373.7,837.1 1375.6,834.8 1377.4,832.4 1379.2,830.1 1381.0,827.7 1382.8,825.4 1384.6,823.0 1386.4,820.6 1388.2,818.2 1390.0,815.7 1391.8,813.2 1393.5,810.7 1395.3,808.2 1397.0,805.6 1398.7,803.0 1400.5,800.3 1402.2,797.6 1403.9,794.9 1405.5,792.2 1407.2,789.4 1408.8,786.6 1410.5,783.7 1412.1,780.9 1413.7,777.9 1415.3,775.0 1416.8,772.0 1418.4,769.0 1419.9,765.9 1421.4,762.9 1422.9,759.7 1424.3,756.6 1425.8,753.4 1427.2,750.2 1428.6,747.0 1429.9,743.7 1431.3,740.4 1432.6,737.0 1433.8,733.7 1435.1,730.3 1436.3,726.8 1437.5,723.4 1438.6,719.9 1439.7,716.4 1440.8,712.9 1441.9,709.3 1442.9,705.7 1443.9,702.1 1444.8,698.4 1445.7,694.8 1446.6,691.1 1447.4,687.4 1448.2,683.6 1449.0,679.9 1449.7,676.1 1450.4,672.3 1451.1,668.5 1451.7,664.6 1452.3,660.8 1452.9,656.9 1453.4,653.0 1453.9,649.1 1454.3,645.2 1454.7,641.3 1455.1,637.3 1455.5,633.4 1455.8,629.4 1456.0,625.4 1456.3,621.5 1456.5,617.5 1456.7,613.5 1456.8,609.5 1456.9,605.5 1457.0,601.5 1457.0,597.5 1457.0,593.5 1456.9,589.5 1456.8,585.4 1456.7,581.4 1456.6,577.4 1456.4,573.4 1456.1,569.4 1455.9,565.5 1455.6,561.5 1455.2,557.5 1454.8,553.5 1454.4,549.6 1453.9,545.7 1453.4,541.7 1452.9,537.8 1452.3,533.9 1451.7,530.0 1451.1,526.2 1450.4,522.3 1449.7,518.5 1449.0,514.6 1448.2,510.8 1447.3,507.1 1446.5,503.3 1445.6,499.6 1444.7,495.8 1443.7,492.2 1442.7,488.5 1441.7,484.8 1440.7,481.2 1439.6,477.6 1438.4,474.1 1437.3,470.5 1436.1,467.0 1434.9,463.5 1433.7,460.1 1432.4,456.6 1431.1,453.2 1429.8,449.9 1428.5,446.5 1427.1,443.2 1425.7,440.0 1424.3,436.7 1422.8,433.5 1421.4,430.3 1419.9,427.2 1418.4,424.1 1416.8,421.0 1415.3,417.9 1413.7,414.9 1412.2,411.9 1410.6,409.0 1408.9,406.1 1407.3,403.2 1405.7,400.3 1404.0,397.5 1402.3,394.7 1400.6,392.0 1398.9,389.3 1397.2,386.6 1395.5,384.0 1393.8,381.3 1392.0,378.8 1390.3,376.2 1388.5,373.7 1386.7,371.2 1384.9,368.8 1383.1,366.4 1381.3,364.0 1379.5,361.6 1377.7,359.2 1375.9,356.9 1374.1,354.6 1372.3,352.3 1370.4,349.9 1368.6,347.6 1366.8,345.3 1364.9,343.0 1363.1,340.7 1361.3,338.4 1359.4,336.2 1357.6,334.0 1355.7,331.9 1353.9,329.8 1352.1,327.8 1350.2,325.9 1348.4,324.0 1346.5,322.2 1344.7,320.3 1342.8,318.6 1341.0,316.8 1339.2,315.1 1335.5,311.8 1331.9,308.6 1328.2,305.5 1324.6,302.6 1321.0,299.7 1317.4,297.0 1313.9,294.3 1310.3,291.7 1306.8,289.3 1303.3,286.9 1299.9,284.6 1296.4,282.4 1293.0,280.3 1289.6,278.3 1286.3,276.3 1282.9,274.4 1279.6,272.7 1276.3,270.9 1273.1,269.3 1269.9,267.7 1266.7,266.2 1263.5,264.8 1260.4,263.4 1257.3,262.1 1254.3,260.9 1251.2,259.7 1248.2,258.6 1245.3,257.5 1242.3,256.5 1239.4,255.6 1236.5,254.7 1233.7,253.8 1230.9,253.0 1228.1,252.3 1225.3,251.5 1222.6,250.9 1219.9,250.3 1217.2,249.7 1214.6,249.2 1212.0,248.7 1209.4,248.2 1206.8,247.8 1204.3,247.4 1201.8,247.1 1198.1,246.7 1194.5,246.3 1190.9,246.0 1187.3,245.8 1183.9,245.6 1180.5,245.5 1177.1,245.5 1173.8,245.5 1170.6,245.6 1167.4,245.8 1164.3,246.0 1161.2,246.2 1158.1,246.5 1155.2,246.9 1152.2,247.2 1149.3,247.7 1146.5,248.1 1143.7,248.7 1140.9,249.2 1138.2,249.8 1135.6,250.4 1132.9,251.1 1130.3,251.8 1127.8,252.5 1125.3,253.2 1122.8,254.0 1120.4,254.8 1118.0,255.7 1115.7,256.5 1112.6,257.7 1109.6,258.9 1106.6,260.2 1103.7,261.5 1100.9,262.9 1098.1,264.3 1095.4,265.7 1092.7,267.1 1090.1,268.6 1088.8,269.4M558.5,230.1 556.6,233.0 554.6,236.1 552.7,239.1 550.7,242.2 548.8,245.3M547.8,945.1 549.7,948.2 551.7,951.2 553.6,954.2 555.5,957.2M940.1,919.1 937.4,920.6 934.8,922.0 932.1,923.5 929.3,924.9 926.5,926.2 923.6,927.5 920.7,928.8 917.7,930.1 914.6,931.3 911.5,932.5 909.1,933.3 906.7,934.1 904.3,934.9 901.8,935.7 899.2,936.4 896.7,937.1 894.0,937.7 891.4,938.4 888.7,939.0 885.9,939.5 883.1,940.1 880.3,940.5 877.4,941.0 874.5,941.4 871.5,941.7 868.4,942.0 865.4,942.3 862.2,942.5 859.0,942.7 855.8,942.8 852.5,942.8 849.1,942.8 845.7,942.7 842.2,942.6 838.7,942.4 835.1,942.1 831.4,941.7 827.7,941.3 825.2,941.0 822.7,940.6 820.1,940.2 817.5,939.8 814.9,939.3 812.2,938.8 809.5,938.2 806.8,937.6 804.0,937.0 801.3,936.3 798.5,935.6 795.6,934.8 792.7,934.0 789.8,933.1 786.9,932.1 783.9,931.1 781.0,930.1 777.9,929.0 774.9,927.8 771.8,926.6 768.7,925.3 765.5,924.0 762.3,922.6 759.1,921.1 755.9,919.6 752.6,917.9 749.3,916.2 746.0,914.5 742.6,912.6 739.2,910.7 735.8,908.7 732.4,906.6 728.9,904.5 725.4,902.2 721.9,899.9 718.3,897.4 714.8,894.9 711.2,892.3 707.6,889.6 703.9,886.7 700.3,883.8 696.7,880.8 693.0,877.6 689.3,874.3 685.6,870.9 683.8,869.2 681.9,867.4 680.1,865.6 678.2,863.7 676.4,861.8 674.5,859.8 672.7,857.8 670.8,855.7 669.0,853.5 667.1,851.3 665.3,849.0 663.4,846.6 661.6,844.3 659.7,841.9 657.9,839.5 656.1,837.1 654.2,834.8 652.4,832.4 650.6,830.1 648.8,827.7 647.0,825.4 645.2,823.0 643.4,820.6 641.6,818.2 639.8,815.7 638.0,813.2 636.3,810.7 634.5,808.2 632.8,805.6 631.1,803.0 629.3,800.3 627.6,797.6 625.9,794.9 624.3,792.2 622.6,789.4 621.0,786.6 619.3,783.7 617.7,780.9 616.1,777.9 614.5,775.0 613.0,772.0 611.4,769.0 609.9,765.9 608.4,762.9 606.9,759.7 605.5,756.6 604.0,753.4 602.6,750.2 601.2,747.0 599.9,743.7 598.5,740.4 597.2,737.0 596.0,733.7 594.7,730.3 593.5,726.8 592.3,723.4 591.2,719.9 590.1,716.4 589.0,712.9 587.9,709.3 586.9,705.7 585.9,702.1 585.0,698.4 584.1,694.8 583.2,691.1 582.4,687.4 581.6,683.6 580.8,679.9 580.1,676.1 579.4,672.3 578.7,668.5 578.1,664.6 577.5,660.8 576.9,656.9 576.4,653.0 575.9,649.1 575.5,645.2 575.1,641.3 574.7,637.3 574.3,633.4 574.0,629.4 573.8,625.4 573.5,621.5 573.3,617.5 573.1,613.5 573.0,609.5 572.9,605.5 572.8,601.5 572.8,597.5 572.8,593.5 572.9,589.5 573.0,585.4 573.1,581.4 573.2,577.4 573.4,573.4 573.7,569.4 573.9,565.5 574.2,561.5 574.6,557.5 575.0,553.5 575.4,549.6 575.9,545.7 576.4,541.7 576.9,537.8 577.5,533.9 578.1,530.0 578.7,526.2 579.4,522.3 580.1,518.5 580.8,514.6 581.6,510.8 582.5,507.1 583.3,503.3 584.2,499.6 585.1,495.8 586.1,492.2 587.1,488.5 588.1,484.8 589.1,481.2 590.2,477.6 591.4,474.1 592.5,470.5 593.7,467.0 594.9,463.5 596.1,460.1 597.4,456.6 598.7,453.2 600.0,449.9 601.3,446.5 602.7,443.2 604.1,440.0 605.5,436.7 607.0,433.5 608.4,430.3 609.9,427.2 611.4,424.1 613.0,421.0 614.5,417.9 616.1,414.9 617.6,411.9 619.2,409.0 620.9,406.1 622.5,403.2 624.1,400.3 625.8,397.5 627.5,394.7 629.2,392.0 630.9,389.3 632.6,386.6 634.3,384.0 636.0,381.3 637.8,378.8 639.5,376.2 641.3,373.7 643.1,371.2 644.9,368.8 646.7,366.4 648.5,364.0 650.3,361.6 652.1,359.2 653.9,356.9 655.7,354.6 657.5,352.3 659.4,349.9 661.2,347.6 663.0,345.3 664.9,343.0 666.7,340.7 668.5,338.4 670.4,336.2 672.2,334.0 674.1,331.9 675.9,329.8 677.7,327.8 679.6,325.9 681.4,324.0 683.3,322.2 685.1,320.3 687.0,318.6 688.8,316.8 690.6,315.1 694.3,311.8 697.9,308.6 701.6,305.5 705.2,302.6 708.8,299.7 712.4,297.0 715.9,294.3 719.5,291.7 723.0,289.3 726.5,286.9 729.9,284.6 733.4,282.4 736.8,280.3 740.2,278.3 743.5,276.3 746.9,274.4 750.2,272.7 753.5,270.9 756.7,269.3 759.9,267.7 763.1,266.2 766.3,264.8 769.4,263.4 772.5,262.1 775.5,260.9 778.6,259.7 781.6,258.6 784.5,257.5 787.5,256.5 790.4,255.6 793.3,254.7 796.1,253.8 798.9,253.0 801.7,252.3 804.5,251.5 807.2,250.9 809.9,250.3 812.6,249.7 815.2,249.2 817.8,248.7 820.4,248.2 823.0,247.8 825.5,247.4 828.0,247.1 831.7,246.7 835.3,246.3 838.9,246.0 842.5,245.8 845.9,245.6 849.3,245.5 852.7,245.5 856.0,245.5 859.2,245.6 862.4,245.8 865.5,246.0 868.6,246.2 871.7,246.5 874.6,246.9 877.6,247.2 880.5,247.7 883.3,248.1 886.1,248.7 888.9,249.2 891.6,249.8 894.2,250.4 896.9,251.1 899.5,251.8 902.0,252.5 904.5,253.2 907.0,254.0 909.4,254.8 911.8,255.7 914.1,256.5 917.2,257.7 920.2,258.9 923.2,260.2 926.1,261.5 928.9,262.9 931.7,264.3 934.4,265.7 937.1,267.1 939.7,268.6 941.0,269.4M1471.3,230.1 1473.2,233.0 1475.2,236.1 1477.1,239.1 1479.1,242.2 1481.0,245.3 1483.0,248.4M1483.9,942.0 1482.0,945.1 1480.1,948.2 1478.1,951.2 1476.2,954.2 1474.3,957.2M1055.6,917.4 1057.1,919.4 1058.7,921.4 1060.3,923.3 1061.9,925.3 1063.6,927.3 1065.3,929.2 1067.0,931.2 1068.8,933.1 1070.6,935.0 1072.4,936.9 1074.3,938.8 1076.3,940.6 1078.2,942.5 1080.3,944.3 1082.4,946.1 1084.5,947.9 1086.7,949.7 1088.9,951.4 1091.2,953.1 1093.6,954.8 1096.0,956.5 1098.5,958.1 1099.7,958.9M1272.2,958.8 1276.6,956.7 1278.9,955.6 1281.1,954.5 1283.4,953.3 1285.8,952.1 1288.1,950.8 1290.5,949.6 1292.8,948.2 1295.2,946.9 1297.7,945.4 1300.1,944.0 1302.6,942.5 1305.1,940.9 1307.6,939.3 1310.1,937.7 1312.7,936.0 1315.3,934.3 1317.9,932.5 1320.5,930.7 1323.1,928.8 1325.8,926.8 1328.4,924.8 1331.1,922.8 1333.9,920.6 1336.6,918.5 1339.3,916.2 1342.1,913.9 1344.9,911.6 1347.7,909.2 1350.5,906.7 1353.3,904.1 1356.2,901.5 1359.0,898.8 1361.9,896.0 1364.8,893.2 1367.7,890.3 1370.6,887.3 1373.5,884.2 1376.4,881.1 1379.4,877.8 1382.3,874.5 1385.2,871.1 1388.1,867.6 1391.1,864.0 1394.0,860.2 1396.9,856.3 1399.9,852.2 1402.8,847.9 1405.7,843.4 1408.6,839.0 1411.5,834.6 1414.3,830.2 1417.2,825.8 1420.0,821.3 1422.8,816.8 1425.6,812.2 1428.3,807.5 1431.0,802.8 1433.7,797.9 1436.4,792.9 1439.0,787.9 1441.5,782.7 1444.0,777.5 1446.5,772.2 1448.9,766.7 1451.2,761.2 1453.5,755.6 1455.7,749.9 1457.9,744.1 1460.0,738.3 1461.9,732.3 1463.8,726.3 1465.7,720.2 1467.4,714.0 1469.0,707.7 1470.6,701.4 1472.0,695.0 1473.4,688.6 1474.6,682.0 1475.8,675.4 1476.8,668.8 1477.8,662.1 1478.7,655.4 1479.4,648.6 1480.1,641.8 1480.7,635.0 1481.2,628.1 1481.6,621.2 1481.9,614.3 1482.1,607.3 1482.2,600.4 1482.2,593.5 1482.1,586.5 1481.9,579.6 1481.6,572.6 1481.2,565.7 1480.7,558.8 1480.1,552.0 1479.4,545.1 1478.5,538.3 1477.6,531.5 1476.6,524.8 1475.5,518.1 1474.3,511.5 1473.0,504.9 1471.6,498.4 1470.1,491.9 1468.5,485.5 1466.9,479.2 1465.1,472.9 1463.3,466.7 1461.4,460.6 1459.4,454.6 1457.3,448.6 1455.2,442.8 1453.0,437.0 1450.7,431.3 1448.4,425.7 1446.0,420.2 1443.5,414.8 1441.0,409.4 1438.5,404.2 1435.9,399.0 1433.3,394.0 1430.6,389.0 1427.9,384.2 1425.1,379.4 1422.4,374.7 1419.6,370.1 1416.8,365.6 1413.9,361.2 1411.1,356.8 1408.2,352.4 1405.3,348.1 1402.4,343.7 1399.5,339.4 1396.6,335.2 1393.6,331.2 1390.7,327.3 1387.8,323.6 1384.8,320.0 1381.9,316.5 1379.0,313.1 1376.0,309.8 1373.1,306.6 1370.2,303.4 1367.3,300.4 1364.4,297.4 1361.5,294.5 1358.6,291.7 1355.8,288.9 1352.9,286.2 1350.1,283.6 1347.3,281.1 1344.5,278.6 1341.7,276.2 1338.9,273.8 1336.2,271.5 1333.5,269.3 1330.7,267.2 1328.0,265.0 1325.4,263.0 1322.7,261.0 1320.1,259.1 1317.5,257.2 1314.9,255.4 1312.3,253.6 1309.8,251.9 1307.2,250.2 1304.7,248.5 1302.2,247.0 1299.8,245.4 1297.3,243.9 1294.9,242.5 1292.5,241.1 1290.2,239.7 1287.8,238.4 1285.5,237.1 1283.2,235.9 1280.9,234.7 1278.6,233.5 1276.4,232.4 1271.9,230.2 1269.7,229.2M1099.4,229.1 1096.8,230.7 1094.4,232.3 1092.0,234.0 1089.6,235.7 1087.4,237.4 1085.1,239.2 1083.0,241.0 1080.8,242.7 1078.8,244.6 1076.8,246.4 1074.8,248.2 1072.9,250.1 1071.0,252.0 1069.2,253.9 1067.4,255.8 1065.6,257.7 1063.9,259.7 1062.2,261.6 1060.6,263.6 1058.9,265.6 1057.4,267.5 1055.8,269.5 1054.3,271.5M594.4,231.4 591.5,235.5 588.6,239.5 585.6,243.7 582.6,247.9 579.7,252.2 576.7,256.6 573.7,261.1 570.7,265.7 567.8,270.3 564.8,275.1 561.8,279.9 558.8,284.8 555.9,289.8 552.9,294.8 550.0,300.0 547.0,305.3M547.1,887.3 550.0,892.4 552.9,897.5 555.9,902.5 558.8,907.4 561.8,912.3 564.7,917.0 567.7,921.6 570.6,926.2 573.6,930.7 576.5,935.1 579.5,939.4 582.4,943.7 585.4,947.8 588.3,951.9 591.2,955.9M974.2,917.4 972.7,919.4 971.1,921.4 969.5,923.3 967.9,925.3 966.2,927.3 964.5,929.2 962.8,931.2 961.0,933.1 959.2,935.0 957.4,936.9 955.5,938.8 953.5,940.6 951.6,942.5 949.5,944.3 947.4,946.1 945.3,947.9 943.1,949.7 940.9,951.4 938.6,953.1 936.2,954.8 933.8,956.5 931.3,958.1 930.1,958.9M757.6,958.8 753.2,956.7 750.9,955.6 748.7,954.5 746.4,953.3 744.0,952.1 741.7,950.8 739.3,949.6 737.0,948.2 734.6,946.9 732.1,945.4 729.7,944.0 727.2,942.5 724.7,940.9 722.2,939.3 719.7,937.7 717.1,936.0 714.5,934.3 711.9,932.5 709.3,930.7 706.7,928.8 704.0,926.8 701.4,924.8 698.7,922.8 695.9,920.6 693.2,918.5 690.5,916.2 687.7,913.9 684.9,911.6 682.1,909.2 679.3,906.7 676.5,904.1 673.6,901.5 670.8,898.8 667.9,896.0 665.0,893.2 662.1,890.3 659.2,887.3 656.3,884.2 653.4,881.1 650.4,877.8 647.5,874.5 644.6,871.1 641.7,867.6 638.7,864.0 635.8,860.2 632.9,856.3 629.9,852.2 627.0,847.9 624.1,843.4 621.2,839.0 618.3,834.6 615.5,830.2 612.6,825.8 609.8,821.3 607.0,816.8 604.2,812.2 601.5,807.5 598.8,802.8 596.1,797.9 593.4,792.9 590.8,787.9 588.3,782.7 585.8,777.5 583.3,772.2 580.9,766.7 578.6,761.2 576.3,755.6 574.1,749.9 571.9,744.1 569.8,738.3 567.9,732.3 566.0,726.3 564.1,720.2 562.4,714.0 560.8,707.7 559.2,701.4 557.8,695.0 556.4,688.6 555.2,682.0 554.0,675.4 553.0,668.8 552.0,662.1 551.1,655.4 550.4,648.6 549.7,641.8 549.1,635.0 548.6,628.1 548.2,621.2 547.9,614.3 547.7,607.3 547.6,600.4 547.6,593.5 547.7,586.5 547.9,579.6 548.2,572.6 548.6,565.7 549.1,558.8 549.7,552.0 550.4,545.1 551.3,538.3 552.2,531.5 553.2,524.8 554.3,518.1 555.5,511.5 556.8,504.9 558.2,498.4 559.7,491.9 561.3,485.5 562.9,479.2 564.7,472.9 566.5,466.7 568.4,460.6 570.4,454.6 572.5,448.6 574.6,442.8 576.8,437.0 579.1,431.3 581.4,425.7 583.8,420.2 586.3,414.8 588.8,409.4 591.3,404.2 593.9,399.0 596.5,394.0 599.2,389.0 601.9,384.2 604.7,379.4 607.4,374.7 610.2,370.1 613.0,365.6 615.9,361.2 618.7,356.8 621.6,352.4 624.5,348.1 627.4,343.7 630.3,339.4 633.2,335.2 636.2,331.2 639.1,327.3 642.0,323.6 645.0,320.0 647.9,316.5 650.8,313.1 653.8,309.8 656.7,306.6 659.6,303.4 662.5,300.4 665.4,297.4 668.3,294.5 671.2,291.7 674.0,288.9 676.9,286.2 679.7,283.6 682.5,281.1 685.3,278.6 688.1,276.2 690.9,273.8 693.6,271.5 696.3,269.3 699.1,267.2 701.8,265.0 704.4,263.0 707.1,261.0 709.7,259.1 712.3,257.2 714.9,255.4 717.5,253.6 720.0,251.9 722.6,250.2 725.1,248.5 727.6,247.0 730.0,245.4 732.5,243.9 734.9,242.5 737.3,241.1 739.6,239.7 742.0,238.4 744.3,237.1 746.6,235.9 748.9,234.7 751.2,233.5 753.4,232.4 757.9,230.2 760.1,229.2M930.4,229.1 933.0,230.7 935.4,232.3 937.8,234.0 940.2,235.7 942.4,237.4 944.7,239.2 946.8,241.0 949.0,242.7 951.0,244.6 953.0,246.4 955.0,248.2 956.9,250.1 958.8,252.0 960.6,253.9 962.4,255.8 964.2,257.7 965.9,259.7 967.6,261.6 969.2,263.6 970.9,265.6 972.4,267.5 974.0,269.5 975.5,271.5M1435.4,231.4 1438.3,235.5 1441.2,239.5 1444.2,243.7 1447.2,247.9 1450.1,252.2 1453.1,256.6 1456.1,261.1 1459.1,265.7 1462.0,270.3 1465.0,275.1 1468.0,279.9 1471.0,284.8 1473.9,289.8 1476.9,294.8 1479.8,300.0 1482.8,305.3M1482.7,887.3 1479.8,892.4 1476.9,897.5 1473.9,902.5 1471.0,907.4 1468.0,912.3 1465.1,917.0 1462.1,921.6 1459.2,926.2 1456.2,930.7 1453.3,935.1 1450.3,939.4 1447.4,943.7 1444.4,947.8 1441.5,951.9 1438.6,955.9M1026.6,904.8 1027.3,907.6 1028.0,910.4 1028.8,913.1 1029.5,915.9 1030.2,918.6 1031.0,921.4 1031.8,924.2 1032.6,926.9 1033.4,929.7 1034.2,932.4 1035.1,935.2 1035.9,937.9 1036.8,940.6 1037.7,943.4 1038.6,946.1 1039.5,948.8 1040.5,951.6 1041.5,954.3 1042.5,957.0 1043.1,958.6M1344.8,957.0 1352.3,950.6 1360.0,943.6 1367.9,936.1 1376.0,928.1 1384.2,919.5 1392.5,910.3 1400.9,900.4 1409.4,889.8 1417.9,878.5 1426.5,866.4 1435.0,853.1 1443.4,838.3 1451.6,823.4 1459.6,808.2 1467.2,792.1 1474.5,775.2 1481.2,757.4M1478.5,429.5 1471.6,411.8 1464.3,394.8 1456.5,378.8 1448.5,363.5 1440.2,348.7 1431.8,334.2 1423.2,321.0 1414.7,308.9 1406.1,297.7 1397.6,287.1 1389.1,277.3 1380.8,268.1 1372.6,259.5 1364.6,251.5 1356.8,244.1 1349.1,237.1 1341.6,230.7M1042.5,229.2 1041.5,231.9 1040.5,234.7 1039.5,237.4 1038.6,240.1 1037.6,242.8 1036.7,245.6 1035.9,248.3 1035.0,251.1 1034.2,253.8 1033.3,256.6 1032.5,259.3 1031.7,262.1 1031.0,264.8 1030.2,267.6 1029.5,270.3 1028.7,273.1 1028.0,275.8 1027.3,278.6 1026.6,281.4 1026.3,282.5M632.3,236.5 624.1,246.1 615.7,256.4 607.3,267.4 598.7,279.0 590.2,291.4 581.6,304.5 573.0,318.5 564.6,333.5 556.3,349.8 548.2,366.5M553.3,837.2 561.6,853.8 569.9,868.9 578.4,882.9 587.0,896.0 595.5,908.4 604.0,920.1 612.4,931.0 620.8,941.3 629.0,951.0M1003.2,904.8 1002.5,907.6 1001.8,910.4 1001.0,913.1 1000.3,915.9 999.6,918.6 998.8,921.4 998.0,924.2 997.2,926.9 996.4,929.7 995.6,932.4 994.7,935.2 993.9,937.9 993.0,940.6 992.1,943.4 991.2,946.1 990.3,948.8 989.3,951.6 988.3,954.3 987.3,957.0 986.7,958.6M685.0,957.0 677.5,950.6 669.8,943.6 661.9,936.1 653.8,928.1 645.6,919.5 637.3,910.3 628.9,900.4 620.4,889.8 611.9,878.5 603.3,866.4 594.8,853.1 586.4,838.3 578.2,823.4 570.2,808.2 562.6,792.1 555.3,775.2 548.6,757.4M551.3,429.5 558.2,411.8 565.5,394.8 573.3,378.8 581.3,363.5 589.6,348.7 598.0,334.2 606.6,321.0 615.1,308.9 623.7,297.7 632.2,287.1 640.7,277.3 649.0,268.1 657.2,259.5 665.2,251.5 673.0,244.1 680.7,237.1 688.2,230.7M987.3,229.2 988.3,231.9 989.3,234.7 990.3,237.4 991.2,240.1 992.2,242.8 993.1,245.6 993.9,248.3 994.8,251.1 995.6,253.8 996.5,256.6 997.3,259.3 998.1,262.1 998.8,264.8 999.6,267.6 1000.3,270.3 1001.1,273.1 1001.8,275.8 1002.5,278.6 1003.2,281.4 1003.5,282.5M1397.5,236.5 1405.7,246.1 1414.1,256.4 1422.5,267.4 1431.1,279.0 1439.6,291.4 1448.2,304.5 1456.8,318.5 1465.2,333.5 1473.5,349.8 1481.6,366.5M1484.5,820.5 1476.5,837.2 1468.2,853.8 1459.9,868.9 1451.4,882.9 1442.8,896.0 1434.3,908.4 1425.8,920.1 1417.4,931.0 1409.0,941.3 1400.8,951.0" stroke="#42d4cc" stroke-width="1.0" stroke-opacity="1.0" fill="none"/><path d="M680.6,235.6 672.8,243.7 665.6,251.7 658.8,259.4 652.5,267.0 646.7,274.3 641.2,281.5 636.1,288.5 631.4,295.2 627.0,301.8 622.9,308.1 619.1,314.3 615.6,320.3 612.3,326.2 609.2,332.0 606.4,337.7 603.7,343.4M717.0,569.2 719.7,569.5 722.5,569.9 725.3,570.2 728.0,570.5 730.8,570.8 733.6,571.1 736.4,571.4 739.1,571.7 741.9,572.0 744.7,572.2 747.5,572.5 750.2,572.7 753.0,573.0 755.8,573.2 758.6,573.4 761.3,573.7 764.1,573.9 766.9,574.1 769.7,574.3 772.5,574.5 775.2,574.7 778.0,574.9 780.8,575.1 783.6,575.3 786.4,575.4 789.2,575.6 791.9,575.8 794.7,575.9 797.5,576.1 800.3,576.2 803.1,576.4 805.9,576.5 808.6,576.7 811.4,576.8 814.2,577.0 817.0,577.1 819.8,577.2 822.6,577.3 825.4,577.5 828.2,577.6 831.0,577.7 833.7,577.8 836.5,577.9 839.3,578.0 842.1,578.1 844.9,578.2 847.7,578.3 850.5,578.4 853.3,578.5 856.1,578.6 858.9,578.7 861.7,578.8 864.5,578.9 867.2,579.0 870.0,579.1 872.8,579.1 875.6,579.2 878.4,579.3 881.2,579.4 884.0,579.4 886.8,579.5 889.6,579.6 892.4,579.6 895.2,579.7 898.0,579.7 900.8,579.8 903.6,579.9 906.4,579.9 909.2,580.0 912.0,580.0 914.8,580.1 917.6,580.1 920.4,580.2 923.2,580.2 926.0,580.3 928.8,580.3 931.6,580.3 934.4,580.4 937.2,580.4 940.0,580.5 942.8,580.5 945.6,580.5 948.3,580.5 951.1,580.6 953.9,580.6 956.8,580.6 959.6,580.7 962.4,580.7 965.2,580.7 968.0,580.7 970.8,580.8 973.6,580.8 976.4,580.8 979.2,580.8 982.0,580.8 984.8,580.8 987.6,580.8 990.5,580.9 993.3,580.9 996.1,580.9 999.0,580.9 1001.9,580.9 1004.8,580.9 1007.7,580.9 1010.7,580.9 1013.7,580.9 1016.7,580.9 1019.7,580.9 1022.7,580.9 1025.6,580.9 1028.5,580.9 1031.4,580.9 1034.2,580.9 1037.1,580.9 1039.9,580.9 1042.7,580.8 1045.6,580.8 1048.4,580.8 1051.2,580.8 1054.0,580.8 1056.8,580.8 1059.6,580.7 1062.4,580.7 1065.2,580.7 1068.0,580.7 1070.8,580.7 1073.6,580.6 1076.4,580.6 1079.2,580.6 1082.0,580.5 1084.8,580.5 1087.6,580.5 1090.4,580.4 1093.2,580.4 1096.0,580.4 1098.8,580.3 1101.6,580.3 1104.4,580.2 1107.2,580.2 1110.0,580.2 1112.8,580.1 1115.6,580.1 1118.4,580.0 1121.2,580.0 1124.0,579.9 1126.8,579.8 1129.6,579.8 1132.4,579.7 1135.2,579.7 1138.0,579.6 1140.8,579.5 1143.6,579.5 1146.3,579.4 1149.1,579.3 1151.9,579.3 1154.7,579.2 1157.5,579.1 1160.3,579.0 1163.1,579.0 1165.9,578.9 1168.7,578.8 1171.5,578.7 1174.3,578.6 1177.1,578.5 1179.9,578.4 1182.7,578.3 1185.5,578.2 1188.2,578.1 1191.0,578.0 1193.8,577.9 1196.6,577.8 1199.4,577.7 1202.2,577.6 1205.0,577.4 1207.8,577.3 1210.6,577.2 1213.3,577.1 1216.1,576.9 1218.9,576.8 1221.7,576.7 1224.5,576.5 1227.3,576.4 1230.1,576.2 1232.9,576.1 1235.6,575.9 1238.4,575.7 1241.2,575.6 1244.0,575.4 1246.8,575.2 1249.6,575.0 1252.3,574.9 1255.1,574.7 1257.9,574.5 1260.7,574.3 1263.5,574.1 1266.2,573.8 1269.0,573.6 1271.8,573.4 1274.6,573.2 1277.3,572.9 1280.1,572.7 1282.9,572.4 1285.7,572.2 1288.5,571.9 1291.2,571.6 1294.0,571.4 1296.8,571.1 1299.5,570.8 1302.3,570.5 1305.1,570.1 1307.9,569.8 1310.6,569.5 1313.4,569.1M1423.4,337.7 1420.6,332.0 1417.5,326.2 1414.2,320.3 1410.7,314.3 1406.9,308.1 1402.8,301.8 1398.4,295.2 1393.7,288.5 1388.6,281.5 1383.1,274.3 1377.3,267.0 1371.0,259.4 1364.2,251.7 1357.0,243.7 1349.2,235.6M1400.8,952.8 1408.2,945.2 1415.2,937.8 1421.8,930.6 1427.9,923.6 1433.7,916.9 1439.2,910.3 1444.4,904.0 1449.3,897.8 1453.9,891.8 1458.3,886.0 1462.5,880.4 1466.4,875.0 1470.2,869.7 1473.7,864.6M559.6,869.7 563.4,875.0 567.3,880.4 571.5,886.0 575.9,891.8 580.5,897.8 585.4,904.0 590.6,910.3 596.1,916.9 601.9,923.6 608.0,930.6 614.6,937.8 621.6,945.2 629.0,952.8M677.4,952.1 669.6,943.9 662.3,936.0 655.5,928.2 649.2,920.6 643.3,913.2 637.9,906.0 632.8,899.1 628.1,892.3 623.7,885.7 619.6,879.4 615.8,873.2 612.3,867.1 609.0,861.2 606.0,855.4 603.1,849.5 600.5,843.8M716.6,617.7 719.4,617.4 722.2,617.0 724.9,616.7 727.7,616.4 730.5,616.1 733.3,615.8 736.1,615.5 738.8,615.2 741.6,615.0 744.4,614.7 747.2,614.4 750.0,614.2 752.8,613.9 755.5,613.7 758.3,613.5 761.1,613.2 763.9,613.0 766.7,612.8 769.5,612.6 772.3,612.4 775.0,612.2 777.8,612.0 780.6,611.8 783.4,611.7 786.2,611.5 789.0,611.3 791.8,611.1 794.6,611.0 797.3,610.8 800.1,610.7 802.9,610.5 805.7,610.4 808.5,610.2 811.3,610.1 814.1,610.0 816.9,609.8 819.7,609.7 822.5,609.6 825.3,609.5 828.0,609.3 830.8,609.2 833.6,609.1 836.4,609.0 839.2,608.9 842.0,608.8 844.8,608.7 847.6,608.6 850.4,608.5 853.2,608.4 856.0,608.3 858.8,608.2 861.6,608.1 864.4,608.0 867.2,607.9 870.0,607.9 872.8,607.8 875.5,607.7 878.3,607.6 881.1,607.6 883.9,607.5 886.7,607.4 889.5,607.4 892.3,607.3 895.1,607.2 897.9,607.2 900.7,607.1 903.5,607.1 906.3,607.0 909.1,607.0 911.9,606.9 914.7,606.8 917.5,606.8 920.3,606.8 923.1,606.7 925.9,606.7 928.7,606.6 931.5,606.6 934.3,606.5 937.1,606.5 939.9,606.5 942.7,606.4 945.5,606.4 948.3,606.4 951.1,606.3 953.9,606.3 956.7,606.3 959.5,606.3 962.3,606.2 965.1,606.2 967.9,606.2 970.7,606.2 973.5,606.1 976.3,606.1 979.1,606.1 981.9,606.1 984.8,606.1 987.6,606.1 990.4,606.1 993.2,606.0 996.1,606.0 998.9,606.0 1001.8,606.0 1004.7,606.0 1007.7,606.0 1010.7,606.0 1013.7,606.0 1016.7,606.0 1019.7,606.0 1022.7,606.0 1025.6,606.0 1028.6,606.0 1031.4,606.0 1034.3,606.0 1037.1,606.1 1040.0,606.1 1042.8,606.1 1045.6,606.1 1048.4,606.1 1051.2,606.1 1054.0,606.1 1056.9,606.2 1059.7,606.2 1062.5,606.2 1065.3,606.2 1068.1,606.2 1070.9,606.3 1073.7,606.3 1076.5,606.3 1079.3,606.3 1082.1,606.4 1084.9,606.4 1087.7,606.4 1090.5,606.5 1093.3,606.5 1096.1,606.6 1098.9,606.6 1101.7,606.6 1104.5,606.7 1107.3,606.7 1110.1,606.8 1112.9,606.8 1115.7,606.9 1118.5,606.9 1121.3,607.0 1124.0,607.0 1126.8,607.1 1129.6,607.1 1132.4,607.2 1135.2,607.2 1138.0,607.3 1140.8,607.4 1143.6,607.4 1146.4,607.5 1149.2,607.6 1152.0,607.7 1154.8,607.7 1157.6,607.8 1160.4,607.9 1163.2,608.0 1166.0,608.0 1168.8,608.1 1171.6,608.2 1174.4,608.3 1177.2,608.4 1180.0,608.5 1182.8,608.6 1185.6,608.7 1188.3,608.8 1191.1,608.9 1193.9,609.0 1196.7,609.1 1199.5,609.2 1202.3,609.4 1205.1,609.5 1207.9,609.6 1210.7,609.7 1213.5,609.9 1216.3,610.0 1219.1,610.1 1221.9,610.3 1224.6,610.4 1227.4,610.6 1230.2,610.7 1233.0,610.9 1235.8,611.0 1238.6,611.2 1241.4,611.3 1244.2,611.5 1247.0,611.7 1249.7,611.9 1252.5,612.1 1255.3,612.3 1258.1,612.5 1260.9,612.7 1263.7,612.9 1266.5,613.1 1269.2,613.3 1272.0,613.5 1274.8,613.7 1277.6,614.0 1280.4,614.2 1283.2,614.5 1285.9,614.7 1288.7,615.0 1291.5,615.3 1294.3,615.6 1297.1,615.9 1299.9,616.2 1302.6,616.5 1305.4,616.8 1308.2,617.1 1311.0,617.4 1313.7,617.8M1426.7,849.5 1423.8,855.4 1420.8,861.2 1417.5,867.1 1414.0,873.2 1410.2,879.4 1406.1,885.7 1401.7,892.3 1397.0,899.1 1391.9,906.0 1386.5,913.2 1380.6,920.6 1374.3,928.2 1367.5,936.0 1360.2,943.9 1352.4,952.1M1397.5,234.7 1404.9,242.3 1411.9,249.7 1418.5,256.8 1424.7,263.8 1430.5,270.5 1436.0,277.1 1441.2,283.4 1446.2,289.6 1450.8,295.5 1455.2,301.3 1459.4,306.9 1463.4,312.3 1467.2,317.6 1470.8,322.7M566.4,312.3 570.4,306.9 574.6,301.3 579.0,295.5 583.6,289.6 588.6,283.4 593.8,277.1 599.3,270.5 605.1,263.8 611.3,256.8 617.9,249.7 624.9,242.3 632.3,234.7M733.9,229.1 731.0,231.9 728.1,234.7 725.3,237.4 722.5,240.2 719.9,242.9 717.2,245.7 714.7,248.4 712.2,251.1 709.8,253.8 707.5,256.4 705.2,259.1 703.0,261.7 700.8,264.3 698.7,266.9 696.7,269.5 694.7,272.1 692.8,274.6 690.9,277.1 689.1,279.6 687.3,282.1 685.6,284.6 683.9,287.0 682.3,289.4 680.7,291.8 679.1,294.2 677.7,296.5 676.2,298.8 674.8,301.2 673.4,303.4 672.1,305.7 670.8,307.9 669.6,310.2 668.4,312.4 666.1,316.7 663.9,321.0 661.9,325.2 660.0,329.5 658.2,333.7 656.6,338.0 655.0,342.2 653.6,346.2 652.2,350.2 651.0,353.9 649.8,357.5 648.8,361.0 647.8,364.3M722.3,520.5 724.9,521.5 727.4,522.5 730.0,523.5 732.6,524.4 735.1,525.3 737.7,526.2 740.3,527.1 742.9,527.9 745.5,528.7 748.1,529.5 750.7,530.3 753.3,531.0 756.0,531.7 758.6,532.4 761.2,533.1 763.9,533.8 766.5,534.5 769.2,535.1 771.8,535.7 774.5,536.3 777.1,536.9 779.8,537.5 782.4,538.0 785.1,538.6 787.8,539.1 790.5,539.6 793.1,540.1 795.8,540.6 798.5,541.1 801.2,541.5 803.9,542.0 806.6,542.4 809.3,542.9 812.0,543.3 814.7,543.7 817.4,544.1 820.1,544.5 822.8,544.9 825.5,545.2 828.2,545.6 830.9,546.0 833.6,546.3 836.3,546.6 839.0,547.0 841.7,547.3 844.5,547.6 847.2,547.9 849.9,548.2 852.6,548.5 855.4,548.7 858.1,549.0 860.8,549.3 863.5,549.5 866.3,549.8 869.0,550.0 871.7,550.3 874.5,550.5 877.2,550.7 879.9,551.0 882.7,551.2 885.4,551.4 888.1,551.6 890.9,551.8 893.6,552.0 896.4,552.1 899.1,552.3 901.8,552.5 904.6,552.7 907.3,552.8 910.1,553.0 912.8,553.1 915.6,553.3 918.3,553.4 921.1,553.6 923.8,553.7 926.5,553.8 929.3,554.0 932.0,554.1 934.8,554.2 937.5,554.3 940.3,554.4 943.0,554.5 945.8,554.6 948.6,554.7 951.3,554.8 954.1,554.9 956.8,555.0 959.6,555.1 962.3,555.1 965.1,555.2 967.8,555.3 970.6,555.3 973.4,555.4 976.1,555.4 978.9,555.5 981.7,555.5 984.4,555.6 987.2,555.6 990.0,555.7 992.8,555.7 995.6,555.7 998.4,555.7 1001.3,555.8 1004.2,555.8 1007.1,555.8 1010.1,555.8 1013.1,555.8 1016.1,555.8 1019.1,555.8 1022.1,555.8 1025.1,555.8 1028.0,555.8 1030.8,555.7 1033.6,555.7 1036.5,555.7 1039.3,555.7 1042.0,555.6 1044.8,555.6 1047.6,555.5 1050.4,555.5 1053.1,555.5 1055.9,555.4 1058.7,555.3 1061.4,555.3 1064.2,555.2 1066.9,555.1 1069.7,555.1 1072.4,555.0 1075.2,554.9 1077.9,554.8 1080.7,554.7 1083.5,554.6 1086.2,554.6 1089.0,554.4 1091.7,554.3 1094.5,554.2 1097.2,554.1 1100.0,554.0 1102.7,553.9 1105.4,553.7 1108.2,553.6 1110.9,553.5 1113.7,553.3 1116.4,553.2 1119.2,553.0 1121.9,552.9 1124.7,552.7 1127.4,552.5 1130.2,552.4 1132.9,552.2 1135.6,552.0 1138.4,551.8 1141.1,551.6 1143.9,551.4 1146.6,551.2 1149.3,551.0 1152.1,550.8 1154.8,550.6 1157.5,550.3 1160.3,550.1 1163.0,549.8 1165.7,549.6 1168.4,549.3 1171.2,549.1 1173.9,548.8 1176.6,548.5 1179.4,548.2 1182.1,547.9 1184.8,547.6 1187.5,547.3 1190.2,547.0 1192.9,546.7 1195.7,546.4 1198.4,546.0 1201.1,545.7 1203.8,545.3 1206.5,544.9 1209.2,544.6 1211.9,544.2 1214.6,543.8 1217.3,543.4 1220.0,543.0 1222.7,542.5 1225.4,542.1 1228.1,541.6 1230.8,541.2 1233.4,540.7 1236.1,540.2 1238.8,539.7 1241.5,539.2 1244.2,538.7 1246.8,538.1 1249.5,537.6 1252.2,537.0 1254.8,536.4 1257.5,535.8 1260.1,535.2 1262.8,534.6 1265.4,533.9 1268.0,533.3 1270.7,532.6 1273.3,531.9 1275.9,531.2 1278.6,530.4 1281.2,529.7 1283.8,528.9 1286.4,528.1 1289.0,527.2 1291.6,526.4 1294.2,525.5 1296.7,524.6 1299.3,523.7 1301.9,522.7 1304.4,521.7 1307.0,520.7 1308.0,520.3M1381.5,362.7 1380.5,359.2 1379.4,355.7 1378.2,352.1 1376.9,348.2 1375.5,344.2 1374.0,340.1 1372.4,335.8 1370.7,331.6 1368.9,327.4 1366.9,323.1 1364.8,318.9 1362.6,314.5 1360.2,310.2 1359.0,307.9 1357.7,305.7 1356.4,303.4 1355.0,301.2 1353.6,298.8 1352.1,296.5 1350.7,294.2 1349.1,291.8 1347.5,289.4 1345.9,287.0 1344.2,284.6 1342.5,282.1 1340.7,279.6 1338.9,277.1 1337.0,274.6 1335.1,272.1 1333.1,269.5 1331.1,266.9 1329.0,264.3 1326.8,261.7 1324.6,259.1 1322.3,256.4 1320.0,253.8 1317.6,251.1 1315.1,248.4 1312.6,245.7 1309.9,242.9 1307.3,240.2 1304.5,237.4 1301.7,234.7 1298.8,231.9 1295.9,229.1M1448.7,958.9 1451.1,956.7 1453.5,954.4 1455.8,952.3 1458.1,950.1 1460.4,947.9 1462.6,945.8 1464.8,943.7 1466.9,941.6 1469.1,939.6 1471.1,937.5 1473.2,935.5 1475.2,933.5 1477.2,931.6 1479.2,929.6 1481.1,927.7 1483.0,925.8M548.7,927.7 550.6,929.6 552.6,931.6 554.6,933.5 556.6,935.5 558.7,937.5 560.7,939.6 562.9,941.6 565.0,943.7 567.2,945.8 569.4,947.9 571.7,950.1 574.0,952.3 576.3,954.4 578.7,956.7 581.1,958.9M731.2,958.8 728.2,956.0 725.3,953.2 722.4,950.4 719.6,947.7 716.9,944.9 714.3,942.2 711.7,939.5 709.2,936.8 706.8,934.1 704.5,931.4 702.2,928.7 699.9,926.1 697.7,923.5 695.6,920.9 693.6,918.3 691.6,915.7 689.6,913.2 687.7,910.6 685.9,908.1 684.1,905.6 682.4,903.2 680.7,900.7 679.0,898.3 677.4,895.9 675.9,893.6 674.4,891.2 673.0,888.9 671.5,886.6 670.2,884.3 668.8,882.0 667.6,879.8 666.3,877.5 665.1,875.3 662.8,871.0 660.6,866.6 658.6,862.4 656.7,858.1 654.9,853.8 653.3,849.4 651.7,845.1 650.3,840.9 648.9,836.9 647.7,833.1 646.5,829.5 645.5,826.0 644.5,822.6M719.5,667.1 722.1,666.0 724.7,665.0 727.3,664.0 729.9,663.1 732.5,662.1 735.1,661.2 737.7,660.4 740.3,659.5 742.9,658.7 745.6,657.9 748.2,657.1 750.9,656.4 753.5,655.6 756.2,654.9 758.8,654.2 761.5,653.5 764.1,652.9 766.8,652.2 769.5,651.6 772.1,651.0 774.8,650.4 777.5,649.8 780.2,649.2 782.9,648.7 785.6,648.1 788.2,647.6 790.9,647.1 793.6,646.6 796.3,646.1 799.0,645.7 801.7,645.2 804.4,644.7 807.1,644.3 809.9,643.9 812.6,643.5 815.3,643.1 818.0,642.7 820.7,642.3 823.4,641.9 826.1,641.5 828.9,641.2 831.6,640.8 834.3,640.5 837.0,640.2 839.8,639.8 842.5,639.5 845.2,639.2 847.9,638.9 850.7,638.6 853.4,638.3 856.1,638.1 858.9,637.8 861.6,637.5 864.3,637.3 867.1,637.0 869.8,636.8 872.5,636.6 875.3,636.3 878.0,636.1 880.8,635.9 883.5,635.7 886.2,635.5 889.0,635.3 891.7,635.1 894.5,634.9 897.2,634.7 900.0,634.5 902.7,634.3 905.5,634.2 908.2,634.0 910.9,633.9 913.7,633.7 916.4,633.6 919.2,633.4 921.9,633.3 924.7,633.2 927.4,633.0 930.2,632.9 932.9,632.8 935.7,632.7 938.4,632.6 941.2,632.4 943.9,632.3 946.7,632.3 949.5,632.2 952.2,632.1 955.0,632.0 957.7,631.9 960.5,631.8 963.2,631.8 966.0,631.7 968.8,631.6 971.5,631.6 974.3,631.5 977.0,631.5 979.8,631.4 982.6,631.4 985.4,631.3 988.1,631.3 990.9,631.3 993.7,631.2 996.6,631.2 999.4,631.2 1002.3,631.2 1005.2,631.1 1008.2,631.1 1011.2,631.1 1014.3,631.1 1017.4,631.1 1020.4,631.1 1023.4,631.1 1026.3,631.2 1029.2,631.2 1032.1,631.2 1034.9,631.2 1037.7,631.2 1040.5,631.3 1043.3,631.3 1046.1,631.3 1048.9,631.4 1051.6,631.4 1054.4,631.5 1057.2,631.5 1059.9,631.6 1062.7,631.7 1065.5,631.7 1068.2,631.8 1071.0,631.9 1073.7,632.0 1076.5,632.0 1079.2,632.1 1082.0,632.2 1084.7,632.3 1087.5,632.4 1090.3,632.5 1093.0,632.6 1095.8,632.7 1098.5,632.9 1101.3,633.0 1104.0,633.1 1106.8,633.2 1109.5,633.4 1112.3,633.5 1115.0,633.7 1117.8,633.8 1120.5,634.0 1123.2,634.1 1126.0,634.3 1128.7,634.5 1131.5,634.6 1134.2,634.8 1137.0,635.0 1139.7,635.2 1142.5,635.4 1145.2,635.6 1147.9,635.8 1150.7,636.0 1153.4,636.2 1156.2,636.5 1158.9,636.7 1161.6,636.9 1164.4,637.2 1167.1,637.4 1169.8,637.7 1172.6,638.0 1175.3,638.2 1178.0,638.5 1180.8,638.8 1183.5,639.1 1186.2,639.4 1189.0,639.7 1191.7,640.0 1194.4,640.4 1197.1,640.7 1199.8,641.0 1202.6,641.4 1205.3,641.8 1208.0,642.1 1210.7,642.5 1213.4,642.9 1216.1,643.3 1218.9,643.7 1221.6,644.1 1224.3,644.6 1227.0,645.0 1229.7,645.5 1232.4,645.9 1235.1,646.4 1237.8,646.9 1240.5,647.4 1243.2,647.9 1245.9,648.5 1248.5,649.0 1251.2,649.6 1253.9,650.1 1256.6,650.7 1259.3,651.3 1261.9,652.0 1264.6,652.6 1267.3,653.2 1269.9,653.9 1272.6,654.6 1275.2,655.3 1277.9,656.1 1280.5,656.8 1283.2,657.6 1285.8,658.4 1288.4,659.2 1291.1,660.0 1293.7,660.9 1296.3,661.8 1298.9,662.7 1301.5,663.6 1304.1,664.6 1306.7,665.6 1309.2,666.6 1310.8,667.3M1384.8,824.3 1383.8,827.7 1382.7,831.3 1381.5,835.0 1380.2,838.9 1378.8,843.0 1377.3,847.2 1375.7,851.6 1374.0,855.9 1372.2,860.2 1370.2,864.5 1368.1,868.8 1365.9,873.1 1363.5,877.5 1362.2,879.8 1361.0,882.0 1359.6,884.3 1358.3,886.6 1356.8,888.9 1355.4,891.2 1353.9,893.6 1352.4,895.9 1350.8,898.3 1349.1,900.7 1347.4,903.2 1345.7,905.6 1343.9,908.1 1342.1,910.6 1340.2,913.2 1338.2,915.7 1336.2,918.3 1334.2,920.9 1332.1,923.5 1329.9,926.1 1327.6,928.7 1325.3,931.4 1323.0,934.1 1320.6,936.8 1318.1,939.5 1315.5,942.2 1312.9,944.9 1310.2,947.7 1307.4,950.4 1304.5,953.2 1301.6,956.0 1298.6,958.8M1448.0,230.7 1450.4,232.9 1452.7,235.1 1455.0,237.2 1457.3,239.4 1459.5,241.5 1461.7,243.6 1463.9,245.7 1466.0,247.7 1468.1,249.8 1470.2,251.8 1472.2,253.8 1474.2,255.7 1476.2,257.7 1478.2,259.6 1480.1,261.5 1482.0,263.4 1483.8,265.2M547.8,263.4 549.7,261.5 551.6,259.6 553.6,257.7 555.6,255.7 557.6,253.8 559.6,251.8 561.7,249.8 563.8,247.7 565.9,245.7 568.1,243.6 570.3,241.5 572.5,239.4 574.8,237.2 577.1,235.1 579.4,232.9 581.8,230.7M779.4,229.9 775.7,233.1 772.1,236.3 768.6,239.5 765.2,242.7 762.0,245.9 758.8,249.0 755.8,252.2 752.8,255.4 750.0,258.5 747.3,261.6 744.6,264.7 742.0,267.8 739.6,270.9 737.2,273.9 734.9,277.0 732.7,280.0 730.6,282.9 728.6,285.9 726.6,288.8 724.7,291.7 722.9,294.6 721.2,297.4 719.6,300.2 718.0,303.0 716.4,305.8 715.0,308.5 713.6,311.2 712.3,313.9 711.0,316.6 709.8,319.2 708.6,321.9 707.5,324.5 706.5,327.1 705.5,329.8 704.6,332.4 703.7,335.1 702.8,337.8 702.0,340.5 701.3,343.1 700.6,345.7 699.9,348.2 699.3,350.7 698.5,354.2 697.7,357.6 697.0,360.8 696.4,364.0 695.9,367.1 695.5,370.1 695.1,373.0 694.8,375.9 694.6,378.7 694.5,379.6M733.1,470.4 735.1,472.1 737.2,473.8 739.3,475.3 741.4,476.9 743.6,478.4 745.7,479.9 747.9,481.3 750.1,482.7 752.4,484.0 754.6,485.3 756.9,486.6 759.1,487.9 761.4,489.1 763.7,490.3 766.1,491.4 768.4,492.6 770.7,493.6 773.1,494.7 775.5,495.8 777.8,496.8 780.2,497.8 782.6,498.7 785.0,499.7 787.5,500.6 789.9,501.5 792.3,502.3 794.8,503.2 797.2,504.0 799.7,504.8 802.2,505.6 804.7,506.4 807.1,507.2 809.6,507.9 812.1,508.6 814.6,509.3 817.2,510.0 819.7,510.6 822.2,511.3 824.7,511.9 827.3,512.5 829.8,513.1 832.4,513.7 834.9,514.3 837.5,514.9 840.0,515.4 842.6,515.9 845.2,516.5 847.7,517.0 850.3,517.5 852.9,518.0 855.5,518.4 858.1,518.9 860.6,519.3 863.2,519.8 865.8,520.2 868.4,520.6 871.0,521.0 873.6,521.4 876.2,521.8 878.9,522.2 881.5,522.5 884.1,522.9 886.7,523.2 889.3,523.5 892.0,523.9 894.6,524.2 897.2,524.5 899.8,524.8 902.5,525.1 905.1,525.4 907.7,525.6 910.4,525.9 913.0,526.2 915.6,526.4 918.3,526.6 920.9,526.9 923.6,527.1 926.2,527.3 928.9,527.5 931.5,527.7 934.2,527.9 936.8,528.1 939.5,528.3 942.1,528.5 944.8,528.6 947.4,528.8 950.1,529.0 952.7,529.1 955.4,529.2 958.1,529.4 960.7,529.5 963.4,529.6 966.1,529.7 968.7,529.8 971.4,529.9 974.1,530.0 976.7,530.1 979.4,530.2 982.1,530.3 984.8,530.3 987.5,530.4 990.2,530.5 992.9,530.5 995.7,530.6 998.4,530.6 1001.3,530.6 1004.1,530.6 1007.0,530.7 1010.0,530.7 1013.1,530.7 1016.1,530.7 1019.2,530.7 1022.2,530.7 1025.1,530.6 1028.0,530.6 1030.8,530.6 1033.6,530.6 1036.3,530.5 1039.1,530.5 1041.8,530.4 1044.5,530.4 1047.2,530.3 1049.8,530.2 1052.5,530.1 1055.2,530.0 1057.9,530.0 1060.5,529.9 1063.2,529.8 1065.9,529.6 1068.5,529.5 1071.2,529.4 1073.9,529.3 1076.5,529.1 1079.2,529.0 1081.8,528.8 1084.5,528.7 1087.1,528.5 1089.8,528.3 1092.5,528.2 1095.1,528.0 1097.8,527.8 1100.4,527.6 1103.1,527.4 1105.7,527.1 1108.3,526.9 1111.0,526.7 1113.6,526.5 1116.3,526.2 1118.9,526.0 1121.5,525.7 1124.2,525.4 1126.8,525.1 1129.4,524.9 1132.1,524.6 1134.7,524.3 1137.3,523.9 1139.9,523.6 1142.6,523.3 1145.2,522.9 1147.8,522.6 1150.4,522.2 1153.0,521.9 1155.6,521.5 1158.2,521.1 1160.8,520.7 1163.4,520.3 1166.0,519.8 1168.6,519.4 1171.2,519.0 1173.8,518.5 1176.4,518.0 1179.0,517.6 1181.6,517.1 1184.1,516.6 1186.7,516.1 1189.3,515.5 1191.8,515.0 1194.4,514.4 1196.9,513.9 1199.5,513.3 1202.0,512.7 1204.6,512.1 1207.1,511.4 1209.6,510.8 1212.1,510.1 1214.6,509.4 1217.2,508.7 1219.7,508.0 1222.2,507.3 1224.6,506.6 1227.1,505.8 1229.6,505.0 1232.1,504.2 1234.5,503.4 1237.0,502.5 1239.4,501.7 1241.8,500.8 1244.3,499.9 1246.7,498.9 1249.1,498.0 1251.5,497.0 1253.9,496.0 1256.2,494.9 1258.6,493.9 1260.9,492.8 1263.3,491.7 1265.6,490.5 1267.9,489.3 1270.2,488.1 1272.5,486.9 1274.7,485.6 1277.0,484.3 1279.2,483.0 1281.4,481.6 1283.6,480.2 1285.8,478.7 1287.9,477.2 1290.1,475.7 1292.2,474.1 1294.3,472.4 1296.3,470.8 1297.1,470.1M1335.2,378.7 1335.0,375.9 1334.7,373.0 1334.3,370.1 1333.9,367.1 1333.4,364.0 1332.8,360.8 1332.1,357.6 1331.3,354.2 1330.5,350.7 1329.9,348.2 1329.2,345.7 1328.5,343.1 1327.8,340.5 1327.0,337.8 1326.1,335.1 1325.2,332.4 1324.3,329.8 1323.3,327.1 1322.3,324.5 1321.2,321.9 1320.0,319.2 1318.8,316.6 1317.5,313.9 1316.2,311.2 1314.8,308.5 1313.4,305.8 1311.8,303.0 1310.2,300.2 1308.6,297.4 1306.9,294.6 1305.1,291.7 1303.2,288.8 1301.2,285.9 1299.2,282.9 1297.1,280.0 1294.9,277.0 1292.6,273.9 1290.2,270.9 1287.8,267.8 1285.2,264.7 1282.5,261.6 1279.8,258.5 1277.0,255.4 1274.0,252.2 1271.0,249.0 1267.8,245.9 1264.6,242.7 1261.2,239.5 1257.7,236.3 1254.1,233.1 1250.4,229.9M777.2,958.2 773.5,955.0 769.8,951.8 766.3,948.6 762.9,945.4 759.6,942.2 756.4,939.0 753.3,935.8 750.3,932.7 747.4,929.5 744.7,926.4 742.0,923.3 739.4,920.2 736.9,917.1 734.5,914.0 732.2,911.0 730.0,908.0 727.8,905.0 725.8,902.1 723.8,899.1 721.9,896.2 720.1,893.3 718.3,890.5 716.6,887.7 715.0,884.9 713.5,882.1 712.0,879.4 710.6,876.7 709.3,874.0 708.0,871.3 706.8,868.6 705.6,866.0 704.5,863.3 703.5,860.6 702.5,857.9 701.5,855.2 700.6,852.4 699.8,849.7 699.0,846.9 698.2,844.2 697.5,841.5 696.9,838.9 696.2,836.4 695.4,832.8 694.6,829.4 693.9,826.1 693.3,822.9 692.8,819.9 692.4,816.9 692.0,813.9 691.7,811.1 691.6,809.2M730.1,717.2 732.2,715.5 734.3,713.8 736.4,712.2 738.6,710.6 740.8,709.1 743.0,707.6 745.2,706.2 747.4,704.8 749.7,703.4 752.0,702.1 754.3,700.8 756.6,699.5 758.9,698.3 761.3,697.1 763.6,695.9 766.0,694.8 768.3,693.7 770.7,692.6 773.1,691.6 775.6,690.6 778.0,689.6 780.4,688.6 782.8,687.6 785.3,686.7 787.8,685.8 790.2,684.9 792.7,684.1 795.2,683.2 797.7,682.4 800.2,681.6 802.7,680.8 805.2,680.1 807.7,679.3 810.2,678.6 812.8,677.9 815.3,677.2 817.8,676.5 820.4,675.9 822.9,675.2 825.5,674.6 828.0,674.0 830.6,673.4 833.2,672.8 835.7,672.3 838.3,671.7 840.9,671.2 843.5,670.7 846.1,670.1 848.7,669.6 851.2,669.2 853.8,668.7 856.4,668.2 859.0,667.8 861.6,667.3 864.3,666.9 866.9,666.5 869.5,666.1 872.1,665.7 874.7,665.3 877.3,664.9 879.9,664.5 882.6,664.2 885.2,663.8 887.8,663.5 890.5,663.2 893.1,662.9 895.7,662.5 898.3,662.2 901.0,662.0 903.6,661.7 906.3,661.4 908.9,661.1 911.5,660.9 914.2,660.6 916.8,660.4 919.5,660.1 922.1,659.9 924.8,659.7 927.4,659.5 930.1,659.3 932.7,659.1 935.4,658.9 938.0,658.7 940.7,658.5 943.3,658.3 946.0,658.2 948.7,658.0 951.3,657.9 954.0,657.7 956.6,657.6 959.3,657.5 962.0,657.4 964.6,657.2 967.3,657.1 970.0,657.0 972.7,656.9 975.3,656.8 978.0,656.8 980.7,656.7 983.4,656.6 986.1,656.5 988.8,656.5 991.5,656.4 994.3,656.4 997.1,656.3 999.9,656.3 1002.7,656.3 1005.7,656.3 1008.7,656.2 1011.8,656.2 1014.9,656.2 1017.4,656.2 1020.5,656.2 1023.5,656.3 1026.5,656.3 1029.4,656.3 1032.2,656.3 1035.0,656.4 1037.7,656.4 1040.4,656.5 1043.2,656.5 1045.9,656.6 1048.6,656.7 1051.3,656.7 1053.9,656.8 1056.6,656.9 1059.3,657.0 1062.0,657.1 1064.6,657.2 1067.3,657.3 1070.0,657.4 1072.6,657.6 1075.3,657.7 1077.9,657.8 1080.6,658.0 1083.3,658.2 1085.9,658.3 1088.6,658.5 1091.2,658.7 1093.9,658.8 1096.5,659.0 1099.2,659.2 1101.8,659.4 1104.5,659.6 1107.1,659.9 1109.8,660.1 1112.4,660.3 1115.1,660.6 1117.7,660.8 1120.4,661.1 1123.0,661.3 1125.6,661.6 1128.3,661.9 1130.9,662.2 1133.6,662.5 1136.2,662.8 1138.8,663.1 1141.5,663.4 1144.1,663.8 1146.7,664.1 1149.3,664.5 1152.0,664.8 1154.6,665.2 1157.2,665.6 1159.8,666.0 1162.4,666.4 1165.0,666.8 1167.6,667.2 1170.2,667.7 1172.8,668.1 1175.4,668.6 1178.0,669.1 1180.6,669.5 1183.2,670.0 1185.8,670.6 1188.4,671.1 1191.0,671.6 1193.5,672.2 1196.1,672.7 1198.7,673.3 1201.3,673.9 1203.8,674.5 1206.4,675.1 1208.9,675.8 1211.5,676.4 1214.0,677.1 1216.5,677.8 1219.1,678.5 1221.6,679.2 1224.1,679.9 1226.6,680.7 1229.1,681.4 1231.6,682.2 1234.1,683.1 1236.6,683.9 1239.1,684.7 1241.6,685.6 1244.0,686.5 1246.5,687.4 1248.9,688.4 1251.3,689.4 1253.8,690.3 1256.2,691.4 1258.6,692.4 1261.0,693.5 1263.4,694.6 1265.7,695.7 1268.1,696.9 1270.4,698.1 1272.7,699.3 1275.1,700.5 1277.4,701.8 1279.6,703.2 1281.9,704.5 1284.1,705.9 1286.4,707.3 1288.6,708.8 1290.8,710.3 1292.9,711.9 1295.1,713.5 1297.2,715.1 1299.3,716.8 1300.1,717.5M1338.2,810.1 1337.9,813.0 1337.5,815.9 1337.1,818.9 1336.6,821.9 1336.1,825.1 1335.4,828.3 1334.7,831.7 1333.9,835.2 1333.3,837.6 1332.6,840.2 1331.9,842.8 1331.2,845.5 1330.4,848.3 1329.6,851.1 1328.7,853.8 1327.8,856.6 1326.8,859.3 1325.8,862.0 1324.7,864.6 1323.6,867.3 1322.4,870.0 1321.2,872.6 1319.9,875.3 1318.5,878.0 1317.1,880.7 1315.5,883.5 1314.0,886.3 1312.3,889.1 1310.6,891.9 1308.8,894.8 1307.0,897.7 1305.0,900.6 1303.0,903.5 1300.9,906.5 1298.7,909.5 1296.5,912.5 1294.1,915.6 1291.7,918.6 1289.1,921.7 1286.5,924.8 1283.8,927.9 1280.9,931.1 1278.0,934.2 1275.0,937.4 1271.8,940.6 1268.6,943.8 1265.2,947.0 1261.8,950.2 1258.2,953.4 1254.5,956.6 1252.6,958.2M828.0,229.4 825.2,231.5 822.4,233.5 819.7,235.6 817.1,237.6 814.5,239.7 812.0,241.8 809.5,243.9 807.1,246.0 804.7,248.1 802.4,250.2 800.2,252.3 798.0,254.4 795.9,256.5 793.8,258.6 791.7,260.7 789.8,262.8 787.8,264.9 786.0,267.0 784.1,269.1 782.4,271.2 780.6,273.3 779.0,275.3 777.3,277.4 775.7,279.5 774.2,281.5 772.7,283.6 770.6,286.6 768.5,289.6 766.5,292.6 764.7,295.6 762.9,298.6 761.2,301.5 759.6,304.4 758.1,307.3 756.6,310.1 755.3,312.9 754.0,315.8 752.8,318.6 751.7,321.3 750.6,324.1 749.6,327.0 748.7,329.8 747.9,332.7 747.1,335.6 746.3,338.5 745.7,341.4 745.0,344.3 744.5,347.1 744.0,349.7 743.5,352.3 743.1,354.8 742.7,358.0 742.3,361.1 742.1,364.1 741.9,367.0 741.7,369.8 741.7,372.6 741.7,375.3 741.8,378.0 741.9,380.6 742.2,383.2 742.4,385.7 742.9,388.8 743.4,391.8 744.0,394.7 744.6,397.5 745.4,400.3 746.2,403.0 747.1,405.7 748.1,408.3 749.1,410.8 750.2,413.2 751.3,415.6 752.5,418.0 753.7,420.3 755.0,422.5 756.3,424.7 757.7,426.8 759.2,428.8 760.9,431.3 762.8,433.6 764.6,435.9 766.6,438.1 768.5,440.2 770.6,442.3 772.6,444.4 774.8,446.3 776.9,448.2 779.1,450.1 781.3,451.9 783.6,453.7 785.9,455.4 788.2,457.0 790.6,458.7 793.0,460.2 795.4,461.8 797.8,463.2 800.3,464.7 802.8,466.1 805.3,467.5 807.9,468.8 810.4,470.1 813.0,471.3 815.6,472.6 818.2,473.7 820.9,474.9 823.5,476.0 826.2,477.1 828.9,478.2 831.6,479.2 834.3,480.2 837.1,481.2 839.8,482.1 842.6,483.1 845.4,484.0 848.2,484.8 851.0,485.7 853.8,486.5 856.6,487.3 859.4,488.1 862.3,488.8 865.1,489.6 868.0,490.3 870.8,491.0 873.7,491.6 876.6,492.3 879.5,492.9 882.4,493.5 885.3,494.1 888.2,494.7 891.1,495.3 894.1,495.8 897.0,496.3 899.9,496.8 902.9,497.3 905.8,497.8 908.8,498.3 911.8,498.7 914.7,499.1 917.7,499.5 920.7,499.9 923.1,500.3 925.6,500.6 928.1,500.9 930.6,501.1 933.1,501.4 935.6,501.7 938.1,501.9 940.6,502.2 943.1,502.4 945.6,502.7 948.1,502.9 950.6,503.1 953.1,503.3 955.6,503.5 958.1,503.7 960.7,503.9 963.2,504.0 965.7,504.2 968.2,504.3 970.7,504.5 973.3,504.6 975.8,504.7 978.4,504.8 980.9,504.9 983.5,505.0 986.0,505.1 988.6,505.2 991.2,505.3 993.8,505.4 996.5,505.4 999.2,505.5 1001.9,505.5 1004.7,505.5 1007.6,505.6 1010.6,505.6 1013.7,505.6 1016.7,505.6 1019.8,505.6 1022.7,505.5 1025.6,505.5 1028.4,505.5 1031.2,505.4 1033.8,505.4 1036.5,505.3 1039.1,505.3 1041.7,505.2 1044.3,505.1 1046.8,505.0 1049.4,504.9 1051.9,504.8 1054.5,504.7 1057.0,504.6 1059.6,504.4 1062.1,504.3 1064.6,504.1 1067.1,504.0 1069.6,503.8 1072.2,503.6 1074.7,503.5 1077.2,503.3 1079.7,503.1 1082.2,502.8 1084.7,502.6 1087.2,502.4 1089.7,502.1 1092.2,501.9 1094.7,501.6 1097.2,501.4 1099.7,501.1 1102.2,500.8 1104.7,500.5 1107.1,500.2 1109.6,499.9 1112.6,499.5 1115.6,499.1 1118.5,498.6 1121.5,498.2 1124.4,497.7 1127.4,497.3 1130.3,496.8 1133.3,496.3 1136.2,495.7 1139.1,495.2 1142.1,494.6 1145.0,494.0 1147.9,493.4 1150.8,492.8 1153.7,492.2 1156.6,491.5 1159.4,490.9 1162.3,490.2 1165.2,489.5 1168.0,488.7 1170.9,488.0 1173.7,487.2 1176.5,486.4 1179.3,485.5 1182.1,484.7 1184.9,483.8 1187.7,482.9 1190.4,482.0 1193.2,481.0 1195.9,480.0 1198.6,479.0 1201.3,478.0 1204.0,476.9 1206.7,475.8 1209.4,474.7 1212.0,473.5 1214.6,472.4 1217.2,471.1 1219.8,469.9 1222.4,468.6 1224.9,467.2 1227.4,465.9 1229.9,464.5 1232.4,463.0 1234.8,461.5 1237.2,460.0 1239.6,458.4 1242.0,456.8 1244.3,455.1 1246.6,453.4 1248.8,451.6 1251.1,449.8 1253.3,447.9 1255.4,446.0 1257.5,444.0 1259.6,442.0 1261.6,439.9 1263.6,437.7 1265.5,435.5 1267.4,433.2 1269.2,430.9 1270.9,428.4 1272.3,426.4 1273.7,424.2 1275.1,422.0 1276.3,419.8 1277.6,417.5 1278.7,415.2 1279.9,412.8 1280.9,410.3 1281.9,407.8 1282.9,405.2 1283.8,402.5 1284.6,399.8 1285.3,397.0 1286.0,394.1 1286.5,391.2 1287.0,388.2 1287.4,385.1 1287.7,382.6 1287.9,380.0 1288.0,377.4 1288.1,374.7 1288.1,371.9 1288.0,369.1 1287.9,366.3 1287.7,363.3 1287.4,360.3 1287.0,357.2 1286.5,354.0 1286.1,351.5 1285.6,348.9 1285.1,346.2 1284.6,343.3 1283.9,340.5 1283.2,337.6 1282.5,334.6 1281.7,331.7 1280.8,328.9 1279.8,326.0 1278.8,323.2 1277.8,320.4 1276.6,317.6 1275.4,314.8 1274.1,312.0 1272.7,309.2 1271.2,306.3 1269.7,303.4 1268.0,300.5 1266.3,297.6 1264.5,294.6 1262.6,291.6 1260.6,288.6 1258.5,285.6 1256.4,282.5 1254.8,280.5 1253.3,278.4 1251.7,276.4 1250.0,274.3 1248.3,272.2 1246.6,270.1 1244.8,268.1 1242.9,266.0 1241.0,263.9 1239.1,261.8 1237.1,259.7 1235.0,257.6 1232.9,255.4 1230.7,253.3 1228.5,251.2 1226.2,249.1 1223.9,247.0 1221.5,244.9 1219.1,242.8 1216.6,240.7 1214.0,238.7 1211.4,236.6 1208.7,234.5 1206.0,232.5 1203.2,230.4 1201.8,229.4M826.5,958.8 823.6,956.8 820.8,954.7 818.1,952.7 815.4,950.6 812.8,948.5 810.3,946.4 807.8,944.3 805.3,942.2 802.9,940.1 800.6,938.0 798.3,935.9 796.1,933.8 793.9,931.7 791.8,929.6 789.8,927.5 787.8,925.4 785.8,923.3 783.9,921.2 782.0,919.1 780.2,917.0 778.5,914.9 776.8,912.8 775.1,910.7 773.5,908.7 772.0,906.6 770.5,904.6 769.0,902.5 766.9,899.5 764.9,896.5 762.9,893.5 761.1,890.5 759.4,887.6 757.7,884.7 756.1,881.8 754.7,878.9 753.3,876.1 751.9,873.2 750.7,870.4 749.5,867.6 748.4,864.8 747.4,861.9 746.5,859.0 745.6,856.1 744.7,853.1 744.0,850.0 743.3,847.0 742.6,844.0 742.1,841.1 741.5,838.3 741.1,835.6 740.7,833.1 740.3,830.6 739.9,827.4 739.6,824.4 739.3,821.4 739.2,818.5 739.1,815.7 739.1,812.9 739.1,810.2 739.2,807.6 739.4,805.0 739.7,802.5 740.0,800.0 740.5,796.9 741.0,794.0 741.7,791.1 742.4,788.3 743.2,785.5 744.1,782.8 745.0,780.2 746.0,777.6 747.1,775.1 748.2,772.7 749.4,770.3 750.6,768.0 751.9,765.8 753.2,763.6 754.6,761.4 756.1,759.3 757.5,757.3 759.0,755.3 760.9,752.9 762.8,750.7 764.8,748.5 766.8,746.3 768.9,744.2 771.0,742.2 773.2,740.3 775.4,738.4 777.6,736.5 779.9,734.7 782.2,733.0 784.6,731.3 786.9,729.6 789.3,728.0 791.8,726.4 794.2,724.9 796.7,723.4 799.2,722.0 801.8,720.6 804.3,719.2 806.9,717.9 809.5,716.6 812.1,715.4 814.8,714.2 817.4,713.0 820.1,711.8 822.8,710.7 825.5,709.6 828.3,708.6 831.0,707.5 833.7,706.5 836.5,705.6 839.3,704.6 842.1,703.7 844.9,702.8 847.7,701.9 850.5,701.1 853.4,700.3 856.2,699.5 859.0,698.7 861.9,698.0 864.8,697.2 867.7,696.5 870.5,695.8 873.4,695.2 876.3,694.5 879.3,693.9 882.2,693.3 885.1,692.7 888.0,692.1 891.0,691.6 893.9,691.0 896.8,690.5 899.8,690.0 902.7,689.5 905.7,689.0 908.7,688.6 911.1,688.2 913.6,687.9 916.1,687.5 918.6,687.2 921.1,686.9 923.6,686.5 926.0,686.2 928.5,685.9 931.0,685.7 933.5,685.4 936.0,685.1 938.5,684.9 941.0,684.6 943.5,684.4 946.0,684.2 948.5,683.9 951.1,683.7 953.6,683.5 956.1,683.4 958.6,683.2 961.1,683.0 963.7,682.8 966.2,682.7 968.7,682.5 971.2,682.4 973.8,682.3 976.3,682.2 978.9,682.0 981.4,681.9 984.0,681.8 986.6,681.8 989.2,681.7 991.8,681.6 994.5,681.5 997.2,681.5 999.9,681.4 1002.7,681.4 1005.6,681.4 1008.6,681.4 1011.7,681.3 1014.3,681.3 1016.8,681.3 1019.3,681.4 1022.4,681.4 1025.3,681.4 1028.2,681.4 1031.0,681.5 1033.7,681.5 1036.4,681.6 1039.0,681.6 1041.7,681.7 1044.2,681.8 1046.8,681.9 1049.4,682.0 1051.9,682.1 1054.5,682.2 1057.0,682.3 1059.6,682.5 1062.1,682.6 1064.6,682.7 1067.2,682.9 1069.7,683.1 1072.2,683.2 1074.7,683.4 1077.2,683.6 1079.7,683.8 1082.3,684.0 1084.8,684.3 1087.3,684.5 1089.8,684.7 1092.3,685.0 1094.8,685.2 1097.3,685.5 1099.8,685.8 1102.3,686.1 1104.8,686.4 1107.2,686.7 1109.7,687.0 1112.2,687.3 1114.7,687.7 1117.2,688.0 1119.6,688.4 1122.6,688.8 1125.6,689.3 1128.5,689.7 1131.5,690.2 1134.4,690.8 1137.4,691.3 1140.3,691.8 1143.2,692.4 1146.2,693.0 1149.1,693.6 1152.0,694.2 1154.9,694.8 1157.8,695.5 1160.7,696.2 1163.6,696.9 1166.5,697.6 1169.3,698.3 1172.2,699.1 1175.0,699.9 1177.9,700.7 1180.7,701.5 1183.5,702.4 1186.3,703.3 1189.1,704.2 1191.9,705.1 1194.7,706.1 1197.4,707.0 1200.2,708.1 1202.9,709.1 1205.6,710.2 1208.3,711.3 1211.0,712.4 1213.7,713.6 1216.3,714.8 1219.0,716.0 1221.6,717.3 1224.2,718.6 1226.7,719.9 1229.3,721.3 1231.8,722.7 1234.3,724.2 1236.8,725.7 1239.2,727.2 1241.7,728.8 1244.1,730.4 1246.4,732.1 1248.7,733.8 1251.0,735.6 1253.3,737.4 1255.5,739.3 1257.7,741.2 1259.8,743.2 1261.9,745.3 1264.0,747.4 1266.0,749.6 1267.9,751.8 1269.8,754.1 1271.7,756.5 1273.2,758.5 1274.6,760.6 1276.0,762.7 1277.4,764.9 1278.7,767.1 1279.9,769.4 1281.1,771.8 1282.3,774.2 1283.4,776.6 1284.4,779.2 1285.4,781.8 1286.3,784.4 1287.1,787.1 1287.8,789.9 1288.5,792.8 1289.1,795.7 1289.6,798.8 1290.0,801.8 1290.3,804.4 1290.5,806.9 1290.7,809.6 1290.7,812.3 1290.7,815.0 1290.7,817.8 1290.5,820.7 1290.3,823.6 1290.0,826.6 1289.6,829.8 1289.1,833.1 1288.7,835.6 1288.3,838.3 1287.7,841.1 1287.2,844.0 1286.5,847.0 1285.8,850.0 1285.1,853.1 1284.2,856.1 1283.3,859.0 1282.4,861.9 1281.4,864.8 1280.3,867.6 1279.1,870.4 1277.9,873.2 1276.5,876.1 1275.1,878.9 1273.7,881.8 1272.1,884.7 1270.4,887.6 1268.7,890.5 1266.9,893.5 1264.9,896.5 1262.9,899.5 1260.8,902.5 1259.3,904.6 1257.8,906.6 1256.3,908.7 1254.7,910.7 1253.0,912.8 1251.3,914.9 1249.6,917.0 1247.8,919.1 1245.9,921.2 1244.0,923.3 1242.0,925.4 1240.0,927.5 1238.0,929.6 1235.9,931.7 1233.7,933.8 1231.5,935.9 1229.2,938.0 1226.9,940.1 1224.5,942.2 1222.0,944.3 1219.5,946.4 1217.0,948.5 1214.4,950.6 1211.7,952.7 1209.0,954.7 1206.2,956.8 1203.3,958.8M881.9,229.4 879.6,230.6 877.3,231.9 875.0,233.1 872.7,234.4 870.5,235.7 868.3,237.0 866.2,238.4 864.1,239.7 860.9,241.7 857.9,243.8 854.9,245.9 852.0,248.0 849.2,250.1 846.5,252.2 843.8,254.4 841.2,256.5 838.7,258.7 836.2,260.9 833.8,263.1 831.5,265.3 829.3,267.5 827.1,269.7 825.0,271.9 822.9,274.1 821.0,276.3 819.0,278.5 817.2,280.7 815.4,282.9 813.7,285.1 812.0,287.2 810.4,289.4 808.9,291.6 807.4,293.7 806.0,295.9 804.7,298.0 803.4,300.2 801.7,303.0 800.2,305.8 798.7,308.6 797.3,311.4 796.0,314.2 794.9,316.9 793.7,319.7 792.7,322.4 791.8,325.2 790.9,328.0 790.1,330.9 789.4,333.8 788.8,336.8 788.2,339.7 787.7,342.6 787.2,345.5 786.9,348.2 786.6,350.8 786.3,353.4 786.1,356.4 785.9,359.4 785.9,362.2 785.9,365.0 786.0,367.6 786.2,370.3 786.4,372.8 786.8,375.3 787.3,378.3 787.8,381.2 788.5,384.0 789.3,386.7 790.1,389.4 791.0,392.1 792.0,394.6 793.1,397.1 794.2,399.6 795.4,401.9 796.7,404.3 798.0,406.5 799.4,408.7 800.9,410.9 802.4,413.0 804.0,415.1 805.6,417.1 807.2,419.0 808.9,421.0 810.7,422.8 812.5,424.6 814.3,426.4 816.2,428.1 818.1,429.8 820.0,431.5 822.0,433.1 824.0,434.6 826.0,436.2 828.1,437.7 830.2,439.1 832.4,440.5 834.5,441.9 836.7,443.3 838.9,444.6 841.2,445.8 843.4,447.1 845.7,448.3 848.0,449.5 850.4,450.6 852.7,451.8 855.1,452.9 857.5,453.9 859.9,455.0 862.3,456.0 864.8,457.0 867.2,457.9 869.7,458.8 872.2,459.8 874.7,460.6 877.2,461.5 879.8,462.3 882.3,463.1 884.9,463.9 887.4,464.7 890.0,465.4 892.6,466.2 895.2,466.9 897.8,467.5 900.5,468.2 903.1,468.8 905.8,469.4 908.4,470.0 911.1,470.6 913.7,471.2 916.4,471.7 919.1,472.3 921.8,472.8 924.5,473.2 927.2,473.7 929.9,474.2 932.6,474.6 935.4,475.0 938.1,475.4 940.8,475.8 943.6,476.2 946.3,476.5 949.1,476.9 951.8,477.2 954.6,477.5 957.4,477.8 960.2,478.1 962.9,478.3 965.7,478.6 968.5,478.8 971.3,479.0 974.1,479.2 976.9,479.4 979.7,479.6 982.6,479.7 985.4,479.8 988.3,480.0 991.2,480.1 994.2,480.2 997.2,480.3 999.7,480.3 1002.4,480.4 1005.1,480.4 1007.9,480.4 1010.8,480.5 1013.7,480.5 1016.7,480.5 1019.6,480.5 1022.5,480.4 1025.3,480.4 1028.0,480.4 1030.6,480.3 1033.1,480.3 1036.1,480.2 1039.1,480.1 1042.0,480.0 1044.8,479.8 1047.7,479.7 1050.5,479.5 1053.3,479.4 1056.2,479.2 1059.0,479.0 1061.8,478.7 1064.5,478.5 1067.3,478.3 1070.1,478.0 1072.9,477.7 1075.7,477.4 1078.4,477.1 1081.2,476.8 1083.9,476.5 1086.7,476.1 1089.4,475.7 1092.2,475.4 1094.9,475.0 1097.6,474.5 1100.3,474.1 1103.0,473.6 1105.7,473.2 1108.4,472.7 1111.1,472.2 1113.8,471.6 1116.5,471.1 1119.2,470.5 1121.8,469.9 1124.5,469.3 1127.1,468.7 1129.8,468.1 1132.4,467.4 1135.0,466.7 1137.6,466.0 1140.2,465.3 1142.8,464.6 1145.4,463.8 1147.9,463.0 1150.5,462.2 1153.0,461.3 1155.5,460.5 1158.0,459.6 1160.5,458.7 1163.0,457.8 1165.4,456.8 1167.9,455.8 1170.3,454.8 1172.7,453.7 1175.1,452.7 1177.5,451.6 1179.8,450.5 1182.1,449.3 1184.5,448.1 1186.7,446.9 1189.0,445.6 1191.2,444.4 1193.4,443.0 1195.6,441.7 1197.8,440.3 1199.9,438.9 1202.0,437.4 1204.1,435.9 1206.1,434.4 1208.1,432.8 1210.1,431.2 1212.1,429.6 1214.0,427.9 1215.8,426.1 1217.6,424.3 1219.4,422.5 1221.2,420.6 1222.9,418.7 1224.5,416.8 1226.1,414.7 1227.7,412.7 1229.2,410.5 1230.6,408.4 1232.0,406.2 1233.3,403.9 1234.6,401.5 1235.8,399.1 1236.9,396.7 1237.9,394.2 1238.9,391.6 1239.8,389.0 1240.7,386.3 1241.4,383.5 1242.1,380.7 1242.6,377.8 1243.1,374.8 1243.4,372.3 1243.7,369.7 1243.8,367.1 1243.9,364.4 1243.9,361.6 1243.9,358.8 1243.7,355.8 1243.4,352.8 1243.2,350.2 1242.8,347.5 1242.5,344.8 1242.0,341.9 1241.5,339.0 1240.9,336.0 1240.2,333.1 1239.5,330.2 1238.7,327.3 1237.8,324.5 1236.8,321.8 1235.8,319.0 1234.7,316.2 1233.4,313.5 1232.1,310.7 1230.7,307.9 1229.3,305.1 1227.7,302.3 1226.0,299.5 1224.7,297.3 1223.3,295.2 1221.9,293.0 1220.4,290.9 1218.8,288.7 1217.2,286.5 1215.5,284.3 1213.8,282.1 1212.0,279.9 1210.1,277.7 1208.2,275.5 1206.2,273.3 1204.1,271.1 1202.0,268.9 1199.8,266.7 1197.5,264.5 1195.2,262.3 1192.8,260.2 1190.3,258.0 1187.7,255.8 1185.1,253.7 1182.4,251.5 1179.6,249.4 1176.8,247.3 1173.9,245.2 1170.9,243.1 1167.8,241.1 1164.7,239.0 1162.5,237.7 1160.4,236.4 1158.2,235.1 1155.9,233.8 1153.7,232.5 1151.4,231.2 1149.1,230.0 1147.9,229.4M880.8,959.0 878.4,957.7 876.1,956.5 873.8,955.2 871.5,953.9 869.3,952.6 867.1,951.3 865.0,950.0 862.8,948.6 859.7,946.6 856.6,944.5 853.6,942.4 850.7,940.3 847.9,938.2 845.1,936.1 842.4,933.9 839.8,931.8 837.2,929.6 834.8,927.4 832.3,925.2 830.0,923.0 827.7,920.8 825.5,918.6 823.4,916.4 821.3,914.2 819.3,912.0 817.4,909.8 815.5,907.6 813.7,905.4 812.0,903.2 810.3,901.0 808.7,898.8 807.2,896.7 805.7,894.5 804.2,892.3 802.9,890.2 801.5,888.1 799.9,885.2 798.3,882.4 796.8,879.6 795.4,876.8 794.1,874.0 792.9,871.3 791.8,868.5 790.8,865.7 789.8,862.9 788.9,860.0 788.1,857.0 787.4,854.0 786.8,850.9 786.2,847.9 785.7,844.8 785.2,841.9 784.8,839.0 784.5,836.3 784.3,833.7 784.1,831.2 783.9,828.2 783.8,825.3 783.9,822.5 783.9,819.8 784.1,817.2 784.4,814.6 784.7,812.1 785.1,809.6 785.6,806.7 786.3,803.9 787.0,801.1 787.9,798.4 788.8,795.7 789.8,793.2 790.8,790.6 792.0,788.2 793.2,785.8 794.4,783.4 795.8,781.1 797.2,778.9 798.6,776.7 800.1,774.6 801.7,772.5 803.3,770.5 805.0,768.5 806.7,766.6 808.5,764.7 810.3,762.9 812.1,761.1 814.0,759.4 815.9,757.6 817.9,756.0 819.9,754.4 821.9,752.8 824.0,751.2 826.0,749.7 828.2,748.3 830.3,746.9 832.5,745.5 834.7,744.1 836.9,742.8 839.2,741.5 841.5,740.2 843.8,739.0 846.1,737.8 848.4,736.7 850.8,735.5 853.2,734.4 855.6,733.3 858.0,732.3 860.5,731.3 862.9,730.3 865.4,729.3 867.9,728.4 870.4,727.5 872.9,726.6 875.4,725.7 878.0,724.9 880.5,724.1 883.1,723.3 885.7,722.5 888.3,721.7 890.9,721.0 893.5,720.3 896.1,719.6 898.8,718.9 901.4,718.3 904.1,717.7 906.7,717.1 909.4,716.5 912.1,715.9 914.7,715.4 917.4,714.8 920.1,714.3 922.8,713.8 925.5,713.4 928.3,712.9 931.0,712.5 933.7,712.0 936.5,711.6 939.2,711.2 941.9,710.9 944.7,710.5 947.5,710.2 950.2,709.8 953.0,709.5 955.7,709.2 958.5,709.0 961.3,708.7 964.1,708.4 966.9,708.2 969.7,708.0 972.5,707.8 975.3,707.6 978.1,707.4 981.0,707.3 983.9,707.1 986.7,707.0 989.7,706.9 992.6,706.8 995.1,706.7 997.7,706.6 1000.3,706.6 1003.0,706.5 1005.9,706.5 1008.8,706.5 1011.8,706.5 1014.9,706.5 1018.0,706.5 1021.0,706.5 1023.9,706.5 1026.8,706.5 1029.5,706.6 1032.1,706.6 1034.7,706.7 1037.2,706.8 1040.1,706.9 1043.1,707.0 1045.9,707.1 1048.8,707.3 1051.7,707.4 1054.5,707.6 1057.3,707.8 1060.1,708.0 1062.9,708.2 1065.7,708.4 1068.5,708.7 1071.3,709.0 1074.1,709.2 1076.8,709.5 1079.6,709.8 1082.3,710.2 1085.1,710.5 1087.9,710.9 1090.6,711.2 1093.3,711.6 1096.1,712.0 1098.8,712.5 1101.5,712.9 1104.3,713.4 1107.0,713.8 1109.7,714.3 1112.4,714.8 1115.1,715.4 1117.7,715.9 1120.4,716.5 1123.1,717.1 1125.7,717.7 1128.4,718.3 1131.0,718.9 1133.7,719.6 1136.3,720.3 1138.9,721.0 1141.5,721.7 1144.1,722.5 1146.7,723.3 1149.3,724.1 1151.8,724.9 1154.4,725.7 1156.9,726.6 1159.4,727.5 1161.9,728.4 1164.4,729.3 1166.9,730.3 1169.3,731.3 1171.8,732.3 1174.2,733.3 1176.6,734.4 1179.0,735.5 1181.4,736.7 1183.7,737.8 1186.0,739.0 1188.3,740.2 1190.6,741.5 1192.9,742.8 1195.1,744.1 1197.3,745.5 1199.5,746.9 1201.6,748.3 1203.8,749.7 1205.8,751.2 1207.9,752.8 1209.9,754.4 1211.9,756.0 1213.9,757.6 1215.8,759.4 1217.7,761.1 1219.5,762.9 1221.3,764.7 1223.1,766.6 1224.8,768.5 1226.5,770.5 1228.1,772.5 1229.7,774.6 1231.2,776.7 1232.6,778.9 1234.0,781.1 1235.4,783.4 1236.6,785.8 1237.8,788.2 1239.0,790.6 1240.0,793.2 1241.0,795.7 1241.9,798.4 1242.8,801.1 1243.5,803.9 1244.2,806.7 1244.7,809.6 1245.1,812.1 1245.4,814.6 1245.7,817.2 1245.9,819.8 1245.9,822.5 1246.0,825.3 1245.9,828.2 1245.7,831.2 1245.5,833.7 1245.3,836.3 1245.0,839.0 1244.6,841.9 1244.1,844.8 1243.6,847.9 1243.0,850.9 1242.4,854.0 1241.7,857.0 1240.9,860.0 1240.0,862.9 1239.0,865.7 1238.0,868.5 1236.9,871.3 1235.7,874.0 1234.4,876.8 1233.0,879.6 1231.5,882.4 1229.9,885.2 1228.3,888.1 1226.9,890.2 1225.6,892.3 1224.1,894.5 1222.6,896.7 1221.1,898.8 1219.5,901.0 1217.8,903.2 1216.1,905.4 1214.3,907.6 1212.4,909.8 1210.5,912.0 1208.5,914.2 1206.4,916.4 1204.3,918.6 1202.1,920.8 1199.8,923.0 1197.5,925.2 1195.0,927.4 1192.6,929.6 1190.0,931.8 1187.4,933.9 1184.7,936.1 1181.9,938.2 1179.1,940.3 1176.2,942.4 1173.2,944.5 1170.1,946.6 1167.0,948.6 1164.8,950.0 1162.7,951.3 1160.5,952.6 1158.3,953.9 1156.0,955.2 1153.7,956.5 1151.4,957.7 1149.0,959.0M960.3,229.0 957.2,229.7 954.2,230.4 951.1,231.1 948.1,231.9 945.1,232.7 942.1,233.6 939.2,234.5 936.3,235.4 933.4,236.4 930.6,237.4 927.8,238.4 925.0,239.4 922.3,240.5 919.6,241.6 916.9,242.8 914.3,243.9 911.7,245.1 909.2,246.3 906.7,247.6 904.2,248.8 901.8,250.1 899.4,251.4 897.1,252.7 894.8,254.1 892.5,255.5 890.3,256.8 888.1,258.2 886.0,259.7 883.9,261.1 881.9,262.5 879.2,264.5 876.6,266.4 874.1,268.4 871.7,270.4 869.3,272.4 867.0,274.5 864.8,276.5 862.7,278.6 860.6,280.6 858.6,282.7 856.7,284.8 854.8,286.8 853.1,288.9 851.4,291.0 849.7,293.1 848.2,295.2 846.7,297.2 845.2,299.3 843.5,301.9 841.9,304.5 840.4,307.0 839.0,309.6 837.7,312.2 836.5,314.7 835.4,317.3 834.4,319.8 833.4,322.4 832.6,325.0 831.8,327.7 831.1,330.4 830.5,333.1 829.9,335.9 829.5,338.7 829.1,341.4 828.8,344.1 828.5,346.8 828.3,349.3 828.2,352.3 828.2,355.1 828.2,357.7 828.4,360.3 828.6,362.9 829.0,365.7 829.4,368.5 830.0,371.2 830.7,373.8 831.4,376.4 832.3,378.9 833.2,381.4 834.2,383.8 835.3,386.1 836.5,388.4 837.7,390.7 839.1,392.9 840.5,395.0 841.9,397.1 843.4,399.1 845.0,401.1 846.7,403.1 848.3,405.0 850.1,406.8 851.9,408.6 853.7,410.4 855.6,412.1 857.6,413.7 859.6,415.4 861.6,416.9 863.7,418.5 865.8,420.0 868.0,421.4 870.1,422.8 872.4,424.2 874.6,425.6 876.9,426.9 879.2,428.1 881.6,429.4 884.0,430.6 886.4,431.7 888.8,432.8 891.2,433.9 893.7,435.0 896.2,436.0 898.8,437.0 901.3,438.0 903.9,438.9 906.5,439.8 909.1,440.7 911.7,441.5 914.4,442.4 917.0,443.2 919.7,443.9 922.4,444.6 925.1,445.4 927.9,446.0 930.6,446.7 933.3,447.3 936.1,447.9 938.9,448.5 941.7,449.0 944.5,449.6 947.3,450.1 950.1,450.6 952.9,451.0 955.8,451.4 958.6,451.8 961.5,452.2 964.4,452.6 967.2,452.9 970.1,453.2 972.6,453.5 975.1,453.7 977.6,454.0 980.1,454.2 982.7,454.3 985.2,454.5 987.8,454.7 990.4,454.8 993.0,454.9 995.7,455.0 998.5,455.1 1001.3,455.2 1004.3,455.3 1006.8,455.3 1009.5,455.3 1012.2,455.3 1014.9,455.4 1017.6,455.3 1020.3,455.3 1023.0,455.3 1025.5,455.3 1028.5,455.2 1031.3,455.1 1034.1,455.0 1036.8,454.9 1039.4,454.8 1042.0,454.7 1044.6,454.5 1047.1,454.3 1049.7,454.2 1052.2,454.0 1054.7,453.7 1057.2,453.5 1059.7,453.2 1062.6,452.9 1065.4,452.6 1068.3,452.2 1071.2,451.8 1074.0,451.4 1076.9,451.0 1079.7,450.6 1082.5,450.1 1085.3,449.6 1088.1,449.0 1090.9,448.5 1093.7,447.9 1096.5,447.3 1099.2,446.7 1101.9,446.0 1104.7,445.4 1107.4,444.6 1110.1,443.9 1112.8,443.2 1115.4,442.4 1118.1,441.5 1120.7,440.7 1123.3,439.8 1125.9,438.9 1128.5,438.0 1131.0,437.0 1133.6,436.0 1136.1,435.0 1138.6,433.9 1141.0,432.8 1143.4,431.7 1145.8,430.6 1148.2,429.4 1150.6,428.1 1152.9,426.9 1155.2,425.6 1157.4,424.2 1159.7,422.8 1161.8,421.4 1164.0,420.0 1166.1,418.5 1168.2,416.9 1170.2,415.4 1172.2,413.7 1174.2,412.1 1176.1,410.4 1177.9,408.6 1179.7,406.8 1181.5,405.0 1183.1,403.1 1184.8,401.1 1186.4,399.1 1187.9,397.1 1189.3,395.0 1190.7,392.9 1192.1,390.7 1193.3,388.4 1194.5,386.1 1195.6,383.8 1196.6,381.4 1197.5,378.9 1198.4,376.4 1199.1,373.8 1199.8,371.2 1200.4,368.5 1200.8,365.7 1201.2,362.9 1201.4,360.3 1201.6,357.7 1201.6,355.1 1201.6,352.3 1201.5,349.3 1201.3,346.8 1201.0,344.1 1200.7,341.4 1200.3,338.7 1199.9,335.9 1199.3,333.1 1198.7,330.4 1198.0,327.7 1197.2,325.0 1196.4,322.4 1195.4,319.8 1194.4,317.3 1193.3,314.7 1192.1,312.2 1190.8,309.6 1189.4,307.0 1187.9,304.5 1186.3,301.9 1184.6,299.3 1183.1,297.2 1181.6,295.2 1180.1,293.1 1178.4,291.0 1176.7,288.9 1175.0,286.8 1173.1,284.8 1171.2,282.7 1169.2,280.6 1167.1,278.6 1165.0,276.5 1162.8,274.5 1160.5,272.4 1158.1,270.4 1155.7,268.4 1153.2,266.4 1150.6,264.5 1147.9,262.5 1145.9,261.1 1143.8,259.7 1141.7,258.2 1139.5,256.8 1137.3,255.5 1135.0,254.1 1132.7,252.7 1130.4,251.4 1128.0,250.1 1125.6,248.8 1123.1,247.6 1120.6,246.3 1118.1,245.1 1115.5,243.9 1112.9,242.8 1110.2,241.6 1107.5,240.5 1104.8,239.4 1102.0,238.4 1099.2,237.4 1096.4,236.4 1093.5,235.4 1090.6,234.5 1087.7,233.6 1084.7,232.7 1081.7,231.9 1078.7,231.1 1075.6,230.4 1072.6,229.7 1069.5,229.0M957.3,958.9 954.2,958.2 951.1,957.5 948.1,956.7 945.1,955.9 942.1,955.1 939.2,954.2 936.3,953.3 933.4,952.3 930.5,951.4 927.7,950.4 924.9,949.3 922.2,948.2 919.5,947.1 916.8,946.0 914.2,944.9 911.6,943.7 909.0,942.5 906.5,941.2 904.0,940.0 901.5,938.7 899.1,937.4 896.8,936.1 894.5,934.7 892.2,933.4 889.9,932.0 887.7,930.6 885.6,929.2 883.5,927.8 881.4,926.3 878.7,924.4 876.1,922.4 873.5,920.5 871.1,918.5 868.7,916.4 866.4,914.4 864.1,912.4 861.9,910.3 859.8,908.3 857.8,906.2 855.9,904.1 854.0,902.0 852.2,900.0 850.5,897.9 848.8,895.8 847.2,893.7 845.7,891.6 844.2,889.5 842.5,887.0 840.8,884.4 839.3,881.8 837.9,879.2 836.5,876.7 835.3,874.1 834.2,871.5 833.1,868.9 832.1,866.3 831.2,863.7 830.4,861.0 829.7,858.2 829.1,855.4 828.5,852.5 828.1,849.6 827.6,846.7 827.3,843.8 827.0,841.1 826.9,838.4 826.7,835.9 826.7,832.9 826.7,830.2 826.8,827.5 827.0,824.9 827.3,822.5 827.7,819.6 828.2,816.9 828.9,814.2 829.6,811.6 830.4,809.1 831.3,806.6 832.3,804.1 833.4,801.8 834.6,799.5 835.8,797.2 837.1,795.0 838.5,792.8 839.9,790.7 841.4,788.6 843.0,786.6 844.6,784.7 846.3,782.8 848.1,780.9 849.9,779.1 851.7,777.3 853.6,775.6 855.5,773.9 857.5,772.3 859.6,770.7 861.6,769.1 863.7,767.6 865.9,766.1 868.1,764.7 870.3,763.3 872.6,761.9 874.8,760.6 877.2,759.3 879.5,758.1 881.9,756.9 884.3,755.7 886.7,754.6 889.2,753.5 891.7,752.4 894.2,751.3 896.7,750.3 899.3,749.3 901.8,748.4 904.4,747.5 907.0,746.6 909.7,745.7 912.3,744.9 915.0,744.1 917.7,743.3 920.4,742.6 923.1,741.9 925.8,741.2 928.5,740.5 931.3,739.9 934.1,739.3 936.8,738.7 939.6,738.1 942.4,737.6 945.2,737.1 948.1,736.6 950.9,736.1 953.7,735.7 956.6,735.2 959.4,734.9 962.3,734.5 965.2,734.1 968.1,733.8 970.6,733.5 973.1,733.3 975.6,733.1 978.1,732.9 980.7,732.7 983.2,732.5 985.8,732.3 988.4,732.2 991.0,732.0 993.7,731.9 996.5,731.8 999.4,731.7 1002.3,731.7 1004.9,731.6 1007.6,731.6 1010.3,731.6 1013.2,731.6 1016.0,731.6 1018.9,731.6 1021.7,731.6 1024.4,731.6 1027.0,731.7 1030.0,731.7 1032.8,731.8 1035.6,731.9 1038.3,732.0 1041.0,732.2 1043.6,732.3 1046.2,732.5 1048.7,732.6 1051.3,732.8 1053.8,733.0 1056.3,733.3 1058.8,733.5 1061.3,733.8 1064.2,734.1 1067.1,734.4 1069.9,734.8 1072.8,735.2 1075.7,735.6 1078.5,736.0 1081.3,736.5 1084.2,737.0 1087.0,737.5 1089.8,738.0 1092.6,738.6 1095.3,739.2 1098.1,739.8 1100.9,740.4 1103.6,741.1 1106.3,741.8 1109.1,742.5 1111.7,743.2 1114.4,744.0 1117.1,744.8 1119.8,745.6 1122.4,746.5 1125.0,747.4 1127.6,748.3 1130.2,749.2 1132.7,750.2 1135.3,751.2 1137.8,752.2 1140.3,753.3 1142.7,754.4 1145.2,755.5 1147.6,756.7 1150.0,757.9 1152.3,759.2 1154.6,760.4 1156.9,761.7 1159.2,763.1 1161.4,764.5 1163.6,765.9 1165.8,767.4 1167.9,768.9 1170.0,770.4 1172.0,772.0 1174.0,773.7 1175.9,775.3 1177.8,777.1 1179.7,778.8 1181.5,780.6 1183.2,782.5 1184.9,784.4 1186.6,786.4 1188.2,788.4 1189.7,790.4 1191.1,792.5 1192.5,794.7 1193.8,796.9 1195.1,799.1 1196.2,801.4 1197.3,803.8 1198.3,806.2 1199.3,808.7 1200.1,811.2 1200.8,813.8 1201.5,816.5 1202.0,819.2 1202.5,822.0 1202.8,824.9 1203.0,827.5 1203.1,830.2 1203.1,832.9 1203.1,835.9 1202.9,838.4 1202.8,841.1 1202.5,843.8 1202.2,846.7 1201.7,849.6 1201.3,852.5 1200.7,855.4 1200.1,858.2 1199.4,861.0 1198.6,863.7 1197.7,866.3 1196.7,868.9 1195.6,871.5 1194.5,874.1 1193.3,876.7 1191.9,879.2 1190.5,881.8 1189.0,884.4 1187.3,887.0 1185.6,889.5 1184.1,891.6 1182.6,893.7 1181.0,895.8 1179.3,897.9 1177.6,900.0 1175.8,902.0 1173.9,904.1 1172.0,906.2 1170.0,908.3 1167.9,910.3 1165.7,912.4 1163.4,914.4 1161.1,916.4 1158.7,918.5 1156.3,920.5 1153.7,922.4 1151.1,924.4 1148.4,926.3 1146.3,927.8 1144.2,929.2 1142.1,930.6 1139.9,932.0 1137.6,933.4 1135.3,934.7 1133.0,936.1 1130.7,937.4 1128.3,938.7 1125.8,940.0 1123.3,941.2 1120.8,942.5 1118.2,943.7 1115.6,944.9 1113.0,946.0 1110.3,947.1 1107.6,948.2 1104.9,949.3 1102.1,950.4 1099.3,951.4 1096.4,952.3 1093.5,953.3 1090.6,954.2 1087.7,955.1 1084.7,955.9 1081.7,956.7 1078.7,957.5 1075.6,958.2 1072.5,958.9M1014.9,249.0 1011.9,249.0 1008.9,249.0 1006.0,249.1 1003.3,249.2 1000.6,249.3 998.1,249.4 994.8,249.7 991.6,249.9 988.5,250.2 985.5,250.6 982.6,251.0 979.6,251.4 976.7,251.9 973.9,252.4 971.1,252.9 968.3,253.5 965.5,254.2 962.8,254.8 960.1,255.5 957.4,256.3 954.8,257.1 952.2,257.9 949.6,258.7 947.0,259.6 944.5,260.5 942.1,261.5 939.6,262.4 937.2,263.4 934.9,264.5 932.6,265.5 930.3,266.6 928.0,267.7 925.3,269.2 922.6,270.6 920.0,272.1 917.4,273.7 914.9,275.2 912.5,276.8 910.2,278.4 907.9,280.1 905.7,281.7 903.5,283.4 901.5,285.1 899.5,286.8 897.5,288.6 895.7,290.3 893.9,292.1 891.8,294.2 889.9,296.4 888.0,298.6 886.2,300.7 884.6,302.9 883.0,305.1 881.5,307.3 880.1,309.5 878.8,311.6 877.6,313.8 876.3,316.4 875.1,319.0 874.1,321.6 873.1,324.3 872.3,326.9 871.6,329.7 871.0,332.5 870.5,335.3 870.0,338.2 869.7,341.1 869.5,343.9 869.4,346.6 869.4,349.2 869.4,351.7 869.6,354.5 869.9,357.1 870.3,359.6 870.8,362.1 871.5,364.8 872.3,367.4 873.2,369.9 874.2,372.4 875.3,374.7 876.6,377.1 877.9,379.4 879.3,381.6 880.8,383.7 882.4,385.8 884.1,387.9 885.9,389.8 887.7,391.8 889.6,393.6 891.6,395.4 893.7,397.2 895.8,398.9 898.0,400.6 900.2,402.2 902.5,403.7 904.9,405.2 907.3,406.7 909.4,407.9 911.7,409.1 913.9,410.3 916.2,411.4 918.5,412.5 920.9,413.6 923.3,414.6 925.7,415.6 928.1,416.6 930.6,417.5 933.1,418.4 935.6,419.2 938.1,420.0 940.7,420.8 943.3,421.5 945.9,422.3 948.5,422.9 951.1,423.6 953.8,424.2 956.5,424.8 959.2,425.4 961.9,425.9 964.6,426.4 967.4,426.8 970.1,427.3 972.9,427.7 975.7,428.0 978.5,428.4 981.4,428.7 983.9,428.9 986.4,429.2 989.0,429.4 991.6,429.6 994.2,429.7 996.9,429.9 999.7,430.0 1002.6,430.1 1005.2,430.1 1007.9,430.2 1010.6,430.2 1013.5,430.2 1016.3,430.2 1019.2,430.2 1021.9,430.2 1024.6,430.1 1027.2,430.1 1030.1,430.0 1032.9,429.9 1035.6,429.7 1038.2,429.6 1040.8,429.4 1043.4,429.2 1045.9,428.9 1048.4,428.7 1050.9,428.4 1053.7,428.1 1056.5,427.7 1059.3,427.3 1062.1,426.9 1064.8,426.4 1067.6,425.9 1070.3,425.4 1073.0,424.9 1075.7,424.3 1078.3,423.7 1081.0,423.0 1083.6,422.3 1086.2,421.6 1088.8,420.9 1091.4,420.1 1093.9,419.3 1096.4,418.5 1098.9,417.6 1101.4,416.7 1103.8,415.7 1106.2,414.7 1108.6,413.7 1111.0,412.7 1113.3,411.6 1115.6,410.4 1117.9,409.3 1120.1,408.1 1122.3,406.8 1124.7,405.4 1127.0,403.9 1129.3,402.3 1131.6,400.7 1133.8,399.1 1135.9,397.4 1138.0,395.6 1139.9,393.8 1141.9,392.0 1143.7,390.0 1145.5,388.1 1147.2,386.0 1148.8,384.0 1150.3,381.8 1151.8,379.6 1153.1,377.3 1154.3,375.0 1155.5,372.6 1156.5,370.2 1157.4,367.7 1158.3,365.1 1158.9,362.4 1159.5,359.6 1159.9,357.1 1160.2,354.5 1160.4,351.7 1160.4,349.2 1160.4,346.6 1160.3,343.9 1160.1,341.1 1159.8,338.2 1159.3,335.3 1158.8,332.5 1158.2,329.7 1157.5,326.9 1156.7,324.3 1155.7,321.6 1154.7,319.0 1153.5,316.4 1152.2,313.8 1151.0,311.6 1149.7,309.5 1148.3,307.3 1146.8,305.1 1145.2,302.9 1143.6,300.7 1141.8,298.6 1139.9,296.4 1138.0,294.2 1135.9,292.1 1134.1,290.3 1132.3,288.6 1130.3,286.8 1128.3,285.1 1126.3,283.4 1124.1,281.7 1121.9,280.1 1119.6,278.4 1117.3,276.8 1114.9,275.2 1112.4,273.7 1109.8,272.1 1107.2,270.6 1104.5,269.2 1101.8,267.7 1099.5,266.6 1097.2,265.5 1094.9,264.5 1092.6,263.4 1090.2,262.4 1087.7,261.5 1085.3,260.5 1082.8,259.6 1080.2,258.7 1077.6,257.9 1075.0,257.1 1072.4,256.3 1069.7,255.5 1067.0,254.8 1064.3,254.2 1061.5,253.5 1058.7,252.9 1055.9,252.4 1053.1,251.9 1050.2,251.4 1047.2,251.0 1044.3,250.6 1041.3,250.2 1038.2,249.9 1035.0,249.7 1031.7,249.4 1029.2,249.3 1026.5,249.2 1023.8,249.1 1020.9,249.0 1017.9,249.0 1014.9,249.0M1014.9,939.4 1011.7,939.4 1008.6,939.4 1005.6,939.3 1002.7,939.2 1000.0,939.1 997.4,939.0 994.9,938.8 991.6,938.6 988.5,938.3 985.4,937.9 982.4,937.6 979.5,937.1 976.5,936.7 973.7,936.2 970.8,935.6 968.0,935.0 965.2,934.4 962.5,933.8 959.8,933.1 957.1,932.3 954.5,931.6 951.8,930.7 949.3,929.9 946.7,929.0 944.2,928.1 941.7,927.2 939.2,926.2 936.8,925.2 934.5,924.2 932.1,923.1 929.8,922.1 927.6,921.0 924.8,919.5 922.1,918.1 919.5,916.6 916.9,915.1 914.4,913.5 912.0,911.9 909.6,910.3 907.3,908.7 905.1,907.0 902.9,905.3 900.8,903.6 898.8,901.9 896.8,900.2 895.0,898.4 893.1,896.6 891.1,894.5 889.1,892.4 887.2,890.2 885.4,888.0 883.7,885.9 882.1,883.7 880.6,881.5 879.2,879.3 877.9,877.1 876.6,874.9 875.3,872.3 874.1,869.7 873.1,867.1 872.1,864.4 871.2,861.6 870.5,858.8 869.9,856.3 869.5,853.8 869.1,851.2 868.8,848.7 868.5,846.1 868.3,843.6 868.2,840.7 868.2,838.0 868.3,835.4 868.4,832.6 868.7,829.9 869.1,827.3 869.6,824.9 870.3,822.2 871.1,819.6 872.0,817.0 873.0,814.6 874.2,812.2 875.4,809.8 876.7,807.6 878.2,805.4 879.7,803.2 881.3,801.1 883.0,799.1 884.8,797.1 886.6,795.2 888.6,793.3 890.6,791.5 892.6,789.7 894.8,788.0 896.9,786.4 899.2,784.7 901.5,783.2 903.9,781.7 906.0,780.4 908.2,779.2 910.4,777.9 912.6,776.8 914.9,775.6 917.3,774.5 919.6,773.5 922.0,772.4 924.4,771.4 926.9,770.5 929.3,769.6 931.8,768.7 934.3,767.8 936.9,767.0 939.4,766.2 942.0,765.5 944.6,764.8 947.3,764.1 949.9,763.4 952.6,762.8 955.2,762.2 957.9,761.6 960.7,761.1 963.4,760.6 966.1,760.1 968.9,759.7 971.7,759.3 974.5,758.9 977.3,758.6 979.8,758.3 982.3,758.0 984.9,757.8 987.5,757.6 990.1,757.4 992.7,757.2 995.5,757.1 998.3,757.0 1000.8,756.9 1003.4,756.8 1006.1,756.7 1009.0,756.7 1011.9,756.7 1014.9,756.7 1017.9,756.7 1020.8,756.7 1023.7,756.7 1026.4,756.8 1029.0,756.9 1031.5,757.0 1034.3,757.1 1037.1,757.2 1039.7,757.4 1042.3,757.6 1044.9,757.8 1047.5,758.0 1050.0,758.3 1052.5,758.6 1055.3,758.9 1058.1,759.3 1060.9,759.7 1063.7,760.1 1066.4,760.6 1069.1,761.1 1071.9,761.6 1074.6,762.2 1077.2,762.8 1079.9,763.4 1082.5,764.1 1085.2,764.8 1087.8,765.5 1090.4,766.2 1092.9,767.0 1095.5,767.8 1098.0,768.7 1100.5,769.6 1102.9,770.5 1105.4,771.4 1107.8,772.4 1110.2,773.5 1112.5,774.5 1114.9,775.6 1117.2,776.8 1119.4,777.9 1121.6,779.2 1123.8,780.4 1125.9,781.7 1128.3,783.2 1130.6,784.7 1132.9,786.4 1135.0,788.0 1137.2,789.7 1139.2,791.5 1141.2,793.3 1143.2,795.2 1145.0,797.1 1146.8,799.1 1148.5,801.1 1150.1,803.2 1151.6,805.4 1153.1,807.6 1154.4,809.8 1155.6,812.2 1156.8,814.6 1157.8,817.0 1158.7,819.6 1159.5,822.2 1160.2,824.9 1160.7,827.3 1161.1,829.9 1161.4,832.6 1161.5,835.4 1161.6,838.0 1161.6,840.7 1161.5,843.6 1161.3,846.1 1161.0,848.7 1160.7,851.2 1160.3,853.8 1159.9,856.3 1159.3,858.8 1158.6,861.6 1157.7,864.4 1156.7,867.1 1155.7,869.7 1154.5,872.3 1153.2,874.9 1151.9,877.1 1150.6,879.3 1149.2,881.5 1147.7,883.7 1146.1,885.9 1144.4,888.0 1142.6,890.2 1140.7,892.4 1138.7,894.5 1136.7,896.6 1134.8,898.4 1133.0,900.2 1131.0,901.9 1129.0,903.6 1126.9,905.3 1124.7,907.0 1122.5,908.7 1120.2,910.3 1117.8,911.9 1115.4,913.5 1112.9,915.1 1110.3,916.6 1107.7,918.1 1105.0,919.5 1102.2,921.0 1100.0,922.1 1097.7,923.1 1095.3,924.2 1093.0,925.2 1090.6,926.2 1088.1,927.2 1085.6,928.1 1083.1,929.0 1080.5,929.9 1078.0,930.7 1075.3,931.6 1072.7,932.3 1070.0,933.1 1067.3,933.8 1064.6,934.4 1061.8,935.0 1059.0,935.6 1056.1,936.2 1053.3,936.7 1050.3,937.1 1047.4,937.6 1044.4,937.9 1041.3,938.3 1038.2,938.6 1034.9,938.8 1032.4,939.0 1029.8,939.1 1027.1,939.2 1024.2,939.3 1021.2,939.4 1018.1,939.4 1014.9,939.4M1014.9,274.1 1012.4,274.1 1009.3,274.2 1006.2,274.2 1003.4,274.4 1000.6,274.5 998.0,274.7 995.4,274.9 992.4,275.3 989.6,275.6 986.7,276.0 984.0,276.5 981.3,277.0 978.6,277.6 976.0,278.2 973.4,278.9 970.9,279.6 968.4,280.3 966.0,281.1 963.6,282.0 961.2,282.8 958.5,283.9 955.9,285.0 953.3,286.2 950.8,287.4 948.4,288.7 946.0,290.0 943.7,291.3 941.5,292.7 939.4,294.1 937.3,295.5 935.0,297.2 932.8,298.9 930.7,300.7 928.8,302.5 926.9,304.3 925.1,306.1 923.4,308.0 921.7,310.1 920.1,312.3 918.5,314.4 917.2,316.6 915.9,318.9 914.8,321.1 913.7,323.6 912.7,326.2 911.9,328.9 911.3,331.3 910.8,333.8 910.4,336.3 910.1,338.9 910.0,341.4 909.9,344.1 910.0,346.8 910.1,349.3 910.5,352.0 911.0,354.6 911.6,357.0 912.4,359.6 913.3,362.1 914.5,364.4 915.7,366.7 917.1,369.0 918.6,371.1 920.2,373.2 921.9,375.2 923.8,377.1 925.7,379.0 927.6,380.7 929.6,382.3 931.6,383.8 933.7,385.3 935.9,386.7 938.1,388.1 940.4,389.4 942.8,390.7 945.2,391.9 947.7,393.0 950.0,394.0 952.3,395.0 954.7,395.9 957.1,396.8 959.6,397.6 962.1,398.4 964.6,399.1 967.2,399.8 969.7,400.5 972.3,401.1 975.0,401.6 977.7,402.1 980.4,402.6 983.1,403.1 985.6,403.4 988.1,403.7 990.7,404.0 993.3,404.3 996.0,404.5 998.8,404.7 1001.4,404.8 1004.0,404.9 1006.8,405.0 1009.3,405.1 1011.9,405.1 1014.5,405.1 1017.2,405.1 1019.8,405.1 1022.3,405.1 1025.1,405.0 1027.8,404.9 1030.3,404.7 1033.1,404.6 1035.9,404.3 1038.5,404.1 1041.1,403.8 1043.6,403.5 1046.1,403.1 1048.6,402.8 1051.3,402.3 1054.0,401.8 1056.7,401.2 1059.3,400.6 1061.9,400.0 1064.4,399.3 1067.0,398.6 1069.5,397.8 1071.9,397.0 1074.4,396.2 1076.7,395.3 1079.1,394.3 1081.4,393.3 1083.9,392.2 1086.3,391.0 1088.7,389.8 1091.0,388.5 1093.3,387.1 1095.5,385.7 1097.6,384.2 1099.7,382.7 1101.7,381.1 1103.6,379.5 1105.5,377.6 1107.4,375.7 1109.2,373.7 1110.8,371.6 1112.4,369.5 1113.8,367.3 1115.0,365.0 1116.2,362.7 1117.2,360.2 1118.0,357.7 1118.7,355.3 1119.2,352.7 1119.6,350.1 1119.8,347.6 1119.9,344.9 1119.9,342.2 1119.7,339.7 1119.5,337.2 1119.1,334.7 1118.7,332.2 1118.1,329.7 1117.4,327.3 1116.5,324.7 1115.5,322.1 1114.4,319.9 1113.2,317.6 1111.9,315.4 1110.4,313.2 1108.9,311.1 1107.2,309.0 1105.3,306.8 1103.6,305.0 1101.7,303.2 1099.8,301.4 1097.8,299.6 1095.6,297.9 1093.4,296.2 1091.3,294.7 1089.2,293.3 1087.0,291.9 1084.8,290.5 1082.4,289.2 1080.0,287.9 1077.6,286.7 1075.0,285.5 1072.4,284.4 1069.7,283.3 1067.4,282.4 1065.0,281.5 1062.6,280.7 1060.1,280.0 1057.6,279.2 1055.1,278.5 1052.5,277.9 1049.8,277.3 1047.2,276.8 1044.4,276.3 1041.7,275.8 1038.8,275.4 1035.9,275.1 1033.4,274.8 1030.8,274.6 1028.1,274.4 1025.3,274.3 1022.4,274.2 1019.3,274.1 1016.8,274.1 1014.9,274.1M1014.9,914.3 1012.2,914.3 1009.6,914.3 1007.1,914.2 1004.0,914.1 1001.1,914.0 998.3,913.8 995.7,913.6 993.1,913.3 990.2,913.0 987.3,912.6 984.5,912.1 981.7,911.6 979.0,911.1 976.4,910.5 973.8,909.9 971.2,909.2 968.7,908.5 966.3,907.7 963.8,906.9 961.4,906.0 959.1,905.1 956.4,904.0 953.8,902.9 951.3,901.7 948.8,900.5 946.4,899.2 944.0,897.9 941.8,896.5 939.6,895.1 937.5,893.7 935.4,892.2 933.2,890.5 931.0,888.8 929.0,887.0 927.0,885.2 925.2,883.4 923.5,881.6 921.6,879.4 919.9,877.3 918.3,875.1 916.9,873.0 915.6,870.7 914.4,868.5 913.3,866.2 912.3,863.8 911.5,861.4 910.8,859.0 910.2,856.4 909.7,853.8 909.3,851.2 909.1,848.5 908.9,845.9 908.9,843.3 908.9,840.8 909.1,838.1 909.4,835.6 909.8,833.0 910.4,830.4 911.1,828.0 912.1,825.5 913.1,823.1 914.4,820.8 915.7,818.5 917.2,816.4 918.8,814.3 920.5,812.2 922.3,810.3 924.2,808.4 926.3,806.6 928.2,805.0 930.2,803.4 932.3,801.9 934.5,800.5 936.7,799.1 939.0,797.7 941.4,796.5 943.8,795.3 946.3,794.1 948.6,793.1 950.9,792.1 953.3,791.2 955.7,790.3 958.2,789.5 960.7,788.7 963.2,788.0 965.7,787.3 968.3,786.6 970.9,786.0 973.6,785.4 976.2,784.9 979.0,784.4 981.4,784.0 983.9,783.6 986.5,783.3 989.1,783.0 991.7,782.7 994.4,782.5 997.2,782.3 999.8,782.1 1002.5,782.0 1005.3,781.9 1007.9,781.9 1010.6,781.8 1013.3,781.8 1016.1,781.8 1018.8,781.8 1021.5,781.8 1024.1,781.9 1026.9,782.0 1029.7,782.1 1032.3,782.3 1034.8,782.4 1037.5,782.7 1040.2,782.9 1042.8,783.2 1045.3,783.5 1047.8,783.9 1050.3,784.3 1053.0,784.8 1055.7,785.3 1058.4,785.9 1061.0,786.5 1063.6,787.1 1066.1,787.8 1068.6,788.5 1071.1,789.3 1073.6,790.1 1076.0,791.0 1078.4,791.9 1080.7,792.9 1083.0,793.9 1085.5,795.0 1088.0,796.2 1090.3,797.5 1092.6,798.8 1094.9,800.2 1097.1,801.6 1099.2,803.1 1101.2,804.7 1103.2,806.3 1105.1,807.9 1107.0,809.8 1108.9,811.7 1110.6,813.7 1112.2,815.8 1113.7,818.0 1115.1,820.2 1116.4,822.5 1117.5,824.9 1118.4,827.4 1119.3,830.0 1119.9,832.5 1120.4,835.1 1120.7,837.6 1120.9,840.3 1120.9,843.0 1120.9,845.6 1120.8,848.2 1120.5,850.9 1120.1,853.5 1119.7,856.1 1119.1,858.7 1118.4,861.2 1117.6,863.6 1116.6,865.9 1115.6,868.2 1114.4,870.5 1113.1,872.7 1111.6,874.9 1110.1,877.1 1108.4,879.2 1106.5,881.3 1104.8,883.2 1103.0,885.0 1101.1,886.8 1099.0,888.6 1096.9,890.3 1094.7,892.0 1092.6,893.5 1090.5,894.9 1088.3,896.3 1086.1,897.7 1083.8,899.0 1081.4,900.3 1078.9,901.5 1076.4,902.7 1073.8,903.9 1071.1,905.0 1068.8,905.9 1066.4,906.7 1064.0,907.6 1061.5,908.3 1059.0,909.1 1056.4,909.8 1053.8,910.4 1051.2,911.0 1048.5,911.6 1045.8,912.1 1043.0,912.5 1040.1,912.9 1037.2,913.3 1034.6,913.5 1032.0,913.8 1029.3,913.9 1026.4,914.1 1023.4,914.2 1020.8,914.3 1018.2,914.3 1015.6,914.3 1014.9,914.3M1014.9,299.2 1012.2,299.2 1009.5,299.3 1007.0,299.4 1004.2,299.6 1001.5,299.8 999.0,300.1 996.3,300.4 993.7,300.9 991.2,301.4 988.5,302.0 985.9,302.7 983.4,303.4 981.0,304.3 978.5,305.2 976.1,306.3 973.7,307.4 971.5,308.6 969.2,309.9 967.0,311.4 964.9,312.8 962.8,314.5 960.9,316.3 959.1,318.0 957.4,320.0 955.9,322.1 954.5,324.2 953.2,326.6 952.2,329.0 951.4,331.5 950.7,334.1 950.3,336.7 950.1,339.3 950.0,341.9 950.2,344.5 950.5,347.1 951.1,349.6 951.9,352.1 952.9,354.5 954.1,356.7 955.5,358.8 957.0,360.9 958.8,362.8 960.7,364.6 962.6,366.2 964.7,367.7 966.9,369.2 969.1,370.4 971.3,371.6 973.7,372.8 976.1,373.8 978.5,374.7 980.9,375.5 983.5,376.3 986.0,377.0 988.5,377.6 991.1,378.1 993.7,378.5 996.2,378.9 998.8,379.2 1001.3,379.5 1003.9,379.7 1006.6,379.8 1009.2,379.9 1011.9,380.0 1014.7,380.0 1017.4,380.0 1020.1,379.9 1022.7,379.9 1025.2,379.7 1027.8,379.5 1030.4,379.3 1033.0,379.0 1035.5,378.6 1038.2,378.2 1040.7,377.7 1043.2,377.1 1045.7,376.5 1048.2,375.7 1050.7,374.9 1053.0,374.0 1055.4,373.1 1057.7,372.0 1060.0,370.8 1062.2,369.6 1064.5,368.2 1066.6,366.7 1068.6,365.1 1070.5,363.3 1072.3,361.4 1073.9,359.4 1075.4,357.3 1076.6,355.1 1077.7,352.8 1078.5,350.3 1079.1,347.8 1079.5,345.3 1079.8,342.7 1079.8,340.1 1079.6,337.5 1079.2,334.9 1078.7,332.3 1077.9,329.8 1076.9,327.3 1075.7,325.0 1074.4,322.8 1072.9,320.7 1071.3,318.7 1069.6,316.9 1067.7,315.1 1065.7,313.4 1063.6,311.9 1061.5,310.5 1059.2,309.1 1057.0,307.9 1054.7,306.7 1052.3,305.7 1049.8,304.7 1047.5,303.8 1045.0,303.0 1042.5,302.3 1039.9,301.6 1037.4,301.1 1034.8,300.7 1032.2,300.3 1029.7,299.9 1027.1,299.7 1024.4,299.5 1021.9,299.4 1019.3,299.3 1016.6,299.2 1014.9,299.2M1014.9,889.2 1012.1,889.2 1009.3,889.1 1006.6,889.0 1004.0,888.9 1001.2,888.6 998.6,888.4 996.1,888.1 993.4,887.6 990.9,887.1 988.4,886.6 985.8,885.9 983.2,885.2 980.8,884.4 978.4,883.5 975.9,882.5 973.6,881.4 971.3,880.2 969.1,879.0 966.8,877.6 964.7,876.1 962.7,874.6 960.7,872.9 958.9,871.1 957.2,869.2 955.6,867.2 954.1,865.1 952.9,862.9 951.8,860.6 950.9,858.2 950.2,855.7 949.6,853.2 949.3,850.6 949.1,848.0 949.1,845.5 949.2,843.0 949.5,840.4 950.0,837.9 950.8,835.5 951.7,833.0 952.9,830.7 954.3,828.5 955.8,826.5 957.5,824.5 959.4,822.7 961.3,821.0 963.4,819.5 965.6,818.0 967.7,816.7 970.0,815.5 972.3,814.4 974.8,813.3 977.1,812.4 979.6,811.6 982.1,810.8 984.5,810.1 987.0,809.5 989.5,809.0 992.2,808.5 994.7,808.1 997.3,807.8 999.9,807.5 1002.5,807.3 1005.1,807.2 1007.7,807.0 1010.2,807.0 1012.8,806.9 1015.4,806.9 1018.0,806.9 1020.6,807.0 1023.3,807.1 1025.9,807.2 1028.4,807.4 1031.0,807.6 1033.5,807.9 1036.1,808.3 1038.6,808.7 1041.2,809.2 1043.7,809.7 1046.2,810.3 1048.7,811.1 1051.2,811.9 1053.6,812.8 1056.0,813.7 1058.4,814.8 1060.7,816.0 1062.9,817.2 1065.2,818.6 1067.3,820.1 1069.3,821.7 1071.1,823.4 1073.0,825.3 1074.6,827.2 1076.1,829.4 1077.4,831.6 1078.5,834.0 1079.3,836.3 1080.0,838.8 1080.4,841.3 1080.7,843.9 1080.8,846.5 1080.7,849.1 1080.4,851.6 1080.0,854.2 1079.4,856.7 1078.6,859.1 1077.6,861.5 1076.4,863.7 1075.1,865.9 1073.6,868.0 1071.9,870.0 1070.1,871.9 1068.2,873.6 1066.2,875.3 1064.1,876.8 1061.9,878.2 1059.6,879.6 1057.4,880.8 1055.1,881.9 1052.6,883.0 1050.1,884.0 1047.7,884.8 1045.2,885.6 1042.6,886.3 1039.9,886.9 1037.4,887.4 1034.8,887.9 1032.0,888.3 1029.5,888.6 1026.7,888.8 1024.2,889.0 1021.5,889.1 1018.8,889.2 1016.0,889.2 1014.9,889.2M1014.9,324.9 1012.4,325.0 1009.8,325.2 1007.3,325.5 1004.8,326.0 1002.4,326.6 1000.0,327.5 997.7,328.7 995.6,330.1 993.8,331.8 992.3,333.8 991.2,336.2 990.7,338.6 990.7,341.1 991.3,343.6 992.4,345.9 994.0,347.9 995.9,349.5 998.0,350.9 1000.3,351.9 1002.7,352.8 1005.2,353.4 1007.7,353.8 1010.2,354.1 1012.7,354.3 1015.3,354.3 1017.8,354.2 1020.4,354.0 1022.9,353.7 1025.4,353.2 1027.8,352.6 1030.2,351.7 1032.4,350.5 1034.5,349.1 1036.3,347.3 1037.8,345.2 1038.7,342.9 1039.2,340.4 1039.0,337.9 1038.3,335.4 1037.1,333.2 1035.5,331.2 1033.6,329.6 1031.4,328.3 1029.1,327.2 1026.7,326.4 1024.1,325.8 1021.6,325.3 1019.1,325.1 1016.5,324.9 1014.9,324.9M1014.9,863.3 1012.4,863.3 1009.8,863.1 1007.2,862.8 1004.7,862.4 1002.2,861.7 999.8,860.9 997.5,859.8 995.4,858.4 993.5,856.8 991.9,854.8 990.7,852.6 990.0,850.1 989.8,847.6 990.1,845.1 991.0,842.7 992.3,840.6 994.0,838.7 996.0,837.1 998.2,835.9 1000.5,834.9 1002.9,834.1 1005.4,833.6 1007.9,833.2 1010.4,832.9 1013.0,832.8 1015.6,832.8 1018.1,832.9 1020.7,833.1 1023.1,833.4 1025.6,833.8 1028.1,834.5 1030.4,835.3 1032.7,836.4 1034.8,837.8 1036.7,839.5 1038.2,841.6 1039.3,843.9 1039.9,846.3 1040.0,848.9 1039.5,851.4 1038.5,853.7 1037.1,855.8 1035.3,857.7 1033.3,859.2 1031.1,860.4 1028.7,861.4 1026.3,862.1 1023.7,862.6 1021.2,863.0 1018.7,863.2 1016.2,863.3 1014.9,863.3" stroke="#42d4cc" stroke-width="1.5" stroke-opacity="1.0" fill="none"/><path d="M603.7,343.4 601.2,348.8 598.9,353.9 596.8,358.7 594.8,363.4 593.0,367.8 591.2,372.2 589.6,376.3 588.1,380.4M692.7,565.6 695.4,566.1 698.2,566.5 700.9,567.0 703.7,567.4 706.5,567.8 709.2,568.2 712.0,568.5 714.8,568.9 717.0,569.2M1313.4,569.1 1316.2,568.8 1318.9,568.4 1321.7,568.0 1324.4,567.6 1327.2,567.2 1330.0,566.8 1332.7,566.4 1335.5,565.9 1337.7,565.5M1440.2,376.3 1438.6,372.2 1436.8,367.8 1435.0,363.4 1433.0,358.7 1430.9,353.9 1428.6,348.8 1426.1,343.4 1423.4,337.7M1473.7,864.6 1477.1,859.6 1480.4,854.7 1483.4,849.8M549.4,854.7 552.7,859.6 556.1,864.6 559.6,869.7M600.5,843.8 598.0,838.3 595.7,833.1 593.6,828.2 591.6,823.6 589.8,819.1 588.1,814.8 586.5,810.6 585.0,806.6M692.2,621.3 695.0,620.8 697.8,620.4 700.5,620.0 703.3,619.5 706.1,619.1 708.8,618.7 711.6,618.4 714.4,618.0 716.6,617.7M1313.7,617.8 1316.5,618.1 1319.3,618.5 1322.1,618.9 1324.8,619.3 1327.6,619.7 1330.4,620.1 1333.1,620.6 1335.9,621.0 1338.1,621.4M1444.8,806.6 1443.3,810.6 1441.7,814.8 1440.0,819.1 1438.2,823.6 1436.2,828.2 1434.1,833.1 1431.8,838.3 1429.3,843.8 1426.7,849.5M1470.8,322.7 1474.2,327.7 1477.5,332.6 1480.6,337.3 1483.5,342.0M549.2,337.3 552.3,332.6 555.6,327.7 559.0,322.7 562.6,317.6 566.4,312.3M647.8,364.3 646.9,367.6 646.1,370.8 645.3,373.9 644.6,376.9 644.0,379.9 643.4,382.8 643.0,385.7 642.5,388.5 642.1,391.2 641.8,393.9 641.5,396.5 641.3,399.0M696.5,507.7 699.0,509.1 701.4,510.5 703.8,511.8 706.3,513.1 708.8,514.4 711.3,515.6 713.8,516.8 716.3,517.9 718.8,519.0 721.3,520.1 722.3,520.5M1308.0,520.3 1310.5,519.2 1313.0,518.1 1315.5,517.0 1318.0,515.8 1320.5,514.6 1323.0,513.4 1325.5,512.1 1327.9,510.8 1330.4,509.4 1332.8,508.0 1333.7,507.4M1388.5,399.0 1388.3,396.5 1388.0,393.9 1387.7,391.2 1387.3,388.5 1386.8,385.7 1386.4,382.8 1385.8,379.9 1385.2,376.9 1384.5,373.9 1383.7,370.8 1382.9,367.6 1382.0,364.3 1381.5,362.7M644.5,822.6 643.6,819.3 642.8,816.1 642.0,813.0 641.4,810.0 640.7,807.0 640.2,804.1 639.7,801.2 639.3,798.4 638.9,795.7 638.6,793.1 638.3,790.4 638.1,787.9M692.9,680.4 695.4,678.9 697.8,677.5 700.3,676.2 702.8,674.8 705.3,673.5 707.8,672.3 710.4,671.1 712.9,669.9 715.4,668.8 718.0,667.7 719.5,667.1M1310.8,667.3 1313.3,668.4 1315.9,669.5 1318.4,670.6 1321.0,671.8 1323.5,673.0 1326.0,674.3 1328.5,675.6 1331.0,677.0 1333.4,678.4 1335.9,679.8 1337.4,680.7M1391.7,787.9 1391.5,790.4 1391.2,793.1 1390.9,795.7 1390.5,798.4 1390.1,801.2 1389.6,804.1 1389.1,807.0 1388.4,810.0 1387.8,813.0 1387.0,816.1 1386.2,819.3 1385.3,822.6 1384.8,824.3M694.5,379.6 694.4,382.3 694.3,385.0 694.2,387.6 694.2,390.2 694.3,392.7 694.5,396.0 694.7,399.2 695.1,402.3 695.5,405.3 696.0,408.3 696.6,411.2 697.2,414.0 697.9,416.7 698.6,419.3 699.4,421.9 700.3,424.4 701.2,426.9 702.1,429.3 703.1,431.6 704.2,433.9 705.5,436.7 707.0,439.3 708.5,441.9 710.0,444.4 711.6,446.9 713.2,449.3 714.9,451.5 716.7,453.8 718.4,455.9 720.2,458.0 722.1,460.1 724.0,462.0 725.9,464.0 727.8,465.8 729.8,467.6 731.8,469.4 733.1,470.4M1297.1,470.1 1299.2,468.3 1301.2,466.6 1303.1,464.7 1305.1,462.8 1307.0,460.9 1308.8,458.8 1310.7,456.8 1312.4,454.6 1314.2,452.4 1315.9,450.2 1317.6,447.8 1319.2,445.4 1320.7,442.9 1322.2,440.4 1323.7,437.7 1325.1,435.0 1326.4,432.2 1327.4,429.9 1328.4,427.5 1329.3,425.1 1330.2,422.6 1331.0,420.0 1331.8,417.4 1332.5,414.7 1333.1,411.9 1333.7,409.0 1334.2,406.1 1334.6,403.1 1335.0,400.0 1335.3,396.8 1335.5,393.6 1335.5,391.1 1335.6,388.5 1335.6,385.9 1335.5,383.2 1335.4,380.5 1335.2,378.7M691.6,809.2 691.4,806.4 691.2,803.7 691.2,801.0 691.2,798.4 691.2,795.9 691.3,793.4 691.5,790.1 691.8,786.9 692.2,783.8 692.6,780.8 693.1,777.9 693.7,775.0 694.4,772.3 695.1,769.6 695.9,766.9 696.7,764.4 697.6,761.9 698.6,759.4 699.6,757.0 700.6,754.7 701.7,752.5 703.1,749.7 704.6,747.1 706.1,744.5 707.7,742.0 709.3,739.6 711.0,737.2 712.7,734.9 714.5,732.7 716.3,730.6 718.2,728.5 720.1,726.5 722.0,724.5 724.0,722.6 726.0,720.7 728.0,718.9 730.1,717.2M1300.1,717.5 1302.2,719.3 1304.2,721.1 1306.2,723.0 1308.1,724.9 1310.1,726.9 1312.0,728.9 1313.8,731.0 1315.6,733.1 1317.4,735.4 1319.1,737.7 1320.8,740.0 1322.4,742.5 1324.0,745.0 1325.5,747.6 1327.0,750.3 1328.4,753.0 1329.5,755.3 1330.5,757.6 1331.5,760.0 1332.4,762.5 1333.3,765.0 1334.1,767.6 1334.9,770.2 1335.6,773.0 1336.2,775.8 1336.8,778.6 1337.3,781.6 1337.7,784.6 1338.1,787.7 1338.4,790.9 1338.5,794.2 1338.6,796.7 1338.6,799.3 1338.6,801.9 1338.5,804.6 1338.4,807.3 1338.2,810.1" stroke="#42d4cc" stroke-width="1.75" stroke-opacity="1.0" fill="none"/><path d="M588.1,380.4 586.8,384.3 585.5,388.1 584.3,391.7 583.2,395.3 582.2,398.8 581.2,402.1 580.4,405.4M674.0,562.0 676.7,562.6 679.5,563.2 682.2,563.7 685.0,564.3 687.7,564.8 690.5,565.2 692.7,565.6M1337.7,565.5 1340.4,565.1 1343.2,564.6 1345.9,564.0 1348.7,563.5 1351.4,563.0 1354.2,562.4 1356.4,561.9M1448.6,402.1 1447.6,398.8 1446.6,395.3 1445.5,391.7 1444.3,388.1 1443.0,384.3 1441.7,380.4 1440.2,376.3M585.0,806.6 583.7,802.6 582.4,798.9 581.2,795.2 580.2,791.6 579.2,788.2 578.2,784.8 577.4,781.5M672.9,625.0 675.7,624.4 678.4,623.8 681.2,623.3 683.9,622.8 686.7,622.3 689.5,621.8 692.2,621.3M1338.1,621.4 1340.9,621.9 1343.6,622.4 1346.4,622.9 1349.2,623.4 1351.9,624.0 1354.7,624.5 1357.4,625.1M1452.4,781.5 1451.6,784.8 1450.6,788.2 1449.6,791.6 1448.6,795.2 1447.4,798.9 1446.1,802.6 1444.8,806.6M641.3,399.0 641.1,401.5 640.9,405.2 640.8,408.7 640.8,412.2 640.9,415.5 641.0,418.7 641.2,421.9 641.5,424.9 641.9,427.8 642.3,430.7 642.8,433.5M673.0,490.0 675.2,492.0 677.4,494.0 679.7,495.9 682.0,497.7 684.3,499.5 686.6,501.2 688.9,502.8 691.3,504.4 693.7,505.9 696.1,507.4 696.5,507.7M1333.7,507.4 1336.1,505.9 1338.5,504.4 1340.9,502.8 1343.2,501.2 1345.5,499.5 1347.8,497.7 1350.1,495.9 1352.4,494.0 1354.6,492.0 1356.8,490.0 1357.2,489.5M1387.2,432.6 1387.7,429.7 1388.0,426.9 1388.4,423.9 1388.6,420.8 1388.8,417.7 1389.0,414.4 1389.0,411.0 1389.0,407.6 1388.8,404.0 1388.6,400.3 1388.5,399.0M638.1,787.9 637.9,785.4 637.7,781.7 637.6,778.2 637.7,774.7 637.7,771.4 637.9,768.2 638.1,765.1 638.4,762.0 638.8,759.1 639.2,756.2 639.7,753.5M668.7,699.1 670.9,697.0 673.2,694.9 675.4,692.9 677.7,691.1 680.0,689.2 682.4,687.5 684.7,685.8 687.1,684.1 689.5,682.5 692.0,681.0 692.9,680.4M1337.4,680.7 1339.8,682.2 1342.2,683.8 1344.6,685.4 1347.0,687.1 1349.3,688.9 1351.6,690.7 1353.9,692.6 1356.2,694.5 1358.4,696.5 1360.7,698.6 1361.5,699.5M1390.1,753.5 1390.6,756.2 1391.0,759.1 1391.4,762.0 1391.7,765.1 1391.9,768.2 1392.1,771.4 1392.1,774.7 1392.2,778.2 1392.1,781.7 1391.9,785.4 1391.7,787.9" stroke="#36e0dc" stroke-width="2.0" stroke-opacity="1.0" fill="none"/><path d="M580.4,405.4 579.6,408.5 578.8,411.6 578.1,414.6 577.5,417.5 576.9,420.3 576.4,423.1 576.0,425.7M658.7,558.3 661.4,559.0 664.1,559.7 666.9,560.4 669.6,561.1 672.3,561.7 674.0,562.0M1356.4,561.9 1359.1,561.3 1361.8,560.7 1364.6,560.0 1367.3,559.3 1370.0,558.6 1371.7,558.2M1453.4,423.1 1452.9,420.3 1452.3,417.5 1451.7,414.6 1451.0,411.6 1450.2,408.5 1449.4,405.4 1448.6,402.1M577.4,781.5 576.6,778.4 575.9,775.3 575.2,772.3 574.6,769.4 574.1,766.6 573.6,763.9 573.1,761.2 572.7,758.6M657.5,628.8 660.3,628.0 663.0,627.3 665.8,626.6 668.5,626.0 671.3,625.4 672.9,625.0M1357.4,625.1 1360.2,625.7 1362.9,626.4 1365.7,627.1 1368.4,627.7 1371.2,628.5 1372.8,628.9M1456.7,761.2 1456.2,763.9 1455.7,766.6 1455.2,769.4 1454.6,772.3 1453.9,775.3 1453.2,778.4 1452.4,781.5M642.8,433.5 643.3,436.2 643.9,438.8 644.5,441.3 645.1,443.8 645.8,446.2 646.9,449.3 647.9,452.3 649.1,455.1 650.3,457.9 651.5,460.6 652.8,463.2 654.1,465.7 655.5,468.1 657.0,470.4 658.4,472.7 659.9,474.8 661.5,477.0 663.1,479.0 664.7,481.0 666.3,482.9 668.4,485.2 670.5,487.4 672.6,489.5 673.0,490.0M1357.2,489.5 1359.3,487.4 1361.4,485.2 1363.5,482.9 1365.1,481.0 1366.7,479.0 1368.3,477.0 1369.9,474.8 1371.4,472.7 1372.8,470.4 1374.3,468.1 1375.7,465.7 1377.0,463.2 1378.3,460.6 1379.5,457.9 1380.7,455.1 1381.9,452.3 1382.9,449.3 1384.0,446.2 1384.7,443.8 1385.3,441.3 1385.9,438.8 1386.5,436.2 1387.0,433.5 1387.2,432.6M639.7,753.5 640.3,750.8 640.9,748.1 641.5,745.6 642.2,743.1 643.0,740.7 644.0,737.6 645.1,734.6 646.3,731.8 647.5,729.0 648.8,726.3 650.1,723.7 651.5,721.2 653.0,718.8 654.4,716.5 655.9,714.2 657.5,712.1 659.1,710.0 660.7,707.9 662.3,705.9 664.0,704.0 665.7,702.2 667.8,699.9 668.7,699.1M1361.5,699.5 1363.7,701.7 1365.4,703.6 1367.1,705.5 1368.7,707.4 1370.3,709.4 1371.9,711.5 1373.5,713.7 1375.0,715.9 1376.5,718.2 1377.9,720.6 1379.3,723.1 1380.7,725.7 1382.0,728.3 1383.2,731.1 1384.4,733.9 1385.5,736.9 1386.6,739.9 1387.6,743.1 1388.3,745.6 1388.9,748.1 1389.5,750.8 1390.1,753.5" stroke="#36e0dc" stroke-width="2.25" stroke-opacity="1.0" fill="none"/><path d="M576.0,425.7 575.5,428.3 575.2,430.8 574.5,435.7 574.0,440.3 573.8,442.5M645.6,554.4 648.3,555.3 651.1,556.1 653.8,556.9 656.5,557.7 658.7,558.3M1371.7,558.2 1374.4,557.4 1377.1,556.6 1379.8,555.8 1382.5,554.9 1384.7,554.2M1455.8,440.3 1455.3,435.7 1454.6,430.8 1454.3,428.3 1453.8,425.7 1453.4,423.1M572.7,758.6 572.3,756.1 571.7,751.2 571.3,746.6 570.9,742.3M644.4,632.7 647.2,631.8 649.9,631.0 652.6,630.2 655.3,629.4 657.5,628.8M1372.8,628.9 1375.6,629.7 1378.3,630.5 1381.0,631.3 1383.7,632.2 1385.9,632.9M1458.7,744.4 1458.3,748.9 1457.8,753.6 1457.1,758.6 1456.7,761.2" stroke="#2ae6e4" stroke-width="2.5" stroke-opacity="1.0" fill="none"/><path d="M573.8,442.5 573.5,446.7 573.3,450.8 573.2,454.6 573.2,458.3M634.4,550.1 637.0,551.2 639.7,552.3 642.4,553.2 645.1,554.2 645.6,554.4M1384.7,554.2 1387.4,553.2 1390.1,552.3 1392.8,551.2 1395.4,550.1 1396.0,549.9M1456.6,456.5 1456.6,452.7 1456.4,448.8 1456.2,444.6 1455.8,440.3M570.9,742.3 570.7,738.1 570.6,734.2 570.6,730.4 570.7,726.9M632.5,637.2 635.2,636.1 637.9,635.1 640.6,634.1 643.3,633.1 644.4,632.7M1385.9,632.9 1388.6,633.9 1391.3,634.9 1394.0,635.9 1396.7,637.0 1397.8,637.4M1459.2,728.6 1459.2,732.3 1459.1,736.1 1459.0,740.2 1458.7,744.4" stroke="#2ae6e4" stroke-width="2.75" stroke-opacity="1.0" fill="none"/><path d="M573.2,458.3 573.2,461.8 573.4,465.1 573.6,468.3 573.8,471.3M624.3,545.5 626.9,546.8 629.6,548.1 632.2,549.2 634.4,550.1M1396.0,549.9 1398.6,548.8 1401.3,547.6 1404.0,546.3 1406.1,545.3M1456.1,469.8 1456.3,466.7 1456.5,463.5 1456.6,460.1 1456.6,456.5M570.7,726.9 570.8,723.5 571.1,720.2 571.3,717.1 571.7,714.1M622.4,641.9 625.0,640.6 627.7,639.3 630.4,638.1 632.5,637.2M1397.8,637.4 1400.5,638.6 1403.2,639.8 1405.8,641.1 1408.0,642.2M1458.3,715.6 1458.6,718.6 1458.9,721.8 1459.1,725.1 1459.2,728.6" stroke="#1ff0f0" stroke-width="3.0" stroke-opacity="1.0" fill="none"/><path d="M573.8,471.3 574.2,474.3 574.6,477.0 575.0,479.7 575.5,482.3 576.0,484.7M614.3,539.9 616.9,541.5 619.5,543.0 622.2,544.4 624.3,545.5M1406.1,545.3 1408.7,543.9 1411.3,542.4 1413.9,540.9 1416.0,539.6M1454.1,483.5 1454.6,481.0 1455.0,478.4 1455.4,475.7 1455.8,472.8 1456.1,469.8M571.7,714.1 572.1,711.3 572.5,708.5 573.0,705.9 573.6,703.4 574.1,701.0M611.8,648.0 614.4,646.4 617.1,644.8 619.7,643.3 622.4,641.9M1408.0,642.2 1410.6,643.6 1413.3,645.1 1415.9,646.7 1418.5,648.4M1456.0,702.2 1456.5,704.6 1457.0,707.2 1457.5,709.9 1457.9,712.7 1458.3,715.6" stroke="#1ff0f0" stroke-width="3.25" stroke-opacity="1.0" fill="none"/><path d="M576.0,484.7 576.8,488.2 577.7,491.6 578.7,494.7 579.7,497.6 580.1,498.6M604.2,532.5 606.2,534.1 608.2,535.7 610.2,537.2 612.8,538.9 614.3,539.9M1416.0,539.6 1418.5,537.9 1421.1,536.1 1423.1,534.5 1425.1,532.9 1426.1,532.1M1450.1,497.6 1451.1,494.7 1452.1,491.6 1453.0,488.2 1453.8,484.7 1454.1,483.5M574.1,701.0 575.1,697.5 576.1,694.3 577.1,691.2 578.2,688.3 579.4,685.6M600.5,656.6 602.6,654.8 604.6,653.2 606.6,651.6 608.7,650.1 610.8,648.7 611.8,648.0M1418.5,648.4 1420.6,649.8 1422.6,651.2 1424.7,652.8 1426.7,654.4 1428.8,656.1 1429.8,657.0M1450.8,686.5 1452.0,689.3 1453.1,692.2 1454.1,695.4 1455.1,698.7 1456.0,702.2" stroke="#1ff0f0" stroke-width="3.5" stroke-opacity="1.0" fill="none"/><path d="M580.1,498.6 581.1,501.3 582.3,503.9 583.5,506.4 584.7,508.7 585.9,511.0 587.7,513.8 589.4,516.4 591.2,518.9 593.1,521.3 594.9,523.5 596.8,525.6 598.8,527.6 600.7,529.4 602.7,531.2 604.2,532.5M1426.1,532.1 1428.1,530.3 1430.1,528.5 1432.0,526.6 1433.9,524.6 1435.8,522.4 1437.7,520.1 1439.5,517.7 1441.3,515.1 1443.0,512.4 1444.3,510.3 1445.5,508.0 1446.7,505.6 1447.9,503.1 1449.0,500.4 1450.1,497.6M579.4,685.6 580.6,683.0 581.8,680.5 583.1,678.2 584.4,675.9 585.7,673.8 587.5,671.1 589.3,668.6 591.2,666.2 593.1,664.0 595.1,661.8 597.0,659.8 599.0,657.9 600.5,656.6M1429.8,657.0 1431.8,658.9 1433.7,660.8 1435.7,662.9 1437.6,665.1 1439.5,667.4 1441.4,669.8 1443.2,672.4 1445.0,675.2 1446.3,677.4 1447.6,679.7 1448.8,682.2 1450.0,684.7 1450.8,686.5" stroke="#1ff0f0" stroke-width="3.75" stroke-opacity="1.0" fill="none"/>
<line x1="557" y1="594.5" x2="1474.5" y2="594.5" stroke="#b4b4b4" stroke-width="1.1"/>
<line x1="1016.5" y1="239" x2="1016.5" y2="949" stroke="#b4b4b4" stroke-width="1.1"/>
</g>
</svg>
<div class="box" style="left:1891px;top:245px;width:6px;height:691px;background:#e6e6e6;border:1px solid #d9d9d9;border-radius:2px"></div>
<svg class="a" style="left:1909px;top:0px" width="2" height="1020"><rect x="0" y="250.0" width="1" height="2" fill="#c8c8c8"/><rect x="0" y="272.9" width="1" height="2" fill="#c8c8c8"/><rect x="0" y="295.8" width="1" height="2" fill="#c8c8c8"/><rect x="0" y="318.7" width="1" height="2" fill="#c8c8c8"/><rect x="0" y="341.6" width="1" height="2" fill="#c8c8c8"/><rect x="0" y="364.5" width="1" height="2" fill="#c8c8c8"/><rect x="0" y="387.4" width="1" height="2" fill="#c8c8c8"/><rect x="0" y="410.3" width="1" height="2" fill="#c8c8c8"/><rect x="0" y="433.2" width="1" height="2" fill="#c8c8c8"/><rect x="0" y="456.1" width="1" height="2" fill="#c8c8c8"/><rect x="0" y="479.0" width="1" height="2" fill="#c8c8c8"/><rect x="0" y="501.9" width="1" height="2" fill="#c8c8c8"/><rect x="0" y="524.8" width="1" height="2" fill="#c8c8c8"/><rect x="0" y="547.7" width="1" height="2" fill="#c8c8c8"/><rect x="0" y="570.6" width="1" height="2" fill="#c8c8c8"/><rect x="0" y="593.5" width="1" height="2" fill="#c8c8c8"/><rect x="0" y="616.4" width="1" height="2" fill="#c8c8c8"/><rect x="0" y="639.3" width="1" height="2" fill="#c8c8c8"/><rect x="0" y="662.2" width="1" height="2" fill="#c8c8c8"/><rect x="0" y="685.1" width="1" height="2" fill="#c8c8c8"/><rect x="0" y="708.0" width="1" height="2" fill="#c8c8c8"/><rect x="0" y="730.9" width="1" height="2" fill="#c8c8c8"/><rect x="0" y="753.8" width="1" height="2" fill="#c8c8c8"/><rect x="0" y="776.7" width="1" height="2" fill="#c8c8c8"/><rect x="0" y="799.6" width="1" height="2" fill="#c8c8c8"/><rect x="0" y="822.5" width="1" height="2" fill="#c8c8c8"/><rect x="0" y="845.4" width="1" height="2" fill="#c8c8c8"/><rect x="0" y="868.3" width="1" height="2" fill="#c8c8c8"/><rect x="0" y="891.2" width="1" height="2" fill="#c8c8c8"/><rect x="0" y="914.1" width="1" height="2" fill="#c8c8c8"/><rect x="0" y="937.0" width="1" height="2" fill="#c8c8c8"/></svg>
<svg class="a" style="left:1880px;top:927px" width="30" height="20"><polygon points="2,2 19,2 26,9.3 19,16.5 2,16.5" fill="#cccccc"/></svg>
<div class="box" style="left:165px;top:966px;width:1703px;height:6px;background:#e6e6e6;border:1px solid #dadada;border-radius:2px"></div>
<svg class="a" style="left:0px;top:984px" width="1920" height="3"><rect x="170.0" y="0" width="1" height="2" fill="#c9c9c9"/><rect x="193.3" y="0" width="1" height="2" fill="#c9c9c9"/><rect x="216.6" y="0" width="1" height="2" fill="#c9c9c9"/><rect x="239.9" y="0" width="1" height="2" fill="#c9c9c9"/><rect x="263.2" y="0" width="1" height="2" fill="#c9c9c9"/><rect x="286.5" y="0" width="1" height="2" fill="#c9c9c9"/><rect x="309.8" y="0" width="1" height="2" fill="#c9c9c9"/><rect x="333.1" y="0" width="1" height="2" fill="#c9c9c9"/><rect x="356.4" y="0" width="1" height="2" fill="#c9c9c9"/><rect x="379.7" y="0" width="1" height="2" fill="#c9c9c9"/><rect x="403.0" y="0" width="1" height="2" fill="#c9c9c9"/><rect x="426.3" y="0" width="1" height="2" fill="#c9c9c9"/><rect x="449.6" y="0" width="1" height="2" fill="#c9c9c9"/><rect x="472.9" y="0" width="1" height="2" fill="#c9c9c9"/><rect x="496.2" y="0" width="1" height="2" fill="#c9c9c9"/><rect x="519.5" y="0" width="1" height="2" fill="#c9c9c9"/><rect x="542.8" y="0" width="1" height="2" fill="#c9c9c9"/><rect x="566.1" y="0" width="1" height="2" fill="#c9c9c9"/><rect x="589.4" y="0" width="1" height="2" fill="#c9c9c9"/><rect x="612.7" y="0" width="1" height="2" fill="#c9c9c9"/><rect x="636.0" y="0" width="1" height="2" fill="#c9c9c9"/><rect x="659.3" y="0" width="1" height="2" fill="#c9c9c9"/><rect x="682.6" y="0" width="1" height="2" fill="#c9c9c9"/><rect x="705.9" y="0" width="1" height="2" fill="#c9c9c9"/><rect x="729.2" y="0" width="1" height="2" fill="#c9c9c9"/><rect x="752.5" y="0" width="1" height="2" fill="#c9c9c9"/><rect x="775.8" y="0" width="1" height="2" fill="#c9c9c9"/><rect x="799.1" y="0" width="1" height="2" fill="#c9c9c9"/><rect x="822.4" y="0" width="1" height="2" fill="#c9c9c9"/><rect x="845.7" y="0" width="1" height="2" fill="#c9c9c9"/><rect x="869.0" y="0" width="1" height="2" fill="#c9c9c9"/><rect x="892.3" y="0" width="1" height="2" fill="#c9c9c9"/><rect x="915.6" y="0" width="1" height="2" fill="#c9c9c9"/><rect x="938.9" y="0" width="1" height="2" fill="#c9c9c9"/><rect x="962.2" y="0" width="1" height="2" fill="#c9c9c9"/><rect x="985.5" y="0" width="1" height="2" fill="#c9c9c9"/><rect x="1008.8" y="0" width="1" height="2" fill="#c9c9c9"/><rect x="1032.1" y="0" width="1" height="2" fill="#c9c9c9"/><rect x="1055.4" y="0" width="1" height="2" fill="#c9c9c9"/><rect x="1078.7" y="0" width="1" height="2" fill="#c9c9c9"/><rect x="1102.0" y="0" width="1" height="2" fill="#c9c9c9"/><rect x="1125.3" y="0" width="1" height="2" fill="#c9c9c9"/><rect x="1148.6" y="0" width="1" height="2" fill="#c9c9c9"/><rect x="1171.9" y="0" width="1" height="2" fill="#c9c9c9"/><rect x="1195.2" y="0" width="1" height="2" fill="#c9c9c9"/><rect x="1218.5" y="0" width="1" height="2" fill="#c9c9c9"/><rect x="1241.8" y="0" width="1" height="2" fill="#c9c9c9"/><rect x="1265.1" y="0" width="1" height="2" fill="#c9c9c9"/><rect x="1288.4" y="0" width="1" height="2" fill="#c9c9c9"/><rect x="1311.7" y="0" width="1" height="2" fill="#c9c9c9"/><rect x="1335.0" y="0" width="1" height="2" fill="#c9c9c9"/><rect x="1358.3" y="0" width="1" height="2" fill="#c9c9c9"/><rect x="1381.6" y="0" width="1" height="2" fill="#c9c9c9"/><rect x="1404.9" y="0" width="1" height="2" fill="#c9c9c9"/><rect x="1428.2" y="0" width="1" height="2" fill="#c9c9c9"/><rect x="1451.5" y="0" width="1" height="2" fill="#c9c9c9"/><rect x="1474.8" y="0" width="1" height="2" fill="#c9c9c9"/><rect x="1498.1" y="0" width="1" height="2" fill="#c9c9c9"/><rect x="1521.4" y="0" width="1" height="2" fill="#c9c9c9"/><rect x="1544.7" y="0" width="1" height="2" fill="#c9c9c9"/><rect x="1568.0" y="0" width="1" height="2" fill="#c9c9c9"/><rect x="1591.3" y="0" width="1" height="2" fill="#c9c9c9"/><rect x="1614.6" y="0" width="1" height="2" fill="#c9c9c9"/><rect x="1637.9" y="0" width="1" height="2" fill="#c9c9c9"/><rect x="1661.2" y="0" width="1" height="2" fill="#c9c9c9"/><rect x="1684.5" y="0" width="1" height="2" fill="#c9c9c9"/><rect x="1707.8" y="0" width="1" height="2" fill="#c9c9c9"/><rect x="1731.1" y="0" width="1" height="2" fill="#c9c9c9"/><rect x="1754.4" y="0" width="1" height="2" fill="#c9c9c9"/><rect x="1777.7" y="0" width="1" height="2" fill="#c9c9c9"/><rect x="1801.0" y="0" width="1" height="2" fill="#c9c9c9"/><rect x="1824.3" y="0" width="1" height="2" fill="#c9c9c9"/><rect x="1847.6" y="0" width="1" height="2" fill="#c9c9c9"/></svg>
<svg class="a" style="left:1686px;top:955px" width="22" height="30"><path d="M3,2.6 H17.7 V20 L10.3,26.7 L3,20 Z" fill="#0067c0" stroke="#fff" stroke-opacity="0.3" stroke-width="0.5"/></svg>
<div class="box" style="left:0px;top:995px;width:1920px;height:1px;background:#c8c8c8"></div>
<div class="box" style="left:0px;top:996px;width:1920px;height:24px;background:#f0f0f0"></div>
<div class="box" style="left:1750px;top:997px;width:1px;height:23px;background:#dcdcdc"></div>
<div class="box" style="left:1829px;top:997px;width:1px;height:23px;background:#dcdcdc"></div>
<div class="t" style="left:1.00px;top:1001.35px;">Ziehen um Bilder zu bewegen (bei Bedarf Hochstelltaste zur Richtungseinschränkung verwenden), oder rollen mit rechts-ziehen oder Ctrl-ziehen</div>
<div class="t" style="left:1832.20px;top:1001.35px;">325,0 x 25...</div><svg class="a" style="left:0;top:0" width="700" height="130" viewBox="0 0 700 130"><defs>
<linearGradient id="wing" x1="0" y1="0" x2="1" y2="0"><stop offset="0" stop-color="#0a9a2a"/><stop offset="0.55" stop-color="#35b850"/><stop offset="1" stop-color="#9ad8a8"/></linearGradient>
<linearGradient id="sky" x1="0" y1="0" x2="0" y2="1"><stop offset="0" stop-color="#a8c8f8"/><stop offset="1" stop-color="#7ab2f6"/></linearGradient>
<linearGradient id="bord" x1="0" y1="0" x2="0" y2="1"><stop offset="0" stop-color="#5d77a8"/><stop offset="0.5" stop-color="#2f5a6a"/><stop offset="1" stop-color="#0c3a10"/></linearGradient>
</defs><g transform="translate(0 0) scale(1.0)"><path d="M1.3,11.2 C6,9.8 14,10 20.6,10.2 L20.6,16.6 C14,16.4 6,17.2 1.8,18.8 Z" fill="url(#wing)"/><path d="M1.8,6.6 L11,9.6 L20.8,10.2" stroke="#1a3a3a" stroke-width="1.1" fill="none"/><path d="M11.6,8.6 L10.4,15.5 L7.2,20.4 M10.4,15.5 L10,22.6" stroke="#0d1a10" stroke-width="1.5" fill="none"/><circle cx="11.9" cy="7.3" r="1.5" fill="#e8dc80" stroke="#3a3010" stroke-width="0.6"/></g><g transform="translate(10.2 55.5) scale(1.15)"><path d="M1.3,11.2 C6,9.8 14,10 20.6,10.2 L20.6,16.6 C14,16.4 6,17.2 1.8,18.8 Z" fill="url(#wing)"/><path d="M1.8,6.6 L11,9.6 L20.8,10.2" stroke="#1a3a3a" stroke-width="1.1" fill="none"/><path d="M11.6,8.6 L10.4,15.5 L7.2,20.4 M10.4,15.5 L10,22.6" stroke="#0d1a10" stroke-width="1.5" fill="none"/><circle cx="11.9" cy="7.3" r="1.5" fill="#e8dc80" stroke="#3a3010" stroke-width="0.6"/></g><rect x="116.7" y="61.5" width="23.7" height="13" fill="url(#sky)"/><rect x="116.7" y="74" width="23.7" height="6.3" fill="#1c5c1e"/><text x="119" y="71" font-family="Liberation Sans" font-size="9" font-weight="bold" fill="#dceeff" opacity="0.9">GL</text><g><rect x="226.5" y="60.5" width="7" height="4.5" fill="#4a8ac0"/><rect x="239" y="60.5" width="7" height="4.5" fill="#4a8ac0"/><rect x="226.5" y="61" width="7" height="2" fill="#a8cef0"/><rect x="239" y="61" width="7" height="2" fill="#a8cef0"/><rect x="227.5" y="66.5" width="3" height="9" fill="#f0a050"/><rect x="242" y="66.5" width="3" height="9" fill="#f09060"/><path d="M233,67 L239,74.5 M239,67 L233,74.5" stroke="#e8a050" stroke-width="2"/><rect x="234.5" y="62" width="3" height="2" fill="#f0b070"/><rect x="234.5" y="77.5" width="3" height="2.5" fill="#f0a040"/><rect x="226.5" y="77" width="7" height="3.5" fill="#2a8a2a"/><rect x="239" y="77" width="7" height="3.5" fill="#2a8a2a"/></g><rect x="402" y="66" width="18.7" height="13" fill="#7ca080"/><rect x="397.2" y="56" width="19.6" height="2" fill="#d0e2f8"/><rect x="397.2" y="58" width="19.6" height="9" fill="#78aef6"/><path d="M397.2,67 C403,66 410,66 416.8,67 L416.8,74.6 L397.2,74.6 Z" fill="#14561a"/><path d="M413.5,70.5 L418,75 L416,75 L416,77.5 L414,77.5 L414,75 Z" fill="#e8f8e8" transform="rotate(-40 415.5 74)"/><rect x="555.6" y="60" width="23.5" height="21.3" fill="url(#bord)"/><rect x="558.5" y="63.4" width="17.7" height="7.2" fill="#a2c6f8"/><rect x="558.5" y="70.6" width="17.7" height="7.4" fill="#2e6a2c"/><path d="M559.5,64.5 H575.5 M559.5,64.5 V76.5 H575.5 V64.5" stroke="#c8e0c8" stroke-width="0.8" fill="none" opacity="0.8"/><rect x="36" y="98.6" width="29" height="14.7" fill="#bcd6f8"/><rect x="36" y="113.3" width="29" height="11" fill="#8aa890"/><rect x="45.9" y="101.3" width="22.9" height="12" fill="#7db2f5"/><rect x="45.9" y="113.3" width="22.9" height="8.2" fill="#165a18"/><path d="M48.6,108.4 L53.5,104 L53.5,106.3 L61.7,106.3 L61.7,110.5 L53.5,110.5 L53.5,112.8 Z" fill="#ffffff"/><rect x="115.9" y="96.4" width="32.3" height="16.9" fill="#b2ccf8"/><rect x="115.9" y="113.3" width="32.3" height="12.6" fill="#8fae92"/><rect x="120.3" y="101.3" width="24" height="12" fill="#7db2f5"/><rect x="120.3" y="113.3" width="24" height="8.2" fill="#165a18"/><g fill="#ffffff"><path d="M121.8,102.8 L127,102.8 L125.3,104.5 L127.5,106.7 L125.7,108.5 L123.5,106.3 L121.8,108 Z"/><path d="M142.8,102.8 L137.6,102.8 L139.3,104.5 L137.1,106.7 L138.9,108.5 L141.1,106.3 L142.8,108 Z"/><path d="M121.8,120 L127,120 L125.3,118.3 L127.5,116.1 L125.7,114.3 L123.5,116.5 L121.8,114.8 Z"/><path d="M142.8,120 L137.6,120 L139.3,118.3 L137.1,116.1 L138.9,114.3 L141.1,116.5 L142.8,114.8 Z"/></g><rect x="205" y="107.3" width="23" height="9" fill="#b8d2f6"/><rect x="205" y="116.3" width="23" height="9.6" fill="#8caa8e"/><path d="M196.3,104.6 L218.2,95.3 L221.6,103.8 L199.7,113 Z" fill="#7ab0f5"/><path d="M199.7,113 L221.6,103.8 L224.8,112.2 L202.9,121 Z" fill="#165a18"/><path d="M216.5,116.5 L220,116.5 L220,112.8 L222.5,112.8 L222.5,116.5 L226,116.5 L221.2,123.7 Z" fill="#ffffff"/></svg>
</body></html>
